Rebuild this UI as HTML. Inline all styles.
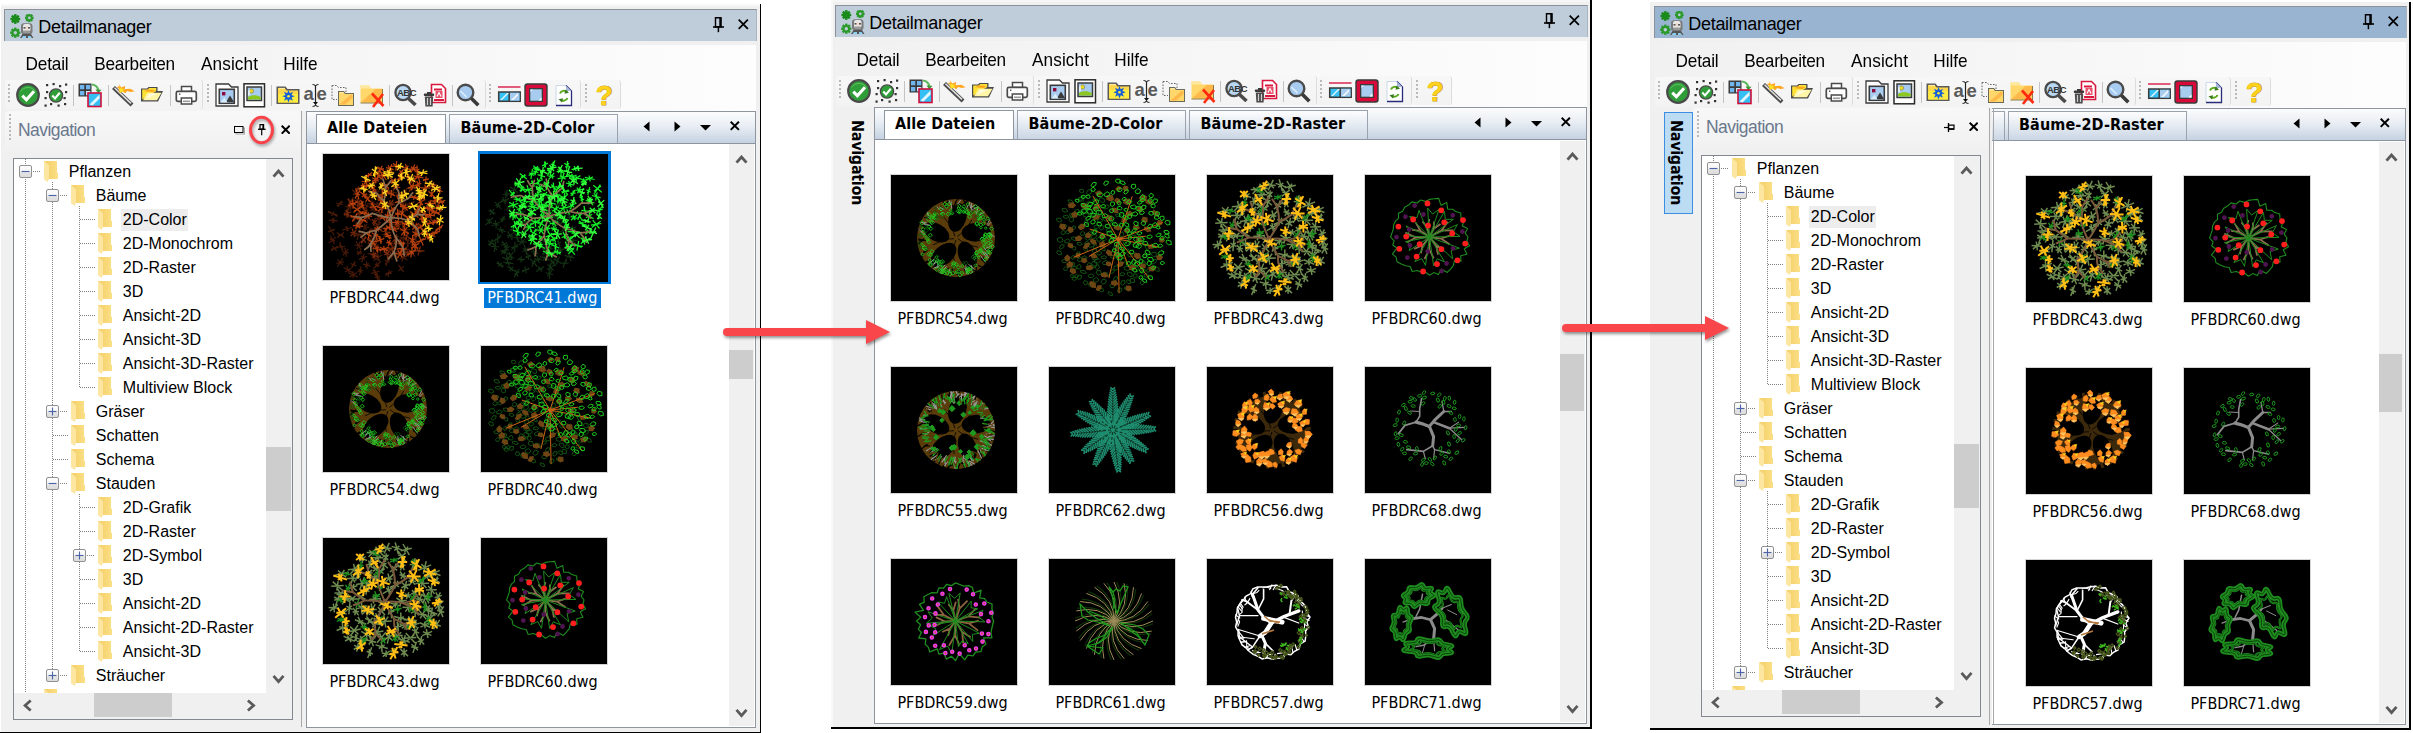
<!DOCTYPE html><html><head><meta charset="utf-8"><title>Detailmanager</title><style>html,body{margin:0;padding:0;background:#fff}#p{position:relative;width:2413px;height:733px;overflow:hidden;background:#fff}#p div,#p span,#p svg{position:absolute}#p span{white-space:nowrap}.tr{font-family:'Liberation Sans',sans-serif;font-size:16px;line-height:22px;height:22px;padding:0 1px 0 2px;color:#000}</style></head><body><div id="p"><svg width="0" height="0" style="left:0;top:0"><defs><linearGradient id="fg" x1="0" x2="1" y1="0" y2="0"><stop offset="0" stop-color="#f3cf6a"/><stop offset=".5" stop-color="#f7d674"/><stop offset="1" stop-color="#fbe088"/></linearGradient><linearGradient id="pm" x1="0" x2="0" y1="0" y2="1"><stop offset="0" stop-color="#fff"/><stop offset=".5" stop-color="#f4f4f4"/><stop offset=".55" stop-color="#e4e4e4"/><stop offset="1" stop-color="#dcdcdc"/></linearGradient><symbol id="t44" viewBox="0 0 126 126"><path d="M25.2 95.4l-5.3 6M25.4 98.6l-5.6 -0.4M23.4 102.9l-1.6 -9M86.2 98.7l5.2 0.1M85.5 95l6.6 7.6M91.2 97.5l-4.8 2.6M39.2 40.2l5.6 2.6M42.1 38.9l-0.1 5.2M45.5 40.8l-7 1.5M58.1 107.2l-7.6 7.3M56.7 111.7l-4.8 -1.6M54.8 113.5l-1.2 -5.2M44 70l-3.6 6M46.4 73.4l-8.3 -0.7M43.2 76.1l-1.9 -6.2M69.8 45.8l-0.5 6.2M74.6 47.7l-10.1 2.5M72.1 51.7l-5.1 -5.5M5.6 72.2l5.5 9.1M10.8 75.3l-5 2.8M11.8 75.6l-7 2.1M89.9 64.6l-7.8 4.8M87.4 70.1l-2.8 -6.1M84.4 71l3.2 -8M20.8 59.3l5.6 3.1M21.6 58.4l4 4.8M26.1 60.1l-5 1.4M37.9 101.7l4.1 4.1M41.3 99.4l-2.6 8.9M44.1 102.2l-8.2 3.2M75.9 96.3l-8 7M74.4 99.5l-5 0.5M74.8 104.2l-5.8 -8.9M54.4 60.9l2.1 8.1M57.4 63.6l-3.9 2.7M57.8 65.7l-4.7 -1.5M62.2 78.9l2.7 4.7M66.9 79.5l-6.7 3.5M68.2 82.4l-9.4 -2.2M72.6 59.1l5.7 1.6M75.3 56.1l0.3 7.6M78.6 59.8l-6.4 0.3M69.3 117.3l-7.2 4.3M68.6 119.5l-5.9 -0.1M65 123l1.3 -7.1M94.7 76.6l-5 9.1M95.4 81l-6.4 0.3M92.7 86l-1 -9.7M30.2 46l-4.5 2.4M30.9 49.9l-5.9 -5.3M25.6 51.6l4.7 -8.7M29.1 73.5l-10.1 2.5M25.4 76.8l-2.9 -4.1M24.2 77.2l-0.4 -5M14.4 105.7l5.3 5.5M19.6 104.2l-5.1 8.5M20.8 107.9l-7.5 1.3M86.6 59.7l10.3 -0.4M92.5 54.6l-1.5 9.7M95.8 57.1l-8.2 4.7M50.6 84.2l4.4 1.8M53.8 80.5l-2 9.3M56.9 83.9l-8.2 2.5M35.7 115.2l3.2 3.5M38 112.5l-1.3 8.9M40.2 116.3l-5.7 1.2M19.9 47.8l-6.4 3.9M20.2 50.7l-7 -1.7M14.9 52.9l3.6 -6.2M75.3 110.9l5.5 7.2M77 112.3l2.2 4.4M80.8 112.2l-5.4 4.7M49.2 81.7l-4.5 7.9M49.8 86.8l-5.5 -2.3M48.7 89l-3.4 -6.7M44.6 99.7l10.7 0.2M50.8 95.4l-1.6 8.8M52.6 99l-5.1 1.6M66.5 103.8l-4.4 6.7M66.8 108l-5.1 -1.6M63.3 112l2 -9.5M44.6 50.7l-2.6 4.8M45.6 52.2l-4.6 1.9M44.3 58.2l-2 -10.2M68.8 56.7l-4.5 8.7M68.5 62.7l-3.8 -3.3M67.2 63.9l-1.2 -5.7M88 83.9l4 7.7M94.1 86l-8 3.5M93.8 89l-7.5 -2.6M51.2 119.8l6 6.5M53.7 118.7l1.1 8.8M57.1 122.4l-5.7 1.4M9.4 92l4.3 4.9M14.7 92.1l-6.4 4.6M15.2 93.5l-7.3 1.9M64.9 31.1l-2.6 10M66.2 34.9l-5.1 2.4M67.4 39.5l-7.6 -6.8M56.6 39.8l3.1 6.7M62.4 41l-8.4 4.3M63.2 43l-10.1 0.3M27.6 109.5l5.6 2.4M32.1 107.3l-3.4 6.8M32.2 108.6l-3.7 4.2M69.7 90.4l8.8 -3.2M70.3 85.8l7.5 6M77 86.2l-5.8 5.1M56.4 53.6l0.5 9.3M60.5 58.2l-7.8 0.3M58.9 60.6l-4.5 -4.6M50 70.5l9.9 3.6M55.1 68l-0.4 8.8M57.9 68.2l-5.9 8.2M63.1 50.2l-0.7 5.7M65.4 50.4l-5.2 5.3M66.7 55.5l-7.9 -5M40.6 79.7l-10.1 2.2M40.3 82.5l-9.5 -3.4M34.1 85.9l2.8 -10.2M56.5 36.8l-8.1 3.7M55.3 39.8l-5.6 -2.2M50.7 42.3l3.6 -7.1M70.4 35.5l-1.2 5.6M71 34.7l-2.4 7.1M74.8 39.3l-9.8 -2.1M82.3 71.6l-0.7 9.1M87.2 75.5l-10.5 1.2M84.1 77.9l-4.3 -3.6M76.5 82.7l7.6 2.9M80.6 80.3l-0.5 7.7M84.6 82.3l-8.6 3.6M30.3 36.2l3.2 4M33.6 35.2l-3.3 6M34.8 40.7l-5.8 -4.9M8.9 64.4l2.6 4.3M11.3 63.6l-2.1 5.8M14.7 66.9l-8.9 -0.8M30.6 50.5l-7.6 6.2M31.4 54.7l-9.2 -2.3M27.3 56.5l-0.9 -5.8M83.4 46l-6.9 -1.2M82.4 48.7l-4.9 -6.5M79.9 48.6l0.1 -6.4M31.5 91l8.1 1.1M33 87.3l5.2 8.6M37.2 87.7l-3.2 7.6M44.4 59.1l-0.4 7.8M45.7 60.3l-3 5.5M47.9 66.7l-7.4 -7.4M48 73.9l1.4 5.9M50.5 74.5l-3.6 4.6M52.7 75.2l-8.1 3.3M83.2 93.1l-3.9 6.8M85.7 95l-9 3.1M83 99.1l-3.6 -5.1M71.4 68.1l3.4 4.7M75.4 67.7l-4.5 5.3M77.1 71l-7.9 -1.1M89.1 89.7l7.2 7.8M93.8 89.6l-2.2 8M98 94.2l-10.5 -1.3M47.7 51.7l4 6.3M51.9 52.5l-4.4 4.6M52 55.7l-4.6 -1.7M44.2 49.9l9.9 0M48.8 46.3l0.7 7.1M51.4 47.2l-4.5 5.3M29.8 61.4l5.7 4.8M33.8 60.3l-2.4 7.1M36.1 61.2l-7.1 5.3M33.1 46.7l4.4 9.4M36.5 49l-2.5 4.8M39.4 51.8l-8.3 -0.8M20.9 78.3l-6.6 5.6M20.2 81.2l-5.2 -0.2M21.4 83.9l-7.6 -5.4M81.9 49.3l8.5 3.6M86.2 48.5l-0.1 5.2M89.4 50.8l-6.6 0.6M71.4 72.1l-4.8 2M72.9 71.8l-7.8 2.5M69.1 77.2l-0.1 -8.3M51.5 115.3l1.7 6.2M56.5 117.2l-8.4 2.2M55 121l-5.4 -5.3M53.4 100l3.2 7.3M55.3 100.6l-0.6 6.1M59.3 100.8l-8.6 5.7M64.4 98.7l5.2 6.7M68 97.1l-2 9.9M70.1 100.9l-6.1 2.3M84.4 85.4l0.8 7.9M85.8 84.1l-2.1 10.5M87.1 89.8l-4.7 -0.8M59.5 93.7l-7 1.8M57.6 99.2l-3.1 -9.3M54.5 96.9l3 -4.6M53.8 47.8l4 6.9M57.6 49.1l-3.4 4.3M61 52.1l-10.2 -1.8M62.7 95.5l6.7 0.6M64.7 91.7l2.6 8.2M66.9 93.5l-1.7 4.7M5.2 56.9l9.1 5.5M11 57.5l-2.5 4.4M14.6 61.1l-9.7 -3M16.4 91l3.5 3.3M16.6 87.8l3.3 9.9M22 92.5l-7.5 0.5M52.4 42l-6.9 2.2M50.5 45l-3.1 -3.8M48.9 45.8l0.2 -5.4M6.9 84.9l5.1 2M7.3 81.8l4.2 8.4M12.8 82.9l-6.8 6.1M39.1 58.9l-6.5 2M36.9 62.2l-2 -4.7M35.6 63.7l0.6 -7.7M33.9 118.6l-7.6 4.5M34.7 122.9l-9.3 -4.1M30.2 124.3l-0.2 -7M83.4 69.1l-7.4 1.5M82.3 70.4l-5.3 -1.1M79.7 74.8l-0.1 -9.9M34.1 97.2l4.4 2.9M38 96.5l-3.3 4.3M39 97.8l-5.4 1.7M76.7 100.4l7.7 5.8M82.5 98.9l-3.8 8.9M84.4 101.9l-7.7 2.8M31 71.4l7.2 -0.6M33.2 68.1l2.8 6.1M36.7 68.1l-4.3 6.1M23.8 112.1l3 8M28.3 114.2l-6.1 3.9M29.8 118.8l-9.1 -5.4M45.8 109.5l-3.9 3.2M47.6 112.1l-7.5 -2M44.1 114.9l-0.6 -7.5" fill="none" stroke="#4a1a08" stroke-width="1.15" /><path d="M62.5 94.2l2.3 10.3M66 97.7l-4.7 3.3M66.1 100.7l-4.7 -2.8M113.5 45.1l-3.8 3.1M116.8 46.2l-10.4 0.8M112.9 51.7l-2.6 -10M62.7 36.4l3.1 4M65.7 34.4l-3 7.9M67.2 36.6l-6 3.4M31.6 46.3l8.4 5.6M33.7 44.6l4.3 9.2M37.4 45.5l-3.2 7.4M80.2 79.4l7.3 5.5M84.5 77.3l-1.4 9.7M85.7 78.5l-3.7 7.2M38.2 82.8l4.6 6M42.7 82.2l-4.3 7.3M43.4 83.5l-5.8 4.7M86.3 24.8l8.1 3.2M88 24.2l4.7 4.5M93.7 22.8l-6.8 7.2M98.2 36.3l0.9 7.7M99.8 36.5l-2.4 7.5M102.4 41.1l-7.5 -1.9M56.5 14.9l0.2 6.6M58.2 15.3l-3.2 5.8M61.6 18.6l-10 -0.8M92.8 59.9l6.1 -2.6M93.4 55.5l4.9 6.1M99.4 55.1l-7.2 7M110.4 80.3l-4.7 1.9M112.8 83l-9.6 -3.5M107 84.4l2 -6.2M69.8 60.6l-2.3 4.2M71.9 61.9l-6.5 1.7M70.2 66.4l-3.1 -7.4M107.5 65.3l6.8 4.2M111.4 65l-0.9 4.7M113.3 65.7l-4.8 3.3M82.3 98.1l4.8 2.7M83.9 96.4l1.5 6M86.1 97.3l-2.8 4.3M54.1 66.6l-5.2 2.8M54.2 70.8l-5.4 -5.7M50.7 72l1.5 -8M76.8 38.5l9.5 1.3M81.4 35.2l0.3 8M83.4 35.5l-3.8 7.3M67.2 26l2.5 4.2M71.2 27.1l-5.6 2M71.2 28.4l-5.5 -0.5M77.5 70l-5.1 3.5M77 73.4l-4 -3.1M75.4 75l-0.9 -6.4M22.6 56.1l3.8 6.4M25.1 54.8l-1.3 9M28.4 57.8l-7.7 3M57.8 77l9.9 1.6M61.1 73.8l3.3 7.9M63.6 74.2l-1.7 7.1M49.9 35.6l1.5 7.9M52.2 35.3l-3.1 8.5M55.3 40.6l-9.2 -2M75.3 82l-5.7 5.9M74.2 87.6l-3.3 -5.3M71.4 89.9l2.3 -9.9M93 68.7l3 5.1M95.7 68.9l-2.4 4.6M96.2 69.2l-3.4 4.1M49.1 89.5l5.1 4.5M50.7 88.4l2 6.7M53.7 88.3l-4.1 7M83.1 51.4l-4.3 2.7M82.3 57.4l-2.7 -9.3M81.2 55.3l-0.4 -5M97.4 92.2l-2.3 9.2M101.5 96.8l-10.6 -0M98.4 97.9l-4.4 -2.2M36.3 65.3l2.5 4.9M37.7 64.1l-0.3 7.1M40.7 65.6l-6.3 4.2M70.2 45.8l-5.5 8.1M70.6 50.7l-6.2 -1.7M68.5 53.5l-2.1 -7.3M52.8 98.6l-2.9 5.7M55.2 102.9l-7.6 -2.8M52 104.6l-1.3 -6.2M33.5 75.9l-5.8 6.1M33.8 79.4l-6.5 -0.9M31.9 83.2l-2.7 -8.6M53.6 23.4l-3.4 8.1M56.3 25.1l-8.8 4.6M54.5 28.6l-5.3 -2.5M86.1 49l4.5 3M88.2 48l0.4 4.9M91.5 47.2l-6.3 6.5M25.7 46.9l3.7 3.3M24.6 44.7l6 7.7M30.5 45.5l-5.9 6.1M97.7 65.3l7.9 1.1M99.2 62.4l4.8 6.9M103.9 62.2l-4.5 7.4M41.2 54.6l1.4 4.6M44.3 56.1l-4.7 1.5M45.1 61l-6.4 -8.3M66.4 13l1 8.2M69 15.8l-4.1 2.6M71.5 18.5l-9.1 -2.7M35.6 32.4l-2 5.7M37 34.8l-4.8 0.9M37 36.3l-4.8 -2.1M103.9 54.6l8.5 2.4M106.3 52.1l3.6 7.4M109.8 53.9l-3.4 3.9M83.3 34.2l9.1 -0.1M87.4 31.5l1 5.2M90 30.6l-4.1 7.1M72 92.3l-5.5 4.3M73.9 95.2l-9.3 -1.4M69.5 98.1l-0.5 -7.1" fill="none" stroke="#7a2a0a" stroke-width="1.15" /><path d="M38 52.3l-7.5 6.3M37.2 54l-6 3M37.9 58.2l-7.5 -5.4M99.8 60.8l-1.2 7.6M102.2 63.9l-6.1 1.4M101.5 69.4l-4.7 -9.6M76 39.1l2.8 4.5M78.7 39.2l-2.6 4.3M81.4 41.6l-8.1 -0.4M68.8 10.2l-3.8 8.7M70.7 15.6l-7.6 -1.9M68.7 17.8l-3.7 -6.5M89.7 81.1l-0.4 11M91.8 84.8l-4.6 3.4M92.3 89.1l-5.7 -5.2M43.7 80.1l4.7 1.8M43.7 79.3l4.6 3.3M47.2 75.6l-2.4 10.7M90.4 21.8l10.1 2.2M94.3 18.9l2.2 8.1M99.7 20l-8.5 5.8M66.1 75.7l10.1 -1.1M68.3 72.3l5.7 5.8M72 72.7l-1.8 4.9M71.7 99.6l10.6 0.8M74.9 96.4l4.3 7.1M79.7 95.9l-5.4 8.2M106.8 30.5l-8.5 6.9M107.3 34l-9.5 -0.2M103.4 37.3l-1.6 -6.7M87.8 41.3l7.1 4.3M92.4 41l-2 4.8M95.9 43.3l-9.1 0.1M109.5 47.3l7.8 -2M110 42.5l6.8 7.5M115.5 43.6l-4.1 5.5M41.1 23.7l3.3 7.8M43.9 25.1l-2.5 5M46.7 27.6l-8.1 -0.1M113.7 74.8l-3.4 7.8M116.9 77.3l-10 2.8M114.5 79.7l-5 -1.9M57.9 60.5l4.1 6.1M62.7 62.1l-5.5 2.9M65.2 64.4l-10.5 -1.9M54.6 41.9l9.1 -2.9M59.3 35l-0.2 10.9M60.1 35.3l-1.8 10.5M67.2 85.6l-1.6 6.5M69.4 89.1l-6.1 -0.5M68.6 91.3l-4.5 -4.9M79.8 20.2l-5.2 7.6M80.7 22.2l-7 3.6M79.3 26.5l-4.3 -4.9M41.1 41.6l7 6.5M42.8 42l3.7 5.7M46.7 42l-4.1 5.7M57.6 28.3l8.5 6.2M60.4 27.6l2.9 7.7M66.2 29.8l-8.8 3.1M82.6 50.4l-2.7 5.4M85.6 53.9l-8.7 -1.5M84.7 56.5l-6.9 -6.9M63.7 50.9l-8.9 6.4M64.6 55l-10.6 -2M58.6 58.8l1.2 -9.6M97.1 73.3l8.2 6.9M105.1 73.3l-7.8 7M104.5 78.8l-6.5 -4M49.4 59l-7.7 5.4M49.2 62.3l-7.2 -1.2M46 64.9l-0.8 -6.5M58.4 95.7l-8.2 -1.2M54.8 98.6l-1.1 -6.9M53.3 97.4l2.1 -4.6M80.2 61l8.5 5.5M82.2 61.4l4.5 4.8M85.6 61.6l-2.2 4.3M101.8 53.4l5.4 1.4M103.8 51.2l1.4 5.9M108.5 53.2l-8 1.8M81.1 72.5l0.6 9.4M84.4 73l-6 8.3M85.8 79.7l-8.9 -5.2M52.9 37.4l-4.9 2.3M55.6 40.5l-10.1 -3.9M51 41.2l-1 -5.2M77.2 86l3.3 6.9M81 88.1l-4.4 2.6M82.1 89.4l-6.6 0M108.8 37.3l-0.3 5.7M110.7 37.9l-4.2 4.6M111.9 43.1l-6.5 -5.9M73.3 54.3l-8.1 2.7M70.1 58.2l-1.6 -5.1M66.8 58.3l4.9 -5.3M96 81.5l4.2 9.9M100.7 84.4l-5.1 4.2M103.1 84.7l-10 3.6M82.5 9.9l2 8.9M85.3 11.6l-3.7 5.5M88.1 15.6l-9.3 -2.5M40.1 72.1l-10.2 -0.4M37.3 74.3l-4.6 -4.7M32.5 74.9l5 -5.9M102.1 60.1l9.9 1.7M106.1 57.3l2 7.3M110 58.4l-5.9 5.2M86.2 96.7l4.7 3.2M89.4 93.1l-1.6 10.4M92.9 95.6l-8.6 5.4M52 21.5l0.7 7.9M55.6 23.1l-6.5 4.7M55.6 27.1l-6.5 -3.4M55.8 83.8l3 4.3M56.8 81.9l1.2 8M61.3 84.3l-8 3.3M75.8 65l-3.3 6.3M77.9 67.9l-7.5 0.5M76.2 70.1l-4.1 -4M100.5 40.5l-2.1 5.3M101.9 43.5l-4.9 -0.8M102.2 46.3l-5.4 -6.3M92.2 88.6l-0.2 6.5M96.2 89.3l-8.1 5.1M94.9 94.7l-5.6 -5.8M56.9 17.2l6.5 8.8M61.8 17.8l-3.4 7.7M62.5 22.6l-4.7 -1.9M87.3 57.4l8.2 6.2M94.3 57l-5.9 7M94.4 59.5l-6 1.9M34.4 59l-5 8.6M36.3 63.6l-8.9 -0.7M36.5 65.3l-9.3 -4.1M108.1 45.8l-1.9 7M112.7 49.3l-11 0M108.8 51.1l-3.3 -3.7M51.2 73.6l7.4 2.5M54.2 72.1l1.3 5.4M57.1 73.2l-4.4 3.3M64 38l8.2 3.9M68.5 35.9l-0.7 8.1M71 40.1l-5.7 -0.4M33.1 35.2l2.8 10.3M37.1 36.1l-5.2 8.5M37.2 40.8l-5.4 -1M105.7 24.6l-5.7 2M105.5 25.4l-5.4 0.3M102.6 28.6l0.5 -6.1M97 26.9l-3 7.4M98.3 29.2l-5.5 2.8M97.2 34.1l-3.5 -7M110.1 67.7l7.6 -1M114.2 64.2l-0.4 6.2M117.7 64.9l-7.5 4.7M45.2 32l-9.6 2.6M42.9 35.2l-5.1 -4M41.2 37.3l-1.6 -8.1M85.5 19.7l1.1 10M87.6 22.3l-3.2 4.8M89.6 27.2l-7.2 -4.9M93.9 69.8l-4.5 5.9M95.8 75.2l-8.3 -4.8M93.3 77.1l-3.4 -8.8M107.3 81.3l-5.5 2M106.8 85.9l-4.6 -7.2M104.8 85.4l-0.6 -6.1M91.8 10.4l-3.9 8.7M93.6 13.4l-7.5 2.5M91.8 16.9l-3.8 -4.4M37.7 46.1l3.1 8.6M40.1 47l-1.7 6.7M41.5 51.5l-4.4 -2.2M106.8 28.2l6.1 6.7M110.7 28.1l-1.7 6.9M113.7 30.8l-7.6 1.6M72.7 30.3l1.1 5.3M76.1 30.6l-5.6 4.7M77.2 33.5l-8 -1.1M116.5 71.2l0.2 5.6M119.9 70.9l-6.7 6.2M119 73.4l-4.8 1.3M50.3 83.8l-1.7 9.5M53.2 86.9l-7.4 3.4M53.1 91.2l-7.3 -5.3M48.9 48.4l4.4 8.6M55.7 52.2l-9.2 1.1M54.2 56.2l-6.3 -6.8M54.7 42.4l6.8 8.1M59.9 41.8l-3.6 9.3M61.4 47.2l-6.7 -1.4M83.9 66.6l-3.6 6.6M84.9 70l-5.7 -0.1M86.4 72.2l-8.6 -4.7M105.9 66.4l4.8 4.7M112.3 66.5l-8.1 4.5M113.1 67.9l-9.6 1.7M92.2 50.9l5.8 7.1M97.8 49.7l-5.4 9.4M98.5 50.7l-6.7 7.5M118 34.1l-3.7 4.1M119.6 37.7l-6.8 -3.1M117 39.7l-1.6 -7M113.4 51.8l5.4 4.8M114.9 50.2l2.3 8M118.5 53.1l-4.9 2.2M80.5 15.2l-5.4 6.4M79.9 16.8l-4.1 3.2M79.1 21l-2.5 -5.3M42.3 63.6l-3.9 5.4M43.1 66.7l-5.5 -0.9M44.5 68.5l-8.3 -4.4M46.6 31.3l6.4 5.1M49.1 30.2l1.5 7.4M52.6 32.3l-5.5 3.2M89.4 77.4l7.4 5.2M93 76.7l0.1 6.7M95.8 78.7l-5.4 2.7M62.9 68l8.2 0.3M65.8 65l2.5 6.4M67.6 64.8l-1.1 6.9M38.8 57.1l2.9 3.9M43.9 58l-7.2 2.2M44.4 60l-8.1 -1.8M65.2 56.7l-2 10.5M68.4 60.4l-8.4 3.1M66.5 63.7l-4.6 -3.5M70 9.3l6.6 5.2M73.6 7l-0.7 9.7M78.3 11.4l-10.1 1M41.8 21.7l7.2 -0.6M45.4 18.9l-0 4.9M49.2 18.3l-7.6 6.3M72.7 24.1l-4.7 5.4M73 26.7l-5.4 0.2M73.9 30.5l-7.2 -7.4M72.2 59.1l5 1.4M74.5 54.9l0.4 9.9M76.9 58.6l-4.4 2.4M94.8 44.8l5.2 6.2M97.5 44.3l-0.1 7.2M100.8 46.3l-6.6 3.2M61.8 79.6l6.8 4.9M63.9 79l2.6 6.1M68.2 81.2l-6 1.6M57.3 93.5l7.6 3.2M60.8 91.9l0.6 6.3M65.5 93.3l-8.9 3.4M73.8 42l4.4 10M78.4 45.3l-5 3.3M79.7 45.2l-7.6 3.5M61 14.8l-6.7 -0.1M60.9 16.8l-6.5 -4.1M56.1 17.8l3.2 -6M59.8 22.5l-9.8 -3.1M58.3 25l-6.8 -8.2M54.4 25.4l1 -9M43.7 28.4l-0.4 6.4M46.4 30.2l-5.8 2.9M48.1 32.4l-9.2 -1.5M34.5 47.6l-9.3 4.5M32.7 50.3l-5.7 -0.9M30.1 54.3l-0.5 -8.8M83.7 94.8l-9.7 0M81.9 95.2l-5.9 -0.8M76.8 99.4l4.2 -9.3M95.1 73.8l5.1 -1.9M96.7 70.1l1.8 5.5M101.7 69.6l-8 6.4M107.4 50.9l3.7 8.4M112.3 53.9l-6.2 2.4M111.7 59.1l-5 -8.1M106.8 60.5l-9 -0.1M106.7 63.5l-8.8 -6M103.6 65.7l-2.7 -10.4M86.4 30.3l6.4 4M90.7 28.5l-2.1 7.7M94.3 30.5l-9.3 3.7M60.2 74.6l10.2 -1.9M62.9 71.6l4.8 3.9M68.8 70.5l-7 6.2M55.3 80.3l-4.8 1.6M56.6 83.1l-7.5 -4.1M54 86.4l-2.2 -10.7M79.9 53.8l-1.7 10.6M81 57.4l-3.8 3.5M81.8 61.7l-5.4 -5.2M90.3 14.5l7.6 4.2M94.1 11.4l0 10.3M96.4 15.1l-4.6 3M114.6 54.9l-4.2 6.9M116.5 58.7l-8 -0.6M116.8 60.6l-8.7 -4.5M40.5 37.7l1.9 7.2M44 39.7l-5.1 3.3M45.6 44.8l-8.3 -6.9M115.8 47.2l5.4 1.1M116.5 43l4.1 9.6M122.2 46.3l-7.4 2.8" fill="none" stroke="#b8400c" stroke-width="1.25" /><path d="M68 64Q76.1 63.2 84.8 66.3M84.8 66.3Q89.7 63 94.3 60.4M94.3 60.4Q94.9 56.7 96.5 54.4M94.3 60.4Q97.9 61.3 101.1 60.6M84.8 66.3Q89.2 69.7 94.2 74.8M94.2 74.8Q96 79 96.2 82M68 64Q68.2 76.3 73.2 84M73.2 84Q77.7 88.7 80.1 94.1M80.1 94.1Q81.1 98.1 81.2 101.6M73.2 84Q73.8 91.6 71.2 97.3M71.2 97.3Q71.6 101.6 73.8 106.8M71.2 97.3Q68.1 102.1 65.4 104.8M68 64Q61.2 70.1 53.4 76.4M53.4 76.4Q52.4 82.5 48 89.3M48 89.3Q47.6 94 48 97.3M48 89.3Q45.6 93.4 41.8 95.6M53.4 76.4Q48.9 76.8 43.2 79.1M43.2 79.1Q40.3 81.6 37.9 83.1M43.2 79.1Q40.1 77.9 36.2 77.4M68 64Q59.2 62.8 49.2 59.4M49.2 59.4Q43.5 62.2 39 63.3M39 63.3Q36.2 67 34.7 69.7M39 63.3Q34.6 63.2 31.2 62.5M68 64Q66.4 54.4 61 47M61 47Q57.1 44.2 53.4 39.1M53.4 39.1Q50.2 38.5 46 37.5M61 47Q62.7 40.3 62.6 33.4M62.6 33.4Q60.9 28.8 60 25.1M62.6 33.4Q65.7 29.6 67.7 27.2M68 64Q71.1 54.8 75.6 49.2M75.6 49.2Q76.2 43.6 75.7 37.9M75.7 37.9Q73.7 34.7 72.2 30.9M75.6 49.2Q81.7 46.1 85.3 44.4M85.3 44.4Q87.3 41.7 89.7 38.8" fill="none" stroke="#8c6e50" stroke-width="1.7" stroke-linecap="round"/><path d="M84.8 52.6l10.9 -0.5M88.2 48.7l4.2 7.4M94.5 50l-8.5 4.7M84.4 13.6l-2.3 9.2M88 16.9l-9.4 2.5M84.7 21l-2.9 -5.7M59.7 29l-3.2 6.5M60.6 31.1l-5.2 2.4M59.4 35.6l-2.7 -6.7M70.3 20.4l-10.5 1.1M69.8 23.3l-9.5 -4.6M65.1 25.3l-0 -8.6M40.9 22.5l4.1 4M43.3 20.9l-0.7 7.2M47.6 26.6l-9.3 -4.2M67.8 14.2l-4.1 8.4M71.1 19.1l-10.6 -1.4M67.1 21.1l-2.6 -5.4M114.7 31.1l-3.7 6.9M117.6 32.6l-9.7 3.8M117 37.5l-8.4 -5.9M40.4 31.6l0.6 6.9M44.7 35.7l-8.1 -1.2M42.7 37.2l-4.2 -4.3M78.8 37.4l0.1 10.7M81.4 41.1l-4.9 3.3M81.3 44.7l-4.8 -3.8M99.5 76.3l4.3 4.9M102 74.7l-0.8 8.2M104.5 76.4l-5.7 4.7M64.5 36.3l-4.8 3.3M64.6 36.9l-5 2.3M63.6 42l-3 -8M112.7 54l10.8 -0.6M116.7 51.3l2.9 4.6M120.6 51.2l-5 4.8M78.5 8.9l-4.1 7.4M80.4 12.5l-8 0.1M77.7 14.7l-2.5 -4.3M120.3 63.5l-6.4 5.2M120.6 68.5l-7 -4.8M116.3 71.2l1.7 -10.3M94.5 17.8l9.9 1.9M100.7 15.4l-2.4 6.7M104.4 17l-9.9 3.5M60.9 46.7l1.9 8.1M64.5 47.7l-5.2 6M66.4 52.8l-9 -4.2M104.4 50.3l7.2 2.8M106.6 48.7l2.8 5.9M110.5 51.2l-5 1M71.8 25.1l1.3 9M76.4 26.1l-8 7M75.5 31.1l-6.1 -3M109.2 26.6l-5.2 6.2M111.4 30.4l-9.6 -1.4M105.9 32.2l1.3 -4.9M87.7 67.1l-4.5 3.3M89.3 70.3l-7.6 -3.3M86.2 73.1l-1.4 -8.7M89.6 20l-3.5 9.5M91.2 23.9l-6.8 1.7M91.9 27.6l-8 -5.7M99.1 68.1l5.2 -0.5M100.6 62.8l2.2 9.9M103.4 63.8l-3.3 8M54 12.9l-3.9 9.1M55.1 19.8l-6.2 -4.8M51.6 22.7l0.9 -10.5M92.9 32.5l5.5 7.9M96.4 34l-1.5 5.1M98.7 36.6l-6.1 -0.1M46.6 29l3.2 5.1M50.8 28.3l-5.2 6.4M51.9 31.1l-7.3 0.9M46.6 40.9l7.4 1.1M47.6 37.1l5.3 8.7M51.8 38.8l-3.1 5.2M105.6 83.3l4.7 1.5M105.9 79.5l4.1 9M109.2 80.6l-2.5 6.9M115.8 39.1l-1.7 9.4M119.7 43.9l-9.4 -0.1M116.3 46l-2.6 -4.4M101.2 52.3l-2.4 6.4M102.2 54l-4.5 3M102.7 58l-5.4 -4.9M86.3 61.7l5.6 4.8M89.3 59.5l-0.4 9.3M92.1 65.1l-6 -1.9M97.7 40.3l-1.4 6.2M99.9 40.8l-5.8 5M99.2 44.7l-4.4 -2.6M81.7 24.4l-6.8 -3.2M79.3 25.6l-1.9 -5.6M78.2 26.4l0.3 -7.2M94.3 35.9l3.2 7M94.9 35.7l1.8 7.3M98.9 39.1l-6.2 0.4M100.9 34.9l0.4 9.7M103.4 35.3l-4.5 8.8M105 41.6l-7.8 -3.7M109.6 74.4l-7.8 0M107.7 76.4l-4.1 -4M105.6 77.8l0.2 -6.9M81 36.3l3.1 8.3M84.2 38.6l-3.2 3.7M86.1 39.5l-7.1 1.9" fill="none" stroke="#ffd21e" stroke-width="1.3" /></symbol><symbol id="t41" viewBox="0 0 126 126"><path d="M34.1 88l-0.5 10.1M37.3 90.2l-7 5.7M37.2 92.6l-6.9 0.8M89.4 83.2l5.1 7.2M92.6 84.5l-1.3 4.7M96.6 86l-9.4 1.7M34.5 31.2l-3.1 9.1M36.1 34.7l-6.3 2.1M36.9 38.8l-8 -6.1M5.5 65.3l5.5 4M8.1 64.6l0.1 5.5M12 63.5l-7.6 7.6M78.9 46.5l-1.6 6.4M82.1 48.1l-8.1 3.3M79.1 52.3l-1.9 -5.1M57.2 112.4l3.8 5.2M63.2 112.5l-8.2 5.1M61.5 115.1l-4.8 -0.2M49.2 67.4l-10 0.9M47 69.6l-5.8 -3.3M43.8 71.5l0.7 -7.1M85.5 104.5l-3.4 9.3M85.5 105.9l-3.4 6.5M87.6 109.3l-7.6 -0.2M28.8 47.9l-0.2 9.8M32.6 49.6l-7.7 6.4M32.1 53.1l-6.8 -0.4M57.6 38.3l7.3 6.3M61.1 38.2l0.3 6.4M63 39.6l-3.4 3.6M89.2 59.6l-0.8 6.1M93.4 61.1l-9 3.1M92.8 66l-7.8 -6.8M32 73.5l0.8 6M36.1 77.3l-7.5 -1.7M34.1 78.5l-3.5 -4M50.8 83.4l-3.5 3.4M52.4 85.2l-6.6 -0.3M50.7 87.9l-3.3 -5.7M14.8 87.3l-1.6 10.5M18.3 92.8l-8.6 -0.4M15.8 96l-3.6 -7M63.3 60.2l-1.5 6.6M66.3 62.2l-7.6 2.7M65 67.7l-4.9 -8.3M76.5 70.6l-6 3.9M76 73.9l-5 -2.7M75.3 76.5l-3.5 -7.8M41.1 116.5l7 -1.2M43.8 112.4l1.6 7M48.5 113.9l-7.7 4M44 105.4l-7.9 0.3M42.2 107.1l-4.3 -3.2M39.8 108.6l0.5 -6.3M62.7 101.8l2.4 5.3M65.9 102l-4.1 4.8M68.9 106.4l-10 -4M77.5 94.4l3.9 3.6M79.4 93.5l0.1 5.5M83.6 94.6l-8.3 3.1M24 62.4l-4.3 5.8M24.8 65.3l-5.9 -0.2M21.5 68l0.7 -5.6M16.5 107.6l5.2 6.1M21 108.8l-3.7 3.7M22.7 112.2l-7.1 -3.1M70.5 117.2l-4.2 5.2M72.1 120.8l-7.4 -2.1M68.6 125l-0.5 -10.4M91.6 101.9l-6.3 1.4M93.2 103.9l-9.5 -2.5M90.1 107.4l-3.2 -9.4M16.2 74.8l8.4 2.8M19.3 72.9l2.2 6.7M22.5 75l-4.2 2.4M47.3 59.6l8.4 1.6M51.7 57.6l-0.3 5.5M54.6 60l-6.1 0.7M66.4 93.1l5.1 1.8M68.6 91.5l0.7 4.9M72.3 90.6l-6.9 6.8M52.7 74.1l6.3 4.2M56.5 73.4l-1.2 5.6M59.2 75.9l-6.8 0.5M38.5 117.8l-5.6 2.8M37 122.6l-2.5 -6.9M33.2 123.4l5 -8.4M20.4 81.1l-7.3 6.4M19.6 83.2l-5.7 2.3M16.8 89.1l-0.1 -9.5M25.9 98.7l7.1 5.9M28.3 98.3l2.3 6.7M32.5 97.9l-6 7.5M38.5 45.1l6.1 5.8M42.8 44.4l-2.5 7.3M45.2 45.7l-7.3 4.6M81.5 73.2l1.4 5.8M84.9 73.6l-5.5 5M85.2 74.1l-6 4M65.9 55l5.3 6.3M71.3 54.7l-5.5 6.7M71.5 58.6l-5.8 -0.9M54.9 107.5l-4.3 2.1M56.2 112.5l-7 -7.9M50.7 112.8l4 -8.5M52.2 37l-1.4 5.6M55.9 41.6l-8.6 -3.6M52.8 42.8l-2.5 -6M42.4 57l-3.8 3.9M44.3 57.4l-7.6 3M44.2 61.7l-7.3 -5.5M20.3 45.8l5.8 1.6M21.8 43.3l2.6 6.7M28 44.6l-9.7 4M46.3 72.8l-1.8 4.9M49.3 71.9l-7.8 6.8M47.8 75.9l-4.6 -1.4M67.3 41l7.9 3.7M70.6 38l1.2 9.7M75.7 40.8l-8.9 4.1M13.1 54.8l-4.2 6.2M14.4 59.5l-6.8 -3.1M13.1 60.6l-4.2 -5.4M21.1 95.7l2.5 4.5M24.6 95.8l-4.5 4.2M25.6 99l-6.4 -2.2M68.3 82.1l-6 5.2M69.6 84.1l-8.7 1.3M68.3 88.2l-6.1 -6.9M62.7 90.9l-8.1 -1.5M59.7 94.1l-2.1 -7.7M57.4 92.3l2.4 -4.2M23.9 38.2l2.7 4.2M26.2 36.2l-1.8 8.1M28.9 39.6l-7.2 1.2M67.8 48.2l-4.6 4.7M68.7 53.8l-6.4 -6.4M65.3 53l0.3 -4.9M26.3 106.1l2 5.8M29.9 108l-5.3 1.9M32.4 109.8l-10.2 -1.6M72.5 104.4l7.9 5.2M76.7 104.6l-0.6 4.7M78.6 102.4l-4.4 9.3M65.9 72.1l0.3 5.1M67.6 72.8l-3.1 3.7M69 76l-5.9 -2.6M26.1 88.7l-5.9 2.8M25.5 92.5l-4.8 -4.8M24.9 92.7l-3.6 -5.3M54.9 67.5l-9.1 5.1M55 71.2l-9.2 -2.3M51.4 74.4l-2.1 -8.7M78.9 59.8l-9.3 4.1M77.1 64.5l-5.8 -5.2M72.9 65l2.6 -6.4M39.5 31.5l4.2 3.5M41.8 29.3l-0.2 8M44.3 33.5l-5.3 -0.4M49.9 102.1l-5.5 0.6M47.6 105.5l-0.9 -6.2M44.9 104.1l4.4 -3.3M58.9 103.8l-3.7 3.1M60.9 105.8l-7.7 -1M58.4 109l-2.6 -7.5M87.9 91.9l3.2 6.2M92.4 94.4l-5.7 1.2M94.1 97.8l-9.1 -5.5M57.1 42.1l-0.9 7.9M59.9 44.4l-6.4 3.3M57 48.7l-0.7 -5.4M88.5 73.2l3.9 3.5M91.6 71.6l-2.3 6.6M95.2 72.7l-9.4 4.5M40 85l2.6 5.6M44.3 84.8l-6.1 6M46 88l-9.4 -0.4M80.3 63.9l2.7 5.7M83.6 63l-3.8 7.6M86.1 69l-8.8 -4.5M47.6 93.6l-6.1 4.3M47.3 97.1l-5.4 -2.6M45.7 100.5l-2.4 -9.5M7.2 86.6l5.6 3.9M11.6 85.2l-3.2 6.8M12.7 86.2l-5.5 4.6M76.3 87l3.1 5M76.8 84.8l2 9.4M80.2 88.1l-4.8 2.7M31.6 58.7l0.6 7M36 59l-8.1 6.4M35.6 62.2l-7.5 -0.1M35.8 80.9l0.4 5.7M40.8 84.2l-9.6 -1M38.2 88.2l-4.4 -9M74.3 63.2l5.3 9M78.8 65.9l-3.8 3.6M80.4 69.5l-7 -3.4M65.9 92.7l-4.6 8M65.9 99.4l-4.6 -5.4M62.8 100.9l1.7 -8.5M32.4 112.6l-4 4.5M34.4 117.3l-8.1 -4.9M31.7 116.9l-2.6 -4.2M73.4 94.7l0.8 5.5M78 95l-8.5 4.9M77 96.4l-6.4 2M50.2 97.5l7 2M51.3 93.9l4.8 9.2M55.7 96.1l-4 4.8M26.1 81.4l5.9 0.5M26.7 77.3l4.7 8.7M31.7 79.1l-5.3 5.1M13.7 47.9l6.5 6.9M18.1 48.6l-2.3 5.4M19.7 51.2l-5.4 0.3M87.4 50.2l1.3 5.3M90.8 51.7l-5.7 2.3M92.5 55.4l-8.9 -5.1M48.8 48.9l-0.5 6.9M51.9 51l-6.6 2.6M53.5 52.7l-9.9 -0.8M14.4 66l0.8 8.4M18.8 68.3l-8.1 3.7M17.8 71.2l-6 -2.1M80.5 40.1l-3.2 4.9M82.1 42.6l-6.6 -0.1M79.1 46.1l-0.4 -7.1M73 111.3l-6.9 4.2M72.7 116.5l-6.2 -6.2M70.1 117.1l-1 -7.4M69.6 104.7l4.1 7M74.8 104.4l-6.4 7.8M73.8 109.1l-4.4 -1.8M20.9 103.5l10.5 2.1M25.5 100.6l1.3 7.9M27.8 102.8l-3.3 3.6M22.9 92.5l4.9 4M26.5 89.9l-2.2 9.3M28.5 92.2l-6.2 4.7" fill="none" stroke="#143214" stroke-width="1.15" /><path d="M94.8 21.5l-9.4 0.8M93.7 23.4l-7.3 -3.1M88.5 24l3 -4.2M43.1 32.8l-4.3 4.5M44.9 38.3l-7.9 -6.6M40 37.6l1.9 -5.2M61.8 97l10 4.3M65.2 96l3.2 6.4M67.2 95l-0.8 8.3M105.8 71.4l-8.3 -2.6M105.3 73.1l-7.3 -6M101.3 72.6l0.7 -5M30 58.6l4.7 6M32.9 57l-1 9.3M36.1 61.7l-7.4 -0.1M78 52.8l-6.9 4.4M79.1 57.5l-9.2 -5M73.1 58.4l2.9 -6.8M117.7 53.6l1.2 5.1M121 52.5l-5.5 7.3M121.7 55.3l-6.9 1.6M72.1 7.6l0.5 6.8M73.9 6.4l-3.1 9.1M74.7 11.9l-4.8 -1.8M112.3 31.2l8.5 7M119.3 30.6l-5.5 8.3M120 32l-7 5.3M74.5 79.1l-9.9 3.8M72.3 84.6l-5.5 -7.1M68 83l3 -3.9M75.5 33l-5.6 0.2M75.1 35.9l-4.8 -5.4M73.4 37.7l-1.2 -9.2M51.5 14.9l-1.6 10.3M53.6 18.9l-5.9 2.4M53.3 21.5l-5.1 -2.8M53.3 73.3l-10 -0.4M50.8 77.1l-5.2 -8M46.2 76.9l4.2 -7.5M101.6 81.5l2.1 9.2M105.4 82.3l-5.5 7.7M105.7 88.5l-6.2 -4.8M107.8 57.3l-7.5 -1M105.1 59.3l-2.1 -5.1M105.2 61.7l-2.3 -9.9M92.3 47.5l-2.9 7.6M95.5 49l-9.2 4.5M93.1 53.3l-4.6 -4M81 42.1l-4.7 7.2M81.8 43.9l-6.3 3.6M80.5 49.5l-3.8 -7.7M62.7 44l-5.2 5.6M62.8 45.7l-5.2 2.2M60.8 51.9l-1.4 -10.1M105.8 76l3.7 3.8M111.3 75.5l-7.2 4.8M110.2 78.6l-5 -1.5M47.3 58.9l3.5 3.5M49.4 58.2l-0.8 4.9M52.4 59.6l-6.7 2.1M83.8 16.9l-8.2 0.7M83 19.1l-6.6 -3.6M80.3 21.7l-1.2 -8.7M111.4 45.2l-4.7 5M113.5 49l-8.9 -2.5M112 51.2l-5.9 -7M82.2 67.1l5.5 5.1M84.5 66l1.1 7.2M86.9 66.3l-3.8 6.6M73.2 18.9l-5.5 6.5M73.5 22.4l-6.2 -0.3M72 24.7l-3.2 -5.1M103.4 35.1l-10.6 1.4M100.5 38l-4.8 -4.4M96.5 39.2l3.1 -6.8M93.2 93.7l-5.6 6.1M92.6 95l-4.4 3.4M93.9 100.6l-6.9 -7.8M63.4 7.5l1.3 6M64.6 7.5l-1.1 5.8M67 9.1l-5.9 2.8M71 65.6l3.9 6.6M74.3 66.5l-2.8 4.7M77.1 67.9l-8.4 2M59.7 53.9l3.5 6.4M62.8 52.1l-2.6 10.1M64 56.6l-5 1M76.6 95.7l-0.5 5.1M80 98.4l-7.2 -0.3M79.5 100.1l-6.1 -3.6M93.1 89.9l7.5 3.6M97.7 86.8l-1.8 9.8M101.8 92.3l-9.9 -1.2M40.1 46.3l6.4 -2.2M40.6 41.5l5.4 7.4M43.7 42.1l-0.7 6.3M58.7 81.3l1.6 5.4M61.2 82.2l-3.4 3.5M61.2 86.6l-3.4 -5.2M35.8 55.5l6.3 -2.4M39.1 51.4l-0.3 5.9M40.3 51.2l-2.7 6.4M56.6 20.7l7.5 2.2M59.6 17l1.5 9.5M61.1 18.6l-1.5 6.3M34.9 73.6l3.5 8.2M37.3 73.8l-1.2 7.8M41.4 79.3l-9.4 -3.2M111.7 66.2l6.8 8.3M119.6 67.3l-8.9 6.1M120.3 69.5l-10.4 1.7M50 44.3l2.5 6.9M51.7 44.2l-0.8 7.1M56.7 48.1l-10.9 -0.6M54.8 84.8l-7.4 1.9M54.9 89.4l-7.6 -7.4M49.4 90.4l3.6 -9.4M85.7 50.7l-6.2 6.7M87.2 53.4l-9.3 1.3M83.8 58.9l-2.4 -9.6M50.7 26.3l2.5 6.5M54.7 29.6l-5.6 -0.1M53.4 31.9l-3.1 -4.7M97.9 13.6l-7.5 2M95.1 17.1l-1.9 -5.1M91.8 16.3l4.6 -3.4M92.2 36.5l-0.5 5.3M94.1 36.4l-4.3 5.5M94.6 39.1l-5.2 0.2M112 22.7l-6.7 3.6M113.6 25.5l-9.8 -2.1M109.2 27.5l-1.1 -6M80.6 83.7l6.5 -3.3M82 78.3l3.7 7.4M84.3 79.4l-0.8 5.2M68.7 45.7l2.7 6.5M70.1 43.7l-0.2 10.5M74.8 50.1l-9.6 -2.3M33.9 38.6l-4.7 2.9M35.1 44.2l-7.1 -8.3M30.5 42.3l2.2 -4.5M90.5 82.1l-3 6.1M92.1 83.3l-6.3 3.6M90.8 88.2l-3.8 -6.1M56.6 66.9l7.4 5.3M61.6 66.3l-2.7 6.4M62.1 67.6l-3.6 3.8M55.3 74.8l-5.4 8.2M55.6 75.5l-5.9 6.8M56.4 80.8l-7.5 -3.8M41.4 63.4l-5.9 5.2M41.7 69.6l-6.6 -7.2M37.5 68.3l1.9 -4.6M105.4 35.8l4.4 2.5M108.7 33.2l-2 7.6M109.1 35l-2.9 4M60 31.6l7.7 -0.6M62.7 29l2.4 4.6M65.7 29.6l-3.8 3.4M96.1 60.6l-6 5.7M96.3 64.5l-6.4 -2.1M94.1 66.3l-2.1 -5.7M54.4 39l3 4M58.8 37.4l-5.8 7.3M60 40.5l-8.1 1.1M52.3 11.6l5.8 5.2M56.9 12.3l-3.4 3.6M58.5 14.2l-6.5 -0.1M70 58.5l-3.5 5.1M71.9 63.6l-7.3 -5.2M70.3 63.2l-4.2 -4.4M66.2 87.9l5.6 3.6M70.5 85.1l-3.2 9.2M74.2 89l-10.4 1.5M84.5 87.5l2.6 9.8M87 90.1l-2.4 4.7M88.2 90.7l-4.8 3.4M75.8 73.8l-4.9 2.4M76.9 76l-7.1 -2.1M74.1 77.9l-1.6 -5.8M116.1 38.5l-1.5 8M119.6 43.6l-8.6 -2.1M117.9 46.1l-5 -7.1M105.9 25.4l-6.2 2.8M105.9 28.7l-6.3 -3.9M102.9 29.3l-0.3 -5M83.3 9.3l5.9 4M86.6 7l-0.9 8.5M87.9 9.1l-3.4 4.4M66 37.9l-4.4 5.7M68.3 41.2l-9 -1M66.2 41.5l-4.7 -1.6M38.7 19.6l7.1 5.4M44.1 20.5l-3.7 3.8M44.7 21.5l-4.9 1.7M47 52l9.7 1.8M48.8 49l6 7.8M56 50.3l-8.3 5.2M54.7 88.6l9.1 5.9M60.1 88.2l-1.7 6.8M61.7 90.4l-4.8 2.4M64.9 48.8l0.1 5.6M68.9 50.7l-7.9 1.8M70.1 53.3l-10.3 -3.5M33.7 27.8l5.5 5.2M38.9 28.8l-4.9 3.2M39.1 29.4l-5.2 1.9M33.2 67l1.6 7.2M35.8 67l-3.7 7.2M38.2 68l-8.4 5.3M103.5 59.3l9.1 5.4M108.8 57.4l-1.6 9.2M111.2 60.2l-6.3 3.6M60.3 25.9l-6.1 4.2M58.4 32l-2.1 -7.9M56 30.6l2.6 -5.1M32.5 45l9.4 1.3M34.3 42.8l5.8 5.6M39.8 43.5l-5.1 4.2M34.9 58.4l9.6 2.8M39.7 56.7l0.1 6.3M42.6 60l-5.8 -0.3M70.9 90.6l7.2 3.4M74.4 88.5l0.4 7.5M75.3 89.9l-1.5 4.6M81.9 33.6l4.9 7.6M87.6 35.7l-6.6 3.6M88.3 37.2l-8 0.6M66.1 15.9l4.6 2.6M66.9 13.8l3.1 6.9M70.4 12.8l-4 9M75.1 39l-7.9 5.3M75.6 41.7l-9 -0.1M72 44.4l-1.7 -5.5M60.5 30.6l-1.8 8M62 34.4l-4.9 0.3M64.3 37l-9.6 -4.9M37.3 49.3l-10 3.4M36.5 53.8l-8.3 -5.5M32.3 54.2l-0 -6.5M55.4 14.4l-1.3 6.8M56.3 15.9l-3.2 3.7M57.3 18.6l-5.1 -1.6M84.9 29l8 2.2M87.5 26.9l2.7 6.3M90.8 27.6l-3.9 5M63.6 49.7l-8.2 5.9M62.9 55.6l-6.6 -5.9M61.1 57.4l-3.1 -9.4M90.8 73.8l2.9 7.8M93.7 75.6l-2.9 4.2M97.7 77.8l-11 -0.2M83.2 58.5l7.7 -1.4M85.7 55.2l2.8 5.3M90.4 56.1l-6.7 3.6M69.3 86.2l7.4 -2M71.5 82.5l3.1 5.5M74.3 83.1l-2.6 4.2M75.4 36.2l1.7 10M78.6 40.7l-4.9 1.1M79.1 45.8l-5.8 -9.1M94.9 20.8l0.5 7M99.4 21.6l-8.6 5.3M100.3 24.8l-10.4 -1M61.8 72.6l-3.5 7M63.7 76.1l-7.4 -0M62.6 80.1l-5.2 -7.9M63.5 59.7l-5.7 6.5M65.6 61.6l-10.1 2.8M61.9 65.5l-2.6 -5.2M86.7 22.1l-10 2.8M84.6 25.3l-5.8 -3.7M80.1 28.2l3.1 -9.5M101.6 41.8l-1.7 5M103 46l-4.5 -3.3M101.4 48.9l-1.3 -9.2M62.9 74.4l6.4 -0M64.4 70.4l3.3 8.1M68.6 70.9l-5.1 7M44.6 45.2l-4.6 10M45.1 49.6l-5.5 1.2M45.7 53.3l-6.8 -6.3M75.1 32.3l3.7 3.3M79.3 29.1l-4.7 9.7M79.5 31.5l-5 4.9M46 31.1l2.8 9.5M51.4 33.6l-8 4.4M52.2 36.7l-9.7 -1.6M81.7 57.7l-5.4 7.7M82.7 62.6l-7.6 -2.1M80.1 64.6l-2.2 -6M53.9 63.4l0.8 9.5M59 65.6l-9.4 5M58.5 69.7l-8.5 -3.3M78.2 41.2l9.3 5.3M83.9 38.8l-2.2 10.1M86.5 40.5l-7.3 6.7M96.1 57.3l5 9.2M100.6 57.8l-3.9 8.3M100.6 59.8l-3.9 4.3" fill="none" stroke="#14f028" stroke-width="1.25" /><path d="M68 62Q64.4 70.6 63.1 82M63.1 82Q65.3 90.8 66.6 96.3M66.6 96.3Q69.7 100.4 75.3 102.9M66.6 96.3Q66.6 102.4 64.8 106M63.1 82Q59.7 86.1 54.6 92.7M54.6 92.7Q55.3 98.3 54 101.8M54.6 92.7Q50.5 95 46.9 95.8M68 62Q59.5 63.7 51.7 64.4M51.7 64.4Q47.6 66.6 44.7 70.4M44.7 70.4Q44.1 72.9 42.8 75.2M44.7 70.4Q42.5 70.7 38.9 70.4M51.7 64.4Q46.6 61.2 41.3 60.4M41.3 60.4Q37.5 60.5 35.1 60.2M68 62Q58.6 54.6 52.9 46.8M52.9 46.8Q47.1 45.2 39.7 41.6M39.7 41.6Q36 41.4 30.3 43.2M52.9 46.8Q51.2 39.4 51.3 33.7M51.3 33.7Q48.8 31.2 46.6 26.7M51.3 33.7Q52.5 29.8 53.4 26.4M68 62Q67.7 51.1 71.3 42.6M71.3 42.6Q69.1 39 65.9 32.9M65.9 32.9Q63.5 31.8 59.8 30.5M65.9 32.9Q66.4 29.3 65.2 25.1M71.3 42.6Q74.9 39 80.7 34.5M80.7 34.5Q82.4 30.5 82.7 27.6M68 62Q78.1 59.2 88.9 57.5M88.9 57.5Q94.6 54.9 100.8 48.9M100.8 48.9Q105.3 49.4 111.1 48.6M88.9 57.5Q95.7 59.6 102.5 59.3M102.5 59.3Q107.6 58.3 111 56.6M102.5 59.3Q106.4 61 109.8 64.1M68 62Q74.1 69.3 84.5 74.5M84.5 74.5Q92.7 76 99.1 78.9M99.1 78.9Q105.3 78.7 109.2 77.3M99.1 78.9Q103.5 84.2 105.5 88.1M84.5 74.5Q84.7 81.2 87.6 86.2M87.6 86.2Q91.6 89.1 94 91.9M87.6 86.2Q87.9 90.9 86.7 94.5" fill="none" stroke="#8c6e50" stroke-width="1.7" stroke-linecap="round"/><path d="M78 27.7l5 9.4M83 31.3l-5.1 2.1M82.8 33.3l-4.7 -1.9M67.1 94.8l4.1 8.8M73.5 99.2l-8.7 0.1M72.1 100.4l-6 -2.4M34.5 58.4l-6.5 1.7M34.5 62.5l-6.6 -6.6M28.6 63.5l5.2 -8.5M69.4 63.3l-8.6 4.2M69.6 68.3l-9.1 -5.6M63.7 67.7l2.8 -4.5M43.5 27.5l-10.4 2.6M41.3 33.4l-6 -9.1M36.7 33.6l3 -9.5M117.2 47.6l5.4 3.6M117.3 44.8l5.1 9.3M123.2 46.1l-6.6 6.6M86.5 70.3l-0.9 5.8M87.9 69.4l-3.8 7.6M89 73.5l-5.9 -0.6M41.1 76.9l3.8 6.7M45.6 76.5l-5.2 7.6M45.7 79.8l-5.4 1M110.6 83.5l-9.3 4.9M111.1 85.5l-10.2 1M107.7 89.7l-3.4 -7.3M55.4 40.8l-5.3 8M58.2 45.7l-10.8 -1.9M54.7 47.7l-3.9 -5.7M84 42.2l-3.1 9.9M86.4 48.4l-8 -2.5M84.6 50.7l-4.4 -7.1M109.6 68.2l-8.2 -2.2M107.6 68.8l-4.2 -3.5M103.7 68.7l3.7 -3.3M115.5 60l5.4 4.7M118.6 59.2l-0.9 6.2M120.1 59.5l-3.9 5.7M64.1 16.1l-5.1 2.3M66.4 19.6l-9.5 -4.6M60.9 21.7l1.4 -8.7M80 57.7l-5.8 4.1M80.8 62.1l-7.4 -4.7M75.9 62.6l2.5 -5.6M100.6 28.6l4.9 2.2M104.7 27.3l-3.3 4.6M105.8 28.8l-5.7 1.8M67.7 25.6l-2.7 10.5M68 28.2l-3.2 5.3M69.9 34l-7.1 -6.3M63.8 85.1l5.2 2.3M67.9 81.8l-2.9 9M68.6 84.8l-4.3 3M96.4 11.8l1.6 5.1M97.1 11.8l0.3 5.1M101.7 14.1l-9 0.5M47.7 61.4l-4.8 5.7M48 64.8l-5.2 -1M48 66.3l-5.4 -4.1M110.2 43.2l-2.4 5M112 45.5l-6.1 0.5M111 49.8l-4 -8.1M68.7 42.2l-0.2 8.4M72.8 43.6l-8.3 5.6M70.6 50.4l-3.9 -8M90.3 90.1l-2.9 6.9M92 90.5l-6.4 6.1M91.9 95.3l-6.2 -3.5M51.3 79.8l1.3 6.6M54.9 80l-5.8 6.3M56.3 85.6l-8.7 -4.9M43.9 41.1l4.5 3.9M48.8 40.7l-5.1 4.6M50.4 42.2l-8.4 1.6M88.4 12.8l-2.9 9.9M91.2 18.6l-8.4 -1.8M89 19.6l-4.1 -3.8M91.8 76.9l6.9 7M96.4 77.5l-2.5 5.7M99.3 77.7l-8.2 5.4M104.1 38.9l-6.6 -1M102.9 39.9l-4.2 -2.8M99 42.6l3.6 -8.4M77.3 75.5l-2.1 9.5M81.1 79.9l-9.8 0.8M79 84.7l-5.7 -8.8M37.5 51.3l7.7 2.5M42.3 49.8l-1.8 5.4M44.6 52.5l-6.5 0.2M75.6 13.1l-9.7 1.8M72.9 17.1l-4.4 -6.3M69.2 19l3.1 -9.9M92 22.8l1.2 7.9M95.3 25l-5.4 3.4M97 29.7l-8.8 -5.9M56.8 51.8l9.6 5.1M61.3 51.9l0.6 4.9M64.3 52.5l-5.3 3.6M75.8 40.8l-5.1 3.1M77.7 42.5l-9.1 -0.1M74 47.7l-1.6 -10.7M59.2 32.1l-3 7M60.2 36.2l-4.9 -1.1M60.5 37.9l-5.5 -4.6M93.1 43l-1.7 8.5M94.2 45.8l-3.9 2.9M94.9 48.5l-5.3 -2.6M37.2 68.3l3.5 5.1M41 67.3l-4.1 7M43.1 71.7l-8.1 -1.8M60.8 90.6l-8.7 -0.7M60.4 93.4l-7.8 -6.2M55.1 93.6l2.8 -6.6M110.9 75.1l-9.6 -3.1M110.3 75.9l-8.3 -4.8M104.3 76.3l3.6 -5.5M50 55.3l1.1 5.5M54.1 55.6l-7.1 4.9M54.9 60.9l-8.7 -5.7M76.9 13.2l4.8 3.6M77.6 12.6l3.4 4.8M81.3 11l-4 8M108.7 53.8l5.6 5.2M113.8 53.9l-4.7 5.1M115.4 56.2l-7.8 0.4M115.2 77.7l-5.5 1.4M116 79.7l-7 -2.7M110.2 83.2l4.6 -9.7M63.5 39.2l-6.3 8.2M63.2 41.1l-5.8 4.4M61.3 46.2l-1.9 -5.8M84.2 61.4l-2.4 7.1M87.8 66.4l-9.7 -3.1M85.8 68.7l-5.8 -7.5" fill="none" stroke="#32ff3c" stroke-width="1.3" /></symbol><symbol id="t54" viewBox="0 0 126 126"><circle cx="65" cy="63" r="39" fill="#5a3c0a"/><ellipse cx="66.5" cy="42.6" rx="14.5" ry="8.8" transform="rotate(-73.9 66.5 42.6)" fill="#000"/><ellipse cx="85.2" cy="57.2" rx="14.5" ry="9.4" transform="rotate(-4 85.2 57.2)" fill="#000"/><ellipse cx="76.4" cy="80" rx="14" ry="8.8" transform="rotate(68.1 76.4 80)" fill="#000"/><ellipse cx="52.6" cy="80" rx="15" ry="9.4" transform="rotate(138.1 52.6 80)" fill="#000"/><ellipse cx="45.3" cy="57.4" rx="14" ry="8.6" transform="rotate(208 45.3 57.4)" fill="#000"/><path d="M63.9 61.3Q62.2 53.4 52.9 42.3M66.2 61.4Q73.3 57.4 80.8 45M66.9 63.7Q73 69.1 87.1 72.3M64.9 65Q61.8 72.5 63.1 86.9M63.1 63.7Q55 63.4 42 69.9" fill="none" stroke="#000" stroke-width="0.8" /><path d="M91.3 47.1L97 43.5M95.8 54.9L102 54M39.5 86.3L34.9 87.7M97.8 75L101.3 77.3M33.6 54.5L26.9 54.9M86.9 90.3L91 92.1M33.1 76.1L30.9 82M61.9 94L58.2 97.6M61.8 32.5L65.4 27.1M55.1 32.3L57.4 24.7M67.3 96.1L67.7 100.1M67.9 94.6L69.1 100.4M90.1 43.4L95 43.2M95.3 47.1L98.9 43.6M68.1 32.7L68.5 28.5M69.1 95.1L65.6 100.1M33.3 63.7L27.9 65.9M71.8 29.7L76.7 25.8M39.7 43.5L33 42.5M43.4 87.2L38.5 91.6M91.7 81.8L94.6 87.4M82.2 34.9L84.7 29.4M58.9 96.5L57.4 101.3M95.8 48.5L98.6 43.1M94.5 55.5L98.5 51.2M79.7 93.1L85.1 96.4M75.1 95.2L79.2 99.3M75.4 33.5L77.1 29.4M62.4 33.1L59 26.3M87.1 39.4L89.9 34.2M91.7 77L97.5 80M81.6 88.6L81.8 95.7M96.3 74.5L102.2 74.6M42.4 86.8L42.2 93.3M85.5 90.7L85.2 96.3M81.1 92.7L84.7 96.6M64 28L66.8 24M90.1 84.7L95.9 86.8M35 53.1L28.8 48.5M52.7 34.5L49.2 31.6M34.8 65.6L27.1 63.8M54.5 32.2L52 26.2M41.4 87.7L37.8 90.9M36.5 75.3L32 78.3M75.1 32.5L73.8 26.4M78.4 34.2L77.1 27.3M57.6 32.1L55.1 27M61.4 94.6L62.6 100.3M74.4 29.6L72.4 24.7M81.6 90L81.8 98.2M89.1 81.8L94.5 88.6M31.7 65.6L26.5 69.3M91.1 47.9L93.9 41.6M94.2 73.3L97.4 78.3M34.1 51.2L28.9 48.3M73.1 93.1L74.8 97.3M76.6 30.1L75.4 25.4M81.3 34.1L86.7 30.6M38.7 84.7L34.5 87.3M57.6 93.2L52.6 99.7" fill="none" stroke="#000" stroke-width="1.2" /><path d="M91.3 76.4L96.5 83.7M37.4 42.8L36.7 36.9M34.4 59.6L27.5 54.3M77.4 89.3L82.5 93M80.4 90.2L81.3 97.9M55.7 91.4L51.2 95.6M54.3 89.7L48.2 96.3M36.8 50.6L32.4 48.9M47.3 91.1L42.1 93.5M96.4 49.4L98.7 44.4M53.2 34.5L48.5 32.1M35.7 47.3L29.8 47.4M95.1 73L101.7 70.8M85.3 39.5L87.2 31.7M96.8 58.4L101.1 59.4M93.2 73.1L98.4 78.8M39.6 50.6L31.8 48.1M80.5 35.7L80.6 28M60.7 33.8L60 26.1M66.5 29.3L69.9 24.8M74.7 89.6L75.5 94.8M76.9 92.8L75 99.1M48.4 34.9L45.9 31.5M79.3 32.7L84.3 30M51.8 94.1L48.8 97.9M59.8 29.9L57.9 25.2M98.4 59.3L103.5 61.6M88.7 39.7L93.6 37.2M58.6 93.9L58 98M80.8 35.2L87 31.4M38.7 43.6L36.1 37.6M46.7 87.5L46.9 93.1M73.4 92.7L76.4 97.9M89.5 80.6L94.7 87.3M47.4 86.4L42.1 89.1M75.2 34.1L77.4 29.9M79.7 91.5L83.7 94.8M90.7 76.7L96.8 79.8M74.4 93.5L77.9 99.3M43.3 83.6L38.6 88.4M50.3 89.4L44.9 93.2M79.6 33.1L78.4 26.9M93.6 76.9L97.9 83M96.5 51L100.1 47.2M45.2 85.4L42.2 90.6" fill="none" stroke="#9a9a9a" stroke-width="0.9" /><path d="M51.8 29.1l2.2 -2.2l2.2 2.2l-2.2 2.2zM52.3 98.3l1.5 -1.5l1.5 1.5l-1.5 1.5zM69.6 91l1.7 -1.7l1.7 1.7l-1.7 1.7zM70.8 37.1l1.4 -1.4l1.4 1.4l-1.4 1.4zM95.8 62.9l1.9 -1.9l1.9 1.9l-1.9 1.9zM35.2 64.8l1.5 -1.5l1.5 1.5l-1.5 1.5zM49.1 86.8l2.2 -2.2l2.2 2.2l-2.2 2.2zM96 59.3l1.9 -1.9l1.9 1.9l-1.9 1.9zM38.9 42.8l1.7 -1.7l1.7 1.7l-1.7 1.7zM38.8 47.5l2.2 -2.2l2.2 2.2l-2.2 2.2zM87.9 43.2l1.5 -1.5l1.5 1.5l-1.5 1.5zM83.8 49.1l2.2 -2.2l2.2 2.2l-2.2 2.2zM47.9 92.7l1.9 -1.9l1.9 1.9l-1.9 1.9zM88.9 64.1l2.2 -2.2l2.2 2.2l-2.2 2.2zM83.1 90.4l1.6 -1.6l1.6 1.6l-1.6 1.6zM34.4 63.5l1.9 -1.9l1.9 1.9l-1.9 1.9zM37.9 53.6l1.9 -1.9l1.9 1.9l-1.9 1.9zM28.8 47.8l2.1 -2.1l2.1 2.1l-2.1 2.1zM55.1 39.1l2.2 -2.2l2.2 2.2l-2.2 2.2zM82.2 80.4l1.6 -1.6l1.6 1.6l-1.6 1.6zM48 87.1l1.9 -1.9l1.9 1.9l-1.9 1.9zM74.7 96.2l1.7 -1.7l1.7 1.7l-1.7 1.7zM95.1 43.5l1.8 -1.8l1.8 1.8l-1.8 1.8zM82.6 31.7l2.1 -2.1l2.1 2.1l-2.1 2.1zM85.3 39.1l1.5 -1.5l1.5 1.5l-1.5 1.5zM35.9 39.5l2 -2l2 2l-2 2zM92.4 84.7l1.6 -1.6l1.6 1.6l-1.6 1.6zM37.7 79.9l1.9 -1.9l1.9 1.9l-1.9 1.9zM41.2 40.4l1.7 -1.7l1.7 1.7l-1.7 1.7zM32.2 60.7l1.6 -1.6l1.6 1.6l-1.6 1.6zM41.4 42.4l1.7 -1.7l1.7 1.7l-1.7 1.7zM86.4 82.3l1.4 -1.4l1.4 1.4l-1.4 1.4zM36.2 51.9l1.9 -1.9l1.9 1.9l-1.9 1.9zM85.5 34.4l2.1 -2.1l2.1 2.1l-2.1 2.1zM87.9 49.9l1.9 -1.9l1.9 1.9l-1.9 1.9zM65.2 36.3l2.2 -2.2l2.2 2.2l-2.2 2.2zM90.6 63.8l1.6 -1.6l1.6 1.6l-1.6 1.6zM92.5 60.5l2.2 -2.2l2.2 2.2l-2.2 2.2zM30.2 54.2l1.9 -1.9l1.9 1.9l-1.9 1.9zM37.5 89.9l2 -2l2 2l-2 2zM49.8 91.1l1.4 -1.4l1.4 1.4l-1.4 1.4zM42 43.4l1.4 -1.4l1.4 1.4l-1.4 1.4zM60.5 90.7l2 -2l2 2l-2 2zM99.4 71.6l2.1 -2.1l2.1 2.1l-2.1 2.1zM64.1 97.2l1.7 -1.7l1.7 1.7l-1.7 1.7zM93.4 53.1l1.4 -1.4l1.4 1.4l-1.4 1.4zM49.5 96.7l2.2 -2.2l2.2 2.2l-2.2 2.2zM87.3 76.2l2 -2l2 2l-2 2zM57.7 38.5l1.4 -1.4l1.4 1.4l-1.4 1.4zM89.7 41.8l2.1 -2.1l2.1 2.1l-2.1 2.1zM74.9 93.3l1.8 -1.8l1.8 1.8l-1.8 1.8zM97.2 74.7l2 -2l2 2l-2 2zM77.5 38.4l2.1 -2.1l2.1 2.1l-2.1 2.1zM74.9 96l1.7 -1.7l1.7 1.7l-1.7 1.7zM57 95.8l1.7 -1.7l1.7 1.7l-1.7 1.7zM60.5 88.2l2.2 -2.2l2.2 2.2l-2.2 2.2zM86.2 44l1.5 -1.5l1.5 1.5l-1.5 1.5zM43.8 82.2l1.6 -1.6l1.6 1.6l-1.6 1.6zM29.6 69.3l1.4 -1.4l1.4 1.4l-1.4 1.4zM35.6 44.5l2 -2l2 2l-2 2zM83.5 77.5l2.2 -2.2l2.2 2.2l-2.2 2.2zM98.8 53.6l1.8 -1.8l1.8 1.8l-1.8 1.8zM91 67.6l2 -2l2 2l-2 2zM46.7 88.9l1.5 -1.5l1.5 1.5l-1.5 1.5zM77.3 93.4l2.1 -2.1l2.1 2.1l-2.1 2.1zM75.3 29.1l1.5 -1.5l1.5 1.5l-1.5 1.5zM82.1 83.2l1.4 -1.4l1.4 1.4l-1.4 1.4zM38.9 41.6l1.5 -1.5l1.5 1.5l-1.5 1.5zM96.7 59.3l2.1 -2.1l2.1 2.1l-2.1 2.1zM45.1 85.6l1.8 -1.8l1.8 1.8l-1.8 1.8zM48.2 34.2l1.8 -1.8l1.8 1.8l-1.8 1.8zM32.9 74.4l1.6 -1.6l1.6 1.6l-1.6 1.6zM48.6 97.2l1.7 -1.7l1.7 1.7l-1.7 1.7zM71.1 31.6l1.9 -1.9l1.9 1.9l-1.9 1.9zM51.1 95.4l1.7 -1.7l1.7 1.7l-1.7 1.7zM69.4 98.1l1.7 -1.7l1.7 1.7l-1.7 1.7zM75.3 38.3l1.7 -1.7l1.7 1.7l-1.7 1.7zM30.6 72.6l2.2 -2.2l2.2 2.2l-2.2 2.2zM56.8 99.1l2.1 -2.1l2.1 2.1l-2.1 2.1zM48.8 95.7l1.7 -1.7l1.7 1.7l-1.7 1.7zM43.3 39.4l2 -2l2 2l-2 2zM35.9 79.3l2 -2l2 2l-2 2zM37.3 60.2l2 -2l2 2l-2 2zM66.8 37l1.9 -1.9l1.9 1.9l-1.9 1.9zM43.9 43.7l1.8 -1.8l1.8 1.8l-1.8 1.8zM66 33.1l1.5 -1.5l1.5 1.5l-1.5 1.5zM88.5 52.6l1.4 -1.4l1.4 1.4l-1.4 1.4zM84.3 77.8l1.5 -1.5l1.5 1.5l-1.5 1.5zM90.6 48.5l1.9 -1.9l1.9 1.9l-1.9 1.9zM92.4 59.4l1.9 -1.9l1.9 1.9l-1.9 1.9zM35.8 66.9l1.9 -1.9l1.9 1.9l-1.9 1.9zM30.5 57.9l2 -2l2 2l-2 2zM82.4 37l1.4 -1.4l1.4 1.4l-1.4 1.4zM38.7 47l1.5 -1.5l1.5 1.5l-1.5 1.5zM90.2 77.9l2.1 -2.1l2.1 2.1l-2.1 2.1zM95.5 68l2 -2l2 2l-2 2zM94.1 82.4l1.5 -1.5l1.5 1.5l-1.5 1.5zM67.5 36l1.7 -1.7l1.7 1.7l-1.7 1.7zM69.6 34.3l2.2 -2.2l2.2 2.2l-2.2 2.2zM74.1 34.8l1.5 -1.5l1.5 1.5l-1.5 1.5zM91.4 71.3l1.4 -1.4l1.4 1.4l-1.4 1.4zM92.7 66.5l1.8 -1.8l1.8 1.8l-1.8 1.8zM97.7 69.8l1.4 -1.4l1.4 1.4l-1.4 1.4zM31.5 72.4l1.9 -1.9l1.9 1.9l-1.9 1.9zM58.3 35.2l1.4 -1.4l1.4 1.4l-1.4 1.4zM91.5 44.8l1.6 -1.6l1.6 1.6l-1.6 1.6zM49.2 38.8l1.4 -1.4l1.4 1.4l-1.4 1.4zM76.1 94l2 -2l2 2l-2 2zM84 48.2l2.2 -2.2l2.2 2.2l-2.2 2.2zM97.9 66.6l1.8 -1.8l1.8 1.8l-1.8 1.8zM56.3 29l2 -2l2 2l-2 2zM84.9 80.5l1.4 -1.4l1.4 1.4l-1.4 1.4zM97.3 61.3l1.9 -1.9l1.9 1.9l-1.9 1.9zM95.6 76l1.6 -1.6l1.6 1.6l-1.6 1.6zM38.9 76.7l2.1 -2.1l2.1 2.1l-2.1 2.1zM87.9 39.9l2.2 -2.2l2.2 2.2l-2.2 2.2zM87.9 36.5l2 -2l2 2l-2 2zM72.3 36.8l1.4 -1.4l1.4 1.4l-1.4 1.4zM86.1 43l1.7 -1.7l1.7 1.7l-1.7 1.7zM67.2 100.2l1.9 -1.9l1.9 1.9l-1.9 1.9zM95.4 77.8l1.5 -1.5l1.5 1.5l-1.5 1.5zM73.6 36.9l2.2 -2.2l2.2 2.2l-2.2 2.2zM43.8 94.4l2.1 -2.1l2.1 2.1l-2.1 2.1zM66.6 31l1.8 -1.8l1.8 1.8l-1.8 1.8zM61 89.2l1.8 -1.8l1.8 1.8l-1.8 1.8zM71.4 36.4l1.5 -1.5l1.5 1.5l-1.5 1.5zM65 96.4l2.2 -2.2l2.2 2.2l-2.2 2.2zM59.2 38.3l1.8 -1.8l1.8 1.8l-1.8 1.8zM54.4 98.1l2 -2l2 2l-2 2zM87.9 75.3l1.5 -1.5l1.5 1.5l-1.5 1.5zM92.2 62.1l1.9 -1.9l1.9 1.9l-1.9 1.9zM88.2 74.3l1.7 -1.7l1.7 1.7l-1.7 1.7zM53.8 31.6l1.8 -1.8l1.8 1.8l-1.8 1.8zM60 98.2l1.9 -1.9l1.9 1.9l-1.9 1.9zM98 62.1l1.5 -1.5l1.5 1.5l-1.5 1.5zM65.3 92.3l2.1 -2.1l2.1 2.1l-2.1 2.1zM41.9 86.2l1.5 -1.5l1.5 1.5l-1.5 1.5zM42 39l1.6 -1.6l1.6 1.6l-1.6 1.6zM97.1 77.9l1.8 -1.8l1.8 1.8l-1.8 1.8zM45.3 87.3l2.1 -2.1l2.1 2.1l-2.1 2.1zM37 85.1l1.7 -1.7l1.7 1.7l-1.7 1.7zM50 38.9l1.9 -1.9l1.9 1.9l-1.9 1.9zM92.5 71.6l2.1 -2.1l2.1 2.1l-2.1 2.1zM75.3 97.5l1.7 -1.7l1.7 1.7l-1.7 1.7zM37.4 88.5l1.9 -1.9l1.9 1.9l-1.9 1.9zM30 79.4l1.5 -1.5l1.5 1.5l-1.5 1.5zM77.4 96.7l2.2 -2.2l2.2 2.2l-2.2 2.2zM63.3 89.4l1.9 -1.9l1.9 1.9l-1.9 1.9zM76.7 41.8l2 -2l2 2l-2 2zM53.3 94.7l1.7 -1.7l1.7 1.7l-1.7 1.7z" fill="none" stroke="#1ec81e" stroke-width="0.9" /><path d="M73.2 88l2 -2l2 2l-2 2zM28.7 51.1l1.4 -1.4l1.4 1.4l-1.4 1.4zM34.2 52.6l1.8 -1.8l1.8 1.8l-1.8 1.8zM26.6 68l1.8 -1.8l1.8 1.8l-1.8 1.8zM85 46.9l1.4 -1.4l1.4 1.4l-1.4 1.4zM80.1 82l2 -2l2 2l-2 2zM43.6 43.4l2 -2l2 2l-2 2zM58.2 38.5l1.6 -1.6l1.6 1.6l-1.6 1.6zM45.8 95.7l1.9 -1.9l1.9 1.9l-1.9 1.9zM48.1 87.5l2 -2l2 2l-2 2zM82.3 84.1l2.1 -2.1l2.1 2.1l-2.1 2.1zM32.8 55.4l2.2 -2.2l2.2 2.2l-2.2 2.2zM84 41.5l2.1 -2.1l2.1 2.1l-2.1 2.1zM44.8 81.2l1.5 -1.5l1.5 1.5l-1.5 1.5zM27.5 60.3l2 -2l2 2l-2 2zM49.3 41.4l2.1 -2.1l2.1 2.1l-2.1 2.1zM61.1 92.3l2.1 -2.1l2.1 2.1l-2.1 2.1zM42.5 37.2l1.4 -1.4l1.4 1.4l-1.4 1.4zM43.3 33.2l1.4 -1.4l1.4 1.4l-1.4 1.4zM33.6 73.3l1.6 -1.6l1.6 1.6l-1.6 1.6zM67.7 35.1l2.1 -2.1l2.1 2.1l-2.1 2.1zM90.8 40.2l1.4 -1.4l1.4 1.4l-1.4 1.4zM35.1 42.4l1.6 -1.6l1.6 1.6l-1.6 1.6zM27.4 72l1.8 -1.8l1.8 1.8l-1.8 1.8zM33.6 51.6l1.7 -1.7l1.7 1.7l-1.7 1.7zM44.8 41.6l1.4 -1.4l1.4 1.4l-1.4 1.4zM78.6 36.5l1.8 -1.8l1.8 1.8l-1.8 1.8zM71.3 87.8l1.4 -1.4l1.4 1.4l-1.4 1.4zM65.3 95.7l1.4 -1.4l1.4 1.4l-1.4 1.4zM71.9 37l2.1 -2.1l2.1 2.1l-2.1 2.1z" fill="none" stroke="#0a500a" stroke-width="0.9" /></symbol><symbol id="t40" viewBox="0 0 126 126"><path d="M8.5 75.5L12 76.5L12.5 79.6L9.9 79.8L7.6 77.6zM82.8 57.8L85.5 55.9L87.7 58.4L86.2 60.7L83.5 60.4zM40.9 107.1L44.2 108.1L43.6 111.3L40.9 111.6L39.3 109.4zM26.1 35.1L29.3 34.3L30.6 37.2L28.4 38.7L25.9 37.6zM97.2 96.1L99.5 92.8L102.7 92.9L101.9 95.5L98.9 97.3zM66.5 39.6L70.1 38.4L72.5 40.2L70.4 41.7L67.2 41.5zM28.3 67.6L31.6 67.3L33.1 69.6L30.9 70.5L28.3 69.4zM22.5 92.2L26.1 91.3L28.3 93.3L26.1 94.6L23 94.1zM72.7 83.3L76.1 83.4L76.5 86.6L74 87.5L71.9 85.8zM64.3 73.4L65.4 70.7L68.2 71.6L68.2 74.1L66 75.1zM75.7 112L79.1 111.9L80.4 114.4L78.1 115.2L75.6 114zM29.1 52.1L30.7 49.8L33.1 50.6L32.6 52.7L30.4 53.5zM44.3 71.5L46.7 69.8L48.7 71.7L47.4 73.6L45 73.5zM96.9 70.4L100.3 70L101.2 73.1L98.8 74.4L96.4 73zM41.7 37.5L44.5 36.7L45.3 39.6L43.4 41.1L41.3 40zM70.9 99L73.7 97.3L76 98.8L74.5 100.6L71.7 100.7zM54.2 32.4L57.4 29.9L60.5 30.9L58.9 33.2L55.4 34zM45.1 85.2L48.9 83.3L51.5 85.8L49.4 88.1L45.9 87.8zM13.3 50.9L15.9 49.4L18 50.8L16.6 52.5L14 52.5zM54.7 97L58.7 98.1L59.4 101.4L56.5 101.6L53.9 99.2zM85.6 69L88.3 66.4L91.2 68.4L89.9 71L86.8 71.4zM91.1 108.4L92.3 105.6L95.1 106.3L95 108.7L92.9 109.9zM60.8 110.3L63.5 107.9L66.2 109.9L64.8 112.4L61.9 112.7zM8.7 63.1L12.6 62.5L14.1 65.9L11.4 67.4L8.4 65.9zM78.7 79.3L81.5 77.6L83.6 79.9L82 81.9L79.3 81.6zM94.3 81L96.7 79.1L99 80.3L97.8 82.2L95.3 82.6zM28.3 84.7L31.5 82.5L34.5 83.8L32.8 85.9L29.4 86.5zM61.7 80.6L65.2 80.3L67 82.5L64.8 83.5L61.8 82.5zM64.3 104.8L66 101.8L68.8 101.9L68.4 104.2L65.9 105.9zM29.5 100.2L32.5 100.6L32 103.7L29.4 104.4L28 102.6zM54.1 42.3L58.2 42.4L59.7 45.4L56.9 46.2L53.8 44.5zM14.4 93.7L16.6 91.6L19 92.8L18 94.9L15.5 95.5zM41.9 55.6L45.4 54.2L47.8 56L45.8 57.6L42.6 57.5zM82.4 86.5L85.7 87.6L85.7 90.6L83.1 90.8L81.2 88.5zM50.8 35.7L53.9 36.3L53.2 39.4L50.6 39.9L49.3 37.9zM43.5 25.3L45.6 22.6L48.4 24L47.7 26.6L45 27.3zM29.7 22.5L33.4 22.7L34.4 25.8L31.8 26.6L29.2 24.9zM39.7 91.8L43.1 90.4L45.5 92.3L43.5 94L40.4 93.8zM16.6 57.3L18.6 54.7L21.3 55.6L20.7 58L18.1 58.9zM52.8 63.5L55.5 62.1L57.5 64L55.9 65.7L53.3 65.5zM105.9 91.6L109.7 93L110.4 96.2L107.6 96.2L105.1 93.7zM21.8 82.9L23.8 80.5L26.4 81.4L25.6 83.6L23.1 84.4zM52.2 71L55.7 72.7L56.2 75.8L53.6 75.4L51.3 72.8zM57.6 54L61.6 53.1L63.5 56.1L61 57.7L57.8 56.6zM81.8 103.4L85.3 104L85.7 107.2L83 107.7L80.8 105.6zM71.6 109L72.9 105.7L76 105.7L75.8 108.3L73.4 110.1zM68.8 79.7L73 79.9L74.3 83.3L71.3 84.3L68.3 82.3zM20 45.1L21.5 42.1L24.5 43.3L24.3 46.1L21.9 47.1zM19.1 24.8L23 25.4L24.5 28L22 28.3L19 26.6zM66.3 53.4L68.4 49.9L71.8 50.2L71.2 53.1L68.2 54.9zM76.6 64.7L80.2 65.9L80.8 68.9L78.2 69L75.8 66.7zM92.1 87.4L95.8 86.7L97.1 90L94.5 91.6L91.8 90.2zM35.3 72.7L38.1 73.1L38.6 75.6L36.4 76.2L34.6 74.6zM35.4 46.4L38.1 45.1L39.3 48.1L37.5 50L35.3 49.1zM39.2 100.3L42.7 98.8L45.2 100.7L43.2 102.5L39.9 102.4zM48 44.6L51.6 43.6L53.9 45.6L51.7 47L48.5 46.5zM10.1 72.9L12.2 69.8L15.2 69.8L14.6 72.4L11.8 74.1zM43.7 86.3L47.5 87.3L47.6 90.9L44.6 91.1L42.5 88.6zM51.1 22.6L55.1 23.7L55.7 27.1L52.8 27.4L50.2 24.9zM49.9 113L53.7 113.3L54.8 116.1L52.3 116.9L49.6 115.2zM83.9 94.9L86.2 91.6L89.6 92.4L88.9 95.4L85.8 96.8zM50.3 53.7L52 50.8L55 51.1L54.5 53.6L52 55.1zM34.2 38.8L38.3 38.1L40.3 41L37.7 42.4L34.4 41.3zM102.1 87.9L104.2 84.4L107.5 84.6L106.9 87.3L104 89.2zM78.9 97L82.7 97.9L83.2 101.3L80.4 101.5L78 99.2zM36.5 60.7L40.4 60.7L41.2 64.3L38.4 65.3L35.8 63.3zM53.2 87.5L56.8 85.4L59.7 87.2L57.8 89.4L54.2 89.6zM46.8 29.7L50 28.9L51.7 31.2L49.7 32.6L47 31.8zM38.4 26.7L41.9 27.3L42.4 30.3L39.8 30.8L37.6 28.9zM43.2 76.8L44.4 73.7L47.4 74.2L47.4 76.8L45.1 78.2zM13.4 33.5L17.2 33.8L18.7 36.6L16.1 37.2L13.2 35.6zM22.7 53.3L24 50.8L26.6 51.4L26.3 53.6L24.2 54.7zM37.2 17.9L39.4 14.6L42.8 15.5L42.1 18.3L39.1 19.7zM47.5 63.8L50.3 62.1L52.3 64.3L50.7 66.3L48.1 66zM70.9 58.1L73.7 56.8L74.9 59.8L73.1 61.8L70.9 60.9zM59.7 65.4L62.5 62.6L65.6 63L64.4 65.4L61.2 66.7zM20.5 39L23.9 37.9L26.1 40.1L24 41.6L21 41.1zM65 91.3L68.3 90.8L69.3 93.8L67 95.1L64.6 93.8zM22.6 62.3L26.4 62L28.2 64.6L25.8 65.6L22.6 64.3zM31 58.4L33.5 56.2L36 57.9L34.8 60.1L32 60.4zM68.3 116.4L69.6 113.1L72.8 113.2L72.8 116L70.4 117.7zM78.3 104.7L81.3 105.6L81.4 108.4L79.1 108.6L77.3 106.6zM71.2 72.5L73.9 70.1L76.5 72.2L75.2 74.7L72.3 74.9zM47.9 95.6L51.5 95.5L52.4 98.8L49.7 99.9L47.3 98.2zM61.1 97.2L62.9 94.8L65.5 95.3L64.8 97.4L62.4 98.5zM12.7 85.6L16.4 83.9L19.1 85.5L17.1 87.4L13.6 87.4zM75.7 56.1L77.3 52.6L80.7 52.8L80.5 55.7L77.8 57.5zM47.9 78.5L50.2 76.2L52.8 77.3L51.8 79.4L49.1 80.2zM30.8 14.5L33.9 14.3L34.9 16.8L32.8 17.8L30.5 16.6zM11.9 57.4L14.1 55.2L16.6 56.8L15.5 59.1L13 59.4zM31.5 95.3L35.5 95.5L37.4 98L34.8 98.6L31.6 97.2zM84.3 101.6L85 98.7L87.9 99.2L88.2 101.6L86.3 102.9zM103.2 77.3L106.9 77.4L107.4 80.8L104.7 81.8L102.3 79.9zM39.3 70.5L42.6 68.5L45.4 69.9L43.6 71.9L40.3 72.3zM75.1 92L79.2 91.2L81.3 94L78.7 95.5L75.4 94.5zM7.9 43.3L11.5 43.3L12.8 46.2L10.3 47.1L7.6 45.5zM14.2 41L17.9 40.2L20.2 42L18 43.3L14.7 42.7zM91.5 63L94.5 64L94.7 66.7L92.4 66.8L90.6 64.8zM29.8 23.8L32.4 21.4L35.2 22.3L34 24.5L31 25.3zM90.2 85.6L93.8 84.5L95.8 87.2L93.6 88.9L90.5 88.1zM70.7 66.4L73.8 65.3L74.9 68.5L72.8 70.3L70.5 69.2zM59.6 116.7L62.9 117.8L63.7 120.4L61.3 120.4L59 118.4zM22 99.3L24.7 100.2L24.9 102.6L22.8 102.7L21.2 100.8zM91.2 97.2L93.7 94.5L96.6 94.8L95.5 97.1L92.6 98.4zM37.1 31.8L40.3 30.8L41.9 33.5L39.8 35.1L37.2 34.2zM34.3 108.2L35.4 105.5L38.3 106.5L38.3 109L36.1 110zM95 99.6L98 98.4L99.8 100.7L98.1 102.3L95.4 101.8zM23.7 71.5L26.6 71.9L26.9 74.6L24.7 75.1L22.9 73.4zM44 104.5L47.4 102.5L50 104.9L48.2 107.2L44.9 107zM51.9 107.2L53.9 104L57.2 105.1L56.7 108.1L53.8 109.3zM68.6 61.9L71.5 62.2L71.2 65.1L68.9 65.8L67.4 64zM65.1 76.7L67.7 75L69.9 76.5L68.6 78.4L65.9 78.6zM30.2 35.8L34 36.2L35.7 38.6L33.2 39.1L30.1 37.5zM43.4 81.1L47.5 81L48.9 84.3L46.1 85.4L43 83.6zM26.6 79.9L28.4 77L31 77L30.5 79.2L28 80.8zM52.1 81.7L55.5 80.7L57.8 82.4L55.8 83.8L52.6 83.4zM23.4 102.2L26.4 101.8L27.4 104.4L25.3 105.5L23.1 104.3zM45 51.1L47.9 49.9L49.8 52L48.1 53.6L45.5 53.2zM15.2 65.9L18.7 63.9L21.4 65.7L19.6 67.7L16.2 67.9zM35.2 68.9L37.1 66.3L39.9 67.4L39.2 69.7L36.6 70.6zM61.5 48.1L64 46.5L66 48.3L64.7 50.2L62.2 50.1zM37.7 58.8L40.6 56.6L43.3 58.5L41.8 60.9L38.8 61.1zM27.8 90.7L30.8 89.4L32.2 92.3L30.4 94.2L27.9 93.4zM25.5 100.9L27.8 99.4L29.6 101L28.4 102.6L26.1 102.6zM42.3 61.9L44.2 58.7L47.5 59.7L47 62.6L44.1 63.8zM21.6 89.7L23.1 87.1L25.7 88L25.4 90.4L23.1 91.3zM38.2 90.1L39.7 87.5L42.3 89.1L42.1 91.8L39.8 92.4zM32.6 82.5L35.9 80.7L38.5 82.8L36.6 84.8L33.4 84.7zM46.6 90.6L49.5 89.6L50.4 92.6L48.5 94.4L46.4 93.3zM74.2 77.5L76 74L79.4 74L78.9 76.8L76.1 78.7z" fill="none" stroke="#145a14" stroke-width="0.9" /><path d="M104.7 35.7L108.5 37.7L109.2 40.9L106.4 40.4L103.9 37.6zM63 106.6L66.8 106.2L68.5 109L66 110.2L62.9 108.9zM19.6 29.7L23.3 28L26 30.3L23.9 32.4L20.4 32.1zM19.9 68.9L23 69.2L23.6 71.9L21.4 72.4L19.3 70.8zM69.2 62.2L72 62.8L71.8 65.5L69.6 65.8L68.1 64zM37.5 92.1L41 90.6L43.5 92.6L41.5 94.4L38.2 94.2zM75.4 24.7L79.8 24.4L81.3 27.9L78.3 29.3L75 27.5zM47.1 17.7L50.3 16.3L52.6 18.2L50.8 19.9L47.8 19.7zM44.5 42.4L47.5 40.1L50.3 41.3L48.8 43.5L45.6 44.1zM100.1 92.8L103.7 91.2L106 93.7L104 95.7L100.7 95.2zM68.7 89.9L71.2 87.1L74.2 87.9L73.1 90.3L70.1 91.4zM110.9 64.2L113.5 63.1L115 65.3L113.4 66.9L111.1 66.3zM51.4 60.1L54.4 59.5L55.9 61.7L54 62.9L51.5 62zM30 52.6L32.3 49.5L35.6 50.2L34.8 53L31.7 54.3zM11.9 49.4L15.7 49.9L16.2 53.4L13.3 54.1L10.9 51.9zM64.1 33.4L67.8 34.2L68.6 37.2L66 37.5L63.4 35.4zM84.8 51.5L88.1 50.4L90.1 52.8L88 54.5L85.1 53.8zM78 111.4L81.4 111.7L81.9 114.8L79.3 115.6L77.2 113.7zM75.6 11.3L78.5 12.1L78.3 15L75.8 15.2L74.3 13.2zM86.4 78.5L90.4 79.1L90.9 82.7L87.9 83.4L85.4 81zM42.1 106.8L46 108.6L46.2 112.2L43.1 111.9L40.9 108.9zM95.9 52.3L99.9 52.8L101.3 55.8L98.6 56.3L95.6 54.4zM34.9 72.5L36.9 68.9L40.1 68.4L39.4 71L36.6 73.3zM87.9 64L91.2 63.4L92.7 66.1L90.5 67.5L87.8 66.4zM99.6 71.5L102.9 69.7L105.5 71L103.7 72.8L100.5 73.1zM58.8 75.3L62.4 76.9L62.4 80.2L59.6 80L57.6 77.4zM65.6 51.2L69.8 51.1L71.8 53.7L69.1 54.6L65.7 53.3zM42.8 79.6L46.1 79.5L47.5 81.9L45.3 82.8L42.7 81.5zM52.7 98.7L56.5 98.2L58.4 100.8L56 102L52.8 100.9zM80.6 91.7L84.1 90.1L86.4 92.6L84.4 94.7L81.2 94.2zM67.2 13.8L69.3 11.7L71.6 12.8L70.7 14.7L68.3 15.4zM22.1 94L25.7 94.5L26.4 97.6L23.8 98.1L21.4 96.2zM78 38.3L80.8 36.4L83.2 38.3L81.7 40.5L78.8 40.6zM23 39.4L25.7 37L28.4 39.2L27.1 41.8L24.1 41.9zM108 49L109.7 45.9L112.7 46.3L112.4 48.9L109.8 50.4zM89.2 32.7L92.4 31.8L93.4 35L91.2 36.8L88.9 35.6zM94.3 42.5L97.8 43.2L97.9 46.5L95.2 47L93.1 44.9zM44.4 33.4L46.5 30.1L49.8 30.3L49.1 33L46.1 34.7zM16.1 82.8L18.3 80.4L20.6 82.7L19.7 85.3L17.1 85.4zM66.6 77.7L70.6 78.6L71.8 81.8L69 82L66 79.8zM58.5 20.9L62.9 20.9L64.3 24.5L61.2 25.7L58 23.8zM59 40.5L62.3 41.9L62.6 44.9L60.1 44.6L58.1 42.3zM36.8 60L39.4 58L41.6 60.1L40.3 62.4L37.7 62.3zM33.5 29L37.9 29.3L39.1 32.9L36 33.8L32.9 31.6zM33.1 84.2L36.2 83.5L37.6 86L35.6 87.4L33.1 86.4zM26.7 63L30 61.1L32.6 63.1L30.8 65.3L27.6 65.2zM19.3 55.3L20.2 52.3L23.3 53.3L23.6 56L21.4 57.2zM97.4 25.2L101.5 25.6L103.1 28.4L100.4 29L97.2 27.3zM42.4 64.4L46 65.7L46.9 68.6L44.3 68.5L41.8 66.2zM57.7 87.7L60.9 87.3L62.2 89.7L60.1 90.7L57.7 89.7zM108 81.7L110.8 79.8L113.1 82.1L111.6 84.4L108.7 84.2zM47.6 114.4L49 111.2L51.9 110.9L51.7 113.4L49.3 115.3zM50.9 68.2L54.2 66.8L56.1 69.7L54 71.8L51.2 71.1zM26.9 81.5L28.1 78.8L30.6 79L30.5 81.2L28.4 82.6zM92.4 89.2L95.6 89.4L96 92.3L93.7 93L91.7 91.3zM73.8 43.3L76.9 42.8L77.2 46.1L74.9 47.5L73 46.1zM67.4 23.6L70.5 24.7L70.5 27.7L68 27.8L66.2 25.6zM18.1 89.3L20.8 86.9L23.6 89L22.2 91.6L19.2 91.9zM90.9 23.2L94.1 20.3L97.4 22.1L95.9 25L92.4 25.6zM75.6 55.2L78.2 53.4L80.5 54.9L79.2 56.7L76.5 57z" fill="#6e4614" stroke="#6e4614" stroke-width="1.6" /><path d="M69 64l-25.2 -43.2M69 64l14.2 -42.7M69 64l45.1 -16.5M69 64l41.2 8.3M69 64l32.3 40.7M69 64l1.1 54M69 64l-9.1 39M69 64l-44.4 18.3M69 64l-29.1 17.5M69 64l-28.3 -10M69 64l27.9 -2.8M69 64l10.9 28" fill="none" stroke="#c86414" stroke-width="1" /><path d="M92.2 33L93.9 30L97 30.8L96.6 33.5L94 34.7zM97.8 89L99.3 86L102.3 87L102.1 89.6L99.6 90.8zM58.1 56.7L62 55.9L63.7 59.1L61.2 60.8L58.1 59.5zM36.9 20.6L39.9 19.9L41.4 22.1L39.5 23.4L37.1 22.7zM117.9 65L121.9 66L122.4 69.5L119.4 69.8L116.9 67.4zM68.2 28L69.9 25.7L72.2 27.3L71.6 29.6L69.4 30zM89.2 64.2L92.6 62.1L95.5 63.8L93.6 66L90.2 66.2zM77 53.1L80.2 54.3L80.2 57.3L77.7 57.3L75.9 55zM107.4 51L110.3 51L111.2 53.3L109.2 54L107.1 52.7zM91.2 22.1L93 19.6L95.7 20.9L95.1 23.2L92.7 24zM61.8 18.1L63 15.5L65.7 16.2L65.6 18.5L63.4 19.6zM77.3 87.5L80.3 86.4L81.9 88.8L80.1 90.4L77.5 89.8zM93.8 103.7L97.1 104.5L97.9 107.1L95.6 107.3L93.3 105.4zM67.1 4.3L70.6 4.2L71.7 7.3L69.2 8.3L66.6 6.7zM77.7 26.7L80.5 24.7L82.9 26.3L81.5 28.4L78.7 28.6zM63.5 74.4L66.3 73.5L67.7 75.8L65.9 77.2L63.6 76.5zM41.5 47.1L43.7 44.6L46.4 46L45.5 48.5L42.8 49.1zM41.4 40.9L44.2 38.2L47.2 38.8L45.9 41.2L42.8 42.3zM52.9 40.7L56.1 38.6L58.8 40.3L57.2 42.6L53.9 42.8zM109.1 78.3L111.9 75.5L115 76.8L113.8 79.5L110.5 80.3zM80.8 75.5L84 75.1L85.1 77.8L82.9 79L80.5 77.8zM63.6 48L67.2 47.7L68.7 50.2L66.5 51.2L63.6 50zM101.9 29.9L105 28.9L106.6 31.3L104.7 32.9L102.1 32.1zM59.8 66.5L61.6 63.5L64.7 64.1L64.2 66.7L61.5 68.1zM92.1 48.3L93.8 45.6L96.6 47.3L96.1 49.9L93.7 50.5zM59.8 43.4L62.5 41.1L65 43.4L63.6 45.9L60.8 45.9zM50.8 61.7L52.8 59.1L55.5 60.9L54.7 63.5L52.2 63.9zM54.5 9.1L56.3 6L59.4 6.4L58.9 9L56.2 10.5zM81.6 30.8L85.5 29.8L87.7 32.5L85.3 34.1L81.9 33.2zM97.1 74.9L100.7 76.3L101.1 79.5L98.3 79.4L96.1 76.9zM28.7 37.5L31.7 37L33.1 39.2L31.1 40.3L28.7 39.4zM48.3 47.3L51.7 47.6L52.6 50.3L50.3 51L47.9 49.4zM67.7 82.4L71.1 80.4L73.7 82.6L71.9 84.9L68.6 84.8zM76.3 47.5L79.6 48.8L79.8 51.8L77.2 51.7L75.3 49.3zM82.8 9.5L86.2 9.2L86.7 12.5L84.2 13.8L82.1 12.2zM48.2 18.9L52 17.5L54.5 20L52.2 21.9L48.7 21.4zM36.8 32.4L39.6 30.2L42.3 31.2L40.9 33.3L37.9 34zM99.1 82.4L103.3 82.7L104.7 85.8L101.8 86.6L98.7 84.7zM82.8 38.3L86.5 36.7L89.1 39L87 41L83.5 40.6zM105.3 41.4L108.5 40.1L110.3 42.6L108.4 44.4L105.7 43.8zM98.6 51.7L100.7 49L103.6 50.4L102.8 53L100.1 53.7zM70 40.8L71.3 37.4L74.7 38L74.8 40.9L72.3 42.5zM32 28.7L35.4 28.2L37 30.6L34.8 31.7L32.1 30.7zM51.7 30.6L55 29.4L57.1 31.4L55.2 33L52.2 32.5zM110.8 63L113 61L115.4 62.4L114.3 64.5L111.8 64.9zM75.4 68.9L78.6 66.3L81.8 67.7L80.2 70.1L76.7 70.9zM102.4 93.5L104.2 91L106.7 91.3L106.1 93.4L103.8 94.7zM100.2 36.7L103.5 36.4L104.6 39.2L102.3 40.3L99.8 39zM26.6 24.3L29.4 24.4L30.2 26.7L28.3 27.3L26.2 26zM43.7 27.9L46.1 24.5L49.7 25.5L48.8 28.5L45.6 29.9zM115.3 55.4L118.9 55.6L120.3 58.3L117.8 59L115 57.5zM68.2 32.3L71.3 31.2L73.3 33.4L71.4 34.9L68.5 34.4zM116.6 58.8L119.9 59.9L120.1 62.9L117.6 62.9L115.7 60.7zM41.9 14.1L44.1 12.1L46.4 14L45.3 16.2L42.9 16.3zM90.4 95.1L92.2 92.6L94.7 94.5L94.1 97.1L91.7 97.4zM74.7 17.9L76.4 14.9L79.3 15L78.9 17.4L76.3 19.1zM89.8 102.9L91.3 100.6L93.8 101.3L93.3 103.4L91.1 104.3zM111.3 87.4L113.9 86.2L115.6 88L114.1 89.5L111.8 89.2zM68.3 14L71.3 12.5L73.3 14.8L71.6 16.7L68.8 16.3zM88.3 27.7L90.9 25.6L93.4 26.7L92.2 28.6L89.4 29.2zM97.8 61.2L101.2 59.9L103.5 61.7L101.6 63.3L98.4 63.1zM70.9 5.9L74.8 6.3L76.5 8.9L73.9 9.5L70.7 7.8zM32.2 21L35 20L36.7 22L35 23.4L32.6 22.9zM99.9 20.7L101.9 18.2L104.5 19.8L103.7 22.3L101.2 22.8zM75 34.1L77.5 33.1L79.1 34.8L77.6 36.3L75.4 35.9zM90.3 37.2L93.2 35.5L95.5 37.3L93.9 39.3L91.1 39.3zM60.8 34.4L63.7 33.5L64.9 36.2L62.9 37.8L60.7 36.8zM43.3 58.3L44.9 55L47.9 55.1L47.7 57.7L45.2 59.5zM85.8 46.2L89.1 47.4L89 50.6L86.3 50.7L84.5 48.3zM86.9 32L90.8 31L92.6 34.1L90.1 35.9L87 34.8zM82.4 88.1L83.7 84.7L87 85.2L87 88L84.5 89.6zM89.8 85.6L92 83.6L94.1 85.9L92.9 88.2L90.6 88.1zM103.1 49.8L106.3 47.5L109 49.8L107.4 52.3L104.1 52.4zM61.2 30L62.2 26.8L65.4 27.3L65.5 30L63.2 31.5zM94 66.9L97.7 66.4L99.1 69.5L96.6 70.7L93.8 69.4zM70.3 51L71.3 48L74.3 48.6L74.5 51.2L72.4 52.5zM103.2 69.6L107.1 68.1L109.6 70.6L107.3 72.6L103.8 72zM84 69.2L87.5 67.4L90 70.1L88 72.4L84.7 72zM56.2 50L59.5 48.9L61.4 51.4L59.4 53.1L56.5 52.3zM65.9 67.6L69.3 67L70.4 70.1L68.1 71.5L65.5 70.1zM47.3 35.9L51.4 35.4L53.2 38.5L50.5 39.8L47.2 38.5zM85.6 88L88.9 86.4L91 89L89.1 91.1L86.1 90.6zM73 24.2L74.9 22.2L77.2 23.2L76.4 25.1L74.1 25.7zM78.9 63.8L79.9 61.1L82.4 61.2L82.5 63.3L80.6 64.8zM90.9 25.3L93.9 23.5L96.4 24.8L94.8 26.5L91.8 26.8zM117.2 45.2L120.8 46.1L121 49.5L118.1 50L115.9 47.6zM33.1 34.3L36.6 33.8L37.5 37L35 38.5L32.6 37zM71.1 78.7L73.8 76.5L76.4 77.9L75.1 80.1L72.2 80.5zM36.1 47.4L39.3 48.3L39.4 51.3L36.9 51.5L35 49.4zM83.7 93.3L87.1 93.8L88.1 96.6L85.7 97L83.2 95.2zM38 30.3L40.5 27.1L43.9 27.8L42.9 30.6L39.7 32zM36.5 44.1L38.9 41.3L41.7 41.7L40.8 44L38 45.3zM61.9 59.4L65.8 59.5L67 62.8L64.3 63.7L61.4 62zM74.6 40.5L78.2 41.3L79.3 44L76.8 44.3L74.2 42.4zM88 58.4L90.7 56.5L93.1 57.8L91.7 59.7L89 60zM86 16.2L88.9 13.6L91.8 15.6L90.4 18.3L87.3 18.6zM82.6 56.5L84.7 53.6L87.5 53.6L86.8 56L84.1 57.6zM78.7 42.1L79.5 39.2L82.4 39.9L82.8 42.4L80.7 43.7zM95 78.9L97.9 79.3L97.2 82.3L94.6 82.9L93.4 81zM55 19.2L58.1 16.7L61.1 18.7L59.6 21.3L56.3 21.7zM70.8 71.9L74.3 72.6L75.4 75.3L73 75.5L70.4 73.7zM109 70.4L111.7 69L113.8 70.6L112.3 72.2L109.7 72.2zM85.6 62L89.5 62.9L89.9 66.4L86.9 66.8L84.6 64.5zM38.6 34.3L42.7 34.6L43.6 38.1L40.6 39L37.9 36.9zM78.2 58.6L80.4 56.5L82.8 57.7L81.9 59.8L79.4 60.3zM103.6 26.7L105.4 23.7L108.5 24.6L108.1 27.3L105.4 28.5zM45 32.7L48.2 31.8L49.4 34.8L47.3 36.4L44.8 35.3zM87.5 70.1L90.8 68.6L92.7 71.4L90.7 73.4L87.9 72.7zM106.4 39.1L107.6 36.5L110.3 37.4L110.3 39.9L108.1 40.8zM106.9 60.5L109.4 58L112.2 58.9L111.1 61.1L108.2 62zM99.8 100.7L103.2 101.2L103.5 104.3L101 104.9L98.9 103zM66.3 80.3L67.7 77.6L70.4 78.1L70.1 80.3L67.9 81.6zM41.9 10.7L44.1 7.4L47.3 7.7L46.6 10.4L43.6 12.1zM99.2 26.4L100.2 23.6L103 24.4L103.2 26.9L101.1 28.1zM111.6 41.4L114.8 41.2L115.2 44.4L112.8 45.5L110.8 43.9z" fill="none" stroke="#1ec81e" stroke-width="1" /></symbol><symbol id="t43" viewBox="0 0 126 126"><path d="M102.7 71.8l11.6 4.4M104.7 70.2l7.6 7.6M109.5 69.6l-1.9 8.8M19 59.4l6.6 3.6M25.5 56.1l-6.3 10.2M26 61.2l-7.4 0.1M77.1 33.5l5.5 8.3M82 34.6l-4.2 6.1M83.2 38.4l-6.7 -1.6M78.5 98.4l4.4 8M82.3 97.3l-3.2 10.1M86.8 104.2l-12.1 -3.6M76.3 7.9l-5 4.6M78.8 11.9l-10.1 -3.5M75.3 16l-3.1 -11.6M42.5 100l-5.7 5.3M45.2 101.8l-11.1 1.7M42 107.5l-4.8 -9.6M46.1 12.3l6.4 4.8M52.9 10.5l-7.3 8.4M55 14.9l-11.4 -0.5M14.9 32.5l8.2 6.8M21.4 31.9l-4.8 8M25.9 34.6l-13.7 2.5M72.6 63l-0.3 6.7M75.6 63.8l-6.4 5.2M77.7 68.1l-10.6 -3.4M47.7 39.5l-2.8 12.8M49.3 44.2l-6 3.3M50 47.7l-7.4 -3.7M52.6 106.9l12.2 3.6M58.5 103.4l0.5 10.6M61.6 106.9l-5.8 3.6M104.6 34.7l0 6.7M109.4 34.3l-9.6 7.5M108.3 38.9l-7.3 -1.9M99.9 93.6l8.5 3.8M103.3 91l1.7 9M109.1 93.4l-9.9 4.2M54.9 83.7l13.9 -0.6M60.7 77.2l2.2 12.5M65.2 78.6l-6.8 9.6M58 60.4l-11.9 1.1M54 63.3l-4 -4.8M50.1 65.4l3.8 -8.8M74.2 83.8l1.3 9.5M76 85.2l-2.4 6.7M78.5 88.2l-7.4 0.6M31.9 81.8l11.4 4.5M35 78.9l5.3 10.1M40.2 82.3l-5.2 3.3M10.3 65.6l1.1 8.7M14.8 66.6l-7.9 6.6M16.1 70.3l-10.5 -0.8M61.2 69.1l-5.5 7.6M62.2 72.1l-7.5 1.7M62 76.9l-7.1 -7.9M65 48l1.4 8.5M71.5 48.8l-11.7 6.9M68.4 54.3l-5.3 -4.2M92.2 20.1l-3.8 13.2M93.9 26.7l-7.2 -0.1M91.9 31l-3.2 -8.5M90.1 84l3.5 5.6M93.4 83.7l-3 6M96.4 85.1l-9.1 3.2M34.3 54.8l7.2 8.3M40.4 56.6l-5.1 4.8M42.6 61.4l-9.4 -4.9M98.8 56.2l-4 10.2M100.5 61.4l-7.4 -0.3M100.7 65.5l-7.8 -8.5M56.7 88.5l-5.2 11.7M60.4 93l-12.6 2.6M55.8 97.2l-3.4 -5.6M47.2 68.3l-8.2 8.2M46.2 75.3l-6.2 -5.9M44.2 77.7l-2.3 -10.6M33.1 33.3l3.9 6.2M37.6 30l-5.1 12.7M38.3 36.4l-6.6 0.1M64.9 35.5l2.7 10M70.7 35.9l-9 9.1M69.5 41.3l-6.5 -1.6M118.9 57.4l-7.3 2.3M117.6 63l-4.8 -8.7M113.1 62.9l4.3 -8.5M79.5 69.2l12.2 0.5M84.9 64.8l1.2 9.2M88.8 65.2l-6.5 8.4M30 70l5.7 7.4M33.8 70.1l-2.1 7.2M35.9 73.4l-6.3 0.6M24 72.4l-8.8 5.5M23.6 76.1l-7.9 -1.9M18.9 79.4l1.6 -8.6M67.4 92.1l-3.1 13.6M69.5 96.9l-7.3 4.1M68.9 101.9l-6 -5.8M120.7 68.3l-5.9 10.1M121.3 74.3l-7.2 -1.8M119.9 79l-4.3 -11.3M103.6 76.9l-8.5 -0.7M103.3 81.3l-7.8 -9.5M97.2 80.3l4.4 -7.5M65.5 16.9l-5.3 5.3M65.1 22l-4.4 -4.9M62.4 23.8l0.9 -8.5M30.4 98.7l-8.3 4.3M31.8 103.4l-11.2 -5.1M28.1 104.1l-3.8 -6.6M82.8 14.9l-8 6.4M82.6 19.2l-7.6 -2.3M82.5 23l-7.4 -9.9M16.3 88.7l6.8 2.2M19.3 83.9l0.8 11.9M25.8 87.2l-12.2 5.3M71.5 109.9l-0.1 8M73.7 110.6l-4.4 6.6M75.5 115l-8.1 -2.3M50.4 24.9l-6.9 2M48.4 29.3l-3 -6.8M45.4 31.6l3.1 -11.3M85.8 54.2l-2.3 6.7M88.1 56.6l-6.9 1.9M87 59.6l-4.7 -4.1M113.8 51.7l-10.8 0.3M111.5 55.9l-6.3 -8M108 58.6l0.8 -13.4M86.1 39.7l6.1 7M92.4 38.6l-6.4 9.2M93 43.2l-7.7 -0.1M80 6l6.3 11M85 8.6l-3.6 5.7M88.8 10.3l-11.1 2.4M42.7 18.5l-6.6 4.8M44.1 22.5l-9.3 -3.3M39.4 25.3l0.1 -8.9M73.2 25.5l-3.4 9.8M76.2 26.8l-9.3 7.2M74.1 32.4l-5.2 -4M94.8 53.4l-6.5 2.6M94.2 57.4l-5.3 -5.3M90.6 58.5l2 -7.5M61.7 30.6l-7.6 5.5M60.5 35.5l-5.4 -4.2M55.8 37l4.1 -7.2M35 87.2l-7.5 10.6M37.7 90.9l-12.8 3.1M35.4 96.3l-8.3 -7.7M46.1 111.1l1.4 7.1M48.7 109.3l-4 10.6M49.9 116l-6.2 -2.8M88.5 106.3l6.5 6M93.4 103.8l-3.4 11.1M95.3 109.6l-7.1 -0.6M11.5 55l10.9 0.3M14.2 49.8l5.6 10.6M20.3 53.4l-6.7 3.5M38.5 107l-7.8 4.5M38 111.4l-6.8 -4.3M33.7 113.7l1.7 -8.8M99.7 69.2l8.8 1.4M102.2 63.5l3.7 12.7M107 67.5l-5.8 4.7M9.7 43.6l9.7 8.7M15.1 43.1l-1.3 9.6M20.7 47.4l-12.5 0.9M85.4 78.1l3.7 8M89.4 79.7l-4.3 4.9M93.9 82.6l-13.3 -0.8M34.4 47.5l-9.1 3.4M33.8 52.7l-8 -7.1M28.6 52.4l2.4 -6.5M88.9 91.6l7.3 3.5M90.1 86.8l4.9 13.1M95.3 89.2l-5.5 8.4M111.5 76.1l-9.6 8.4M112 84.5l-10.7 -8.4M108.3 84.2l-3.3 -7.9M78.2 94.3l-7.5 7.3M79.7 97.2l-10.5 1.5M78.7 102.8l-8.5 -9.7M103.2 23.1l-2.9 12.8M108.1 26.9l-12.8 5.3M105 32.8l-6.6 -6.7M100.6 41.7l-2.7 7.4M106.1 45.3l-13.7 0.2M103.4 50.1l-8.4 -9.4M44.7 30.7l2.8 8.1M49 31.9l-5.7 5.7M49.6 34.9l-6.9 -0.3M57.5 74.9l-4.7 8.5M59.2 80.5l-8.1 -2.7M57.9 82.9l-5.5 -7.6M41.4 39.2l-4.8 12.7M45 44.5l-11.9 2.1M41.1 50.5l-4.2 -9.9M109.5 85l8.3 3.2M113 82.3l1.2 8.6M116.7 81.9l-6.1 9.3M49.6 79.7l-5.2 6.2M51.9 85.2l-9.8 -4.9M50.6 87.1l-7.2 -8.6M77.2 110.9l7.8 7.2M81.1 110.2l0 8.6M84.2 112.1l-6.2 4.7M51.2 99.7l-5.5 6.7M53.1 104.2l-9.3 -2.1M50.5 108.2l-4.2 -10.3M60.3 7.1l6.7 6.2M66.3 4.9l-5.2 10.5M68.8 10.5l-10.3 -0.7M113.3 63.6l5.9 6.4M117.3 61.1l-2 11.2M120.4 62.7l-8.2 8M26.4 97.4l13.2 4.7M32.6 96l0.7 7.3M34.1 96.8l-2.3 5.8M43.1 90.3l0.8 12.1M48.4 92.7l-9.8 7.3M49 99.4l-10.9 -6.1M114.6 38.5l-3.2 7.5M115.4 39.9l-4.7 4.6M116.9 44.9l-7.8 -5.4M54.1 81.2l-4.6 8.2M58.4 87l-13.3 -3.5M52.5 90.9l-1.4 -11.3M30.6 25.8l2.1 10.6M36.1 26.1l-8.8 9.9M38.6 30.5l-13.8 1.2M43.5 45.3l-0.4 11.4M47.2 48.8l-8 4.4M46.5 53.8l-6.6 -5.5M52.3 66.1l-6 10.9M53.8 71.4l-9 0.2M50.6 77.6l-2.5 -12.1M86.2 46.2l-7.9 3.6M85.1 51.1l-5.6 -6.2M81 53.2l2.6 -10.3M52.7 14.9l4.1 9.8M57.8 17.8l-6 4.1M60.4 19.7l-11.3 0.1M61 21.6l-0.7 10.1M63.5 25.3l-5.6 2.7M64.9 30.3l-8.4 -7.3M55.4 63.9l8 1.8M56.9 61.3l5 6.9M62.8 61.5l-6.8 6.4M51.1 35.6l2.8 7.8M55.3 36l-5.7 7M56.4 40.9l-7.8 -2.7M31.8 35.5l-3.9 10M36 40.3l-12.3 0.3M31.9 44.5l-4 -8M82.7 94.9l9.5 10.1M91.3 96.6l-7.6 6.7M93.2 99.6l-11.6 0.6M56 28.9l-6.2 4.4M58.5 33.8l-11.1 -5.4M55.7 34.8l-5.4 -7.3M56.5 95.3l3.9 8.5M62.9 94.3l-8.9 10.5M63.1 101.9l-9.3 -4.7M70.3 44.4l5.6 4.6M74.9 42.7l-3.5 8.1M79.5 44l-12.8 5.5M76.9 86.8l12 2M84.1 84l-2.3 7.6M87.1 85.3l-8.4 4.9M27 63.6l-1.1 12.6M28.9 67.7l-4.9 4.6M29.5 71.7l-6.1 -3.5M101.7 83.7l0.4 6.7M106.5 84.7l-9.1 4.5M107.3 89.3l-10.6 -4.5M66.7 113l-7 5.6M67.7 116.6l-9 -1.5M63.1 119l0.1 -6.4M112.5 32.1l-2.8 6M116.7 32.3l-11.2 5.5M117.5 37.5l-12.8 -4.8M60.8 13.3l-8.1 1M61.2 18.8l-8.7 -10M53.2 17.2l7.2 -7M96.4 70.9l-8.5 4.2M95.8 77.2l-7.2 -8.3M92.2 79.3l-0.1 -12.6M73.4 60l10 6.5M80.1 58.2l-3.5 10.2M83.7 62.3l-10.6 1.9M18.6 59.9l-7.4 2.3M18.5 63.2l-7.3 -4.2M12.7 67.6l4.4 -13M71.1 78.5l13.3 3.3M77.8 74.6l0 11.2M80.9 78.7l-6.2 2.9M71.5 71.1l-6.7 5.4M71.3 73.2l-6.2 1.2M68.6 80.4l-0.9 -13.1M98.2 56.2l9.3 6.4M99.6 53.4l6.4 11.9M105.8 53.8l-6 11.1M35.2 67.5l6.9 4M38.5 63.4l0.2 12.2M44.1 67.9l-10.9 3M94.6 98.7l6.5 7.9M98.7 98.2l-1.8 8.9M101 101.6l-6.4 2.1M75.3 28.7l7.2 -1.7M76.4 23.6l5 8.5M80.2 23.2l-2.7 9.3M22.2 60.6l13.6 0.3M27.3 58l3.4 5.5M32.5 57.9l-6.9 5.8" fill="none" stroke="#6e8c50" stroke-width="1.5" /><path d="M41.1 85.7l1 7.3M43.4 87.7l-3.6 3.4M45.6 90l-8.1 -1.2M67.1 21.1l7.7 2.2M71 19.7l-0.3 4.9M74.7 20.3l-7.6 3.7M22.3 34.6l3.3 2.7M25 33.4l-2.3 5M27.5 36.4l-7.2 -1M109.5 81.2l-7.2 3M108.1 85.8l-4.5 -6.2M105.7 87.2l0.4 -8.9M69.3 97.3l5.9 6.3M72.8 97l-0.9 6.8M76 98l-7.4 4.8M51.8 53.3l2.8 8.5M57.1 56.2l-7.7 2.7M56.7 58.3l-7 -1.5M78.6 70.3l-8 2M76.5 72.4l-3.7 -2.2M74.5 75.5l0.3 -8.3M16.5 59.8l3.3 4.4M18.6 59.3l-0.8 5.3M22.6 60.7l-8.7 2.5M58.9 33.7l-8.5 3.1M57.2 36.3l-5 -2.3M54.6 39.7l0.2 -8.9M96.6 40.6l4.2 3.1M101.1 38.2l-4.8 7.8M102.4 40.2l-7.3 3.9M91.8 55.5l-3.3 7.6M93.4 56.9l-6.6 4.7M93.2 60.9l-6.2 -3.4M109.7 58.2l-8.6 1.5M107.2 60.6l-3.6 -3.3M104.4 63.5l2 -9.1M53.9 82.3l6.7 -1.6M54.7 78l5 7M59.4 78l-4.4 7.1M86.8 87.6l-2.3 4.1M89.5 88.8l-7.6 1.7M87.2 91.5l-3.1 -3.6M37.9 43.2l7.8 -0.4M41.2 39.5l1.1 7M42.7 40.4l-1.9 5.2M90.5 67.3l-4.5 7.1M90.9 71.9l-5.3 -2.1M91.2 74.2l-6 -6.7M14.4 80.4l7.1 2.6M17.9 79.4l0 4.6M22.2 80.1l-8.5 3.2M36.4 65.8l-4.2 0.4M36.9 67.7l-5.3 -3.5M32.9 70.5l2.8 -9.1M62 102.7l-4.2 -0.8M62.4 105.2l-5 -5.7M57.7 105.1l4.5 -5.6M48.8 12.9l8 4.7M52.4 12.6l0.8 5.5M56.1 13.3l-6.7 4.1M103 65.9l-2.2 7M104.4 69.9l-5 -0.9M102.9 73.7l-2.1 -8.5M40.3 26.9l-4.4 3M40.4 30.1l-4.5 -3.5M38.3 33.1l-0.4 -9.5M89.7 20.7l2.8 8.7M93.1 23.2l-4.2 3.7M94.5 27.2l-6.9 -4.4M39.1 100.9l4.2 2.8M41.1 99.7l0.2 5.2M43.4 99.1l-4.5 6.5M22.5 46.8l4.7 7M26.9 46.4l-4 7.9M27 49.9l-4.3 0.9M54.6 47.8l4.6 3.1M57.6 46l-1.3 6.9M60 49l-6.1 0.7" fill="none" stroke="#1e8c1e" stroke-width="1.4" /><path d="M62 64Q72.5 62.8 80.4 65.3M80.4 65.3Q85.3 63.7 90.3 62.4M90.3 62.4Q91.5 59.7 93.6 57.3M90.3 62.4Q94 63.1 96.5 64.9M80.4 65.3Q84.6 67.2 90.7 70.1M90.7 70.1Q94.9 69.6 97.7 69.8M90.7 70.1Q92.8 73.7 95.7 75.7M62 64Q65.4 72.7 71 80.8M71 80.8Q76.7 83.5 80.4 85.7M80.4 85.7Q84 85.4 87.5 85.7M80.4 85.7Q82.7 88.9 83.9 91.2M71 80.8Q70.6 87 72.4 91.3M72.4 91.3Q74.9 93.4 76.4 97.1M72.4 91.3Q70.8 93.9 70.6 97.7M62 64Q57.9 75.5 51.2 83.5M51.2 83.5Q52.3 89.5 52.4 96M52.4 96Q55.9 98.3 58.5 102M52.4 96Q50.7 99 48.5 101.8M62 64Q50.7 62.4 41.5 62.6M41.5 62.6Q36.6 65.1 30.6 67.2M41.5 62.6Q37.1 59.2 29.8 54.2M29.8 54.2Q25.2 53.8 19.8 52.6M29.8 54.2Q29.1 49.3 27.2 44.4M62 64Q58.3 56.4 54.8 45.5M54.8 45.5Q50.2 41.1 45.5 35.8M45.5 35.8Q40.7 35.8 37.4 34M45.5 35.8Q45.3 31.3 43.5 26.9M54.8 45.5Q56.5 37.4 56.2 30.9M56.2 30.9Q53.8 26.5 51.9 23.5M56.2 30.9Q59 25.7 61.4 22.6M62 64Q69 54.7 72.2 46.7M72.2 46.7Q71.9 38.3 70.1 32.1M70.1 32.1Q67.8 27.4 65.3 24.4M70.1 32.1Q73.5 28.9 75.1 24.3M72.2 46.7Q78.6 44.3 84.7 39.4M84.7 39.4Q87.5 34.1 89 30.9M84.7 39.4Q90 39.1 93.6 40.6" fill="none" stroke="#7a5a3c" stroke-width="2.0" stroke-linecap="round"/><path d="M73 90.3l-9.9 6.1M72.4 94.1l-8.8 -1.5M71.5 98.6l-6.9 -10.6M24 55.2l-4.4 6.5M27.2 58.4l-10.8 0.2M21.5 64.9l0.7 -12.8M62.8 39.9l-5.7 8.2M66.7 46.4l-13.4 -4.7M60.9 50.1l-2 -12.2M60 5.8l-6.1 9.9M61.6 9.5l-9.3 2.4M57.8 14.2l-1.5 -7M112.4 40.7l-3.6 6M116.4 45.6l-11.5 -3.8M112.2 48l-3.2 -8.7M23.9 89.4l-0.4 7M27 91.6l-6.7 2.5M25.9 96.5l-4.4 -7.2M39.4 67.7l11 8.7M45.7 67.7l-1.5 8.7M51.2 71.1l-12.6 1.8M35.4 26.7l-0.2 13.2M40.9 29.4l-11 7.8M38.3 35.2l-6 -3.6M106.1 81.8l8.2 7.9M110.8 80.6l-1.4 10.4M113.2 84.5l-6.1 2.6M45.6 89.9l1.5 7.5M50.6 90.7l-8.6 5.9M50.8 96.8l-8.9 -6.3M80.8 53.9l-4.9 5M83.6 58.4l-10.4 -4M78.6 61.4l-0.4 -10M90.6 78l-4.6 13.5M92.9 84.1l-9.3 1.2M91.4 89.7l-6.3 -9.8M75 23.9l9.2 0.1M79 18.3l1.2 11.3M81.8 18l-4.4 11.9M95.5 62.9l-6.3 8.6M98.4 69l-12.1 -3.7M95.1 72.6l-5.4 -10.9M116.9 60.3l-5.7 8.1M119.3 63.3l-10.5 2.1M115.3 67.4l-2.5 -6M47.3 49.6l-12.8 6.4M44.6 53.2l-7.4 -0.9M40.1 58.1l1.5 -10.5M15.5 35.7l3.2 7.6M19.3 36.7l-4.2 5.5M24 41.6l-13.7 -4.1M77.2 103.2l1.4 7.1M79.8 103.5l-3.9 6.5M84.6 107.5l-13.3 -1.5M86.1 32.6l9.2 11.1M93.6 31.8l-5.9 12.8M97.6 38.4l-13.8 -0.4M37.4 101.9l1.7 11.7M42.8 104.5l-9.1 6.6M40.4 111.1l-4.3 -6.7M37.1 15.7l-0.1 6.6M40.9 16l-7.8 6M41 22l-7.9 -6M62.1 64.6l2.9 6.3M66.3 63.9l-5.5 7.8M69.8 70l-12.5 -4.6M100.7 49.5l-8.9 4.3M100.9 53.2l-9.1 -3M96.5 57.5l-0.5 -11.6M23.1 70.2l-10.9 9.6M22 75.1l-8.7 -0.4M20.5 79.8l-5.7 -9.7M96.3 21.1l-5.8 11.1M98.5 29.8l-10.3 -6.3M93.3 31.8l0.2 -10.3M26.7 83.1l-7.6 0.9M24.6 86.3l-3.4 -5.7M22.2 88.1l1.4 -9.1M55.4 22.5l-7.8 4.3M54.7 25.9l-6.4 -2.7M55.1 30.2l-7.2 -11.2M74.4 109l-7.1 12.2M75.3 113.8l-8.8 2.5M72.6 120.5l-3.4 -10.7M51.1 40.4l-3 11.3M55.3 44.2l-11.3 3.5M53.6 49.3l-8 -6.6M104.7 29.8l4.4 10.1M112.6 31.3l-11.4 7M113.4 36.8l-13.1 -3.9M61.7 79.9l-10.5 5.3M59.8 87.6l-6.8 -10.2M56.5 86.3l-0.3 -7.5M43.1 33.4l4.2 7.1M46 33.1l-1.6 7.7M48.5 37.2l-6.7 -0.4" fill="none" stroke="#ffbe14" stroke-width="2.0" /></symbol><symbol id="t60" viewBox="0 0 126 126"><path d="M103 62L101.9 66L104.5 70.8L99.3 73.7L101.9 79.3L95.7 80.8L96 86.1L89.4 85.9L88.3 90.7L85.5 94.1L82.3 97.4L76.2 94.1L73.4 99.6L68.7 97.6L64.5 100.2L60.4 97L56.1 97.1L52.3 95.5L47.2 96.5L45.2 91.5L40.6 90.8L36.3 89L32 86.8L31.1 82.1L27.4 79.1L31.9 73L27.8 70L29.1 65.8L25.6 62L27 57.9L28.3 54.1L28.6 49.9L30.4 46.2L33.6 43.4L33.4 38.2L37.6 36.2L39.7 32.2L43.6 30.1L46.9 26.9L52.1 28L55.7 25L60.3 26.4L64.5 24.4L69 23.8L73.7 23.4L76 30.3L81.7 27.6L82.7 34.1L87.6 34.2L90.9 36.6L95.7 38.1L96 43L98.8 46.2L97.3 51L102.6 53.6L100.2 58.1z" fill="none" stroke="#1e8c1e" stroke-width="1.1" stroke-linejoin="round"/><path d="M64.5 62L68.8 53.7L75.5 49M68.8 53.7L69 46.5M64.5 62L76.6 55.5L88.6 55.3M76.6 55.5L82.8 46.8M64.5 62L76.1 63.5L84.5 69.3M76.1 63.5L84.7 60.6M64.5 62L71.2 70.5L73 79.7M71.2 70.5L78.7 74.1M64.5 62L64.4 74.6L59.4 84.2M64.4 74.6L68.7 83.3M64.5 62L57.7 70.2L49.2 73.9M57.7 70.2L55.8 78.3M64.5 62L51 62.5L40.3 57.6M51 62.5L41.8 67.5M64.5 62L55.4 55.9L50.8 47.6M55.4 55.9L47.1 54.8M64.5 62L62.3 52.3L64.4 44M62.3 52.3L57.4 46.4" fill="none" stroke="#8c6e50" stroke-width="1.8" /><path d="M64.5 62L62.6 33L67.6 39L74 34.5zM64.5 62L79.5 36.4L80.3 44.3L88.3 44.3zM64.5 62L92.4 49.6L88.3 56.7L95 61.4zM64.5 62L94.3 73.1L86.1 75.4L87.7 83.8zM64.5 62L79.5 86.8L72.3 83.8L68.6 90.7zM64.5 62L60.5 90.4L56.8 83.6L49.8 86.6zM64.5 62L44.1 75.6L46.3 69.4L40.4 66.6zM64.5 62L38.7 60.9L44.4 57L41.1 50.9zM64.5 62L44.4 41.5L52 42.7L54 35.3z" fill="none" stroke="#1e8c1e" stroke-width="1.0" /><path d="M47.3 30.6a2.4 2.4 0 1 0 4.8 0a2.4 2.4 0 1 0 -4.8 0zM56 39.5a2.4 2.4 0 1 0 4.8 0a2.4 2.4 0 1 0 -4.8 0zM38 41.7a2.4 2.4 0 1 0 4.8 0a2.4 2.4 0 1 0 -4.8 0zM85.4 40.3a2.4 2.4 0 1 0 4.8 0a2.4 2.4 0 1 0 -4.8 0zM41.8 54.4a2.4 2.4 0 1 0 4.8 0a2.4 2.4 0 1 0 -4.8 0zM95 56.6a2.4 2.4 0 1 0 4.8 0a2.4 2.4 0 1 0 -4.8 0zM29.1 62.2a2.4 2.4 0 1 0 4.8 0a2.4 2.4 0 1 0 -4.8 0zM42.5 70.5a2.4 2.4 0 1 0 4.8 0a2.4 2.4 0 1 0 -4.8 0zM85.7 73.3a2.4 2.4 0 1 0 4.8 0a2.4 2.4 0 1 0 -4.8 0zM60.3 76.4a2.4 2.4 0 1 0 4.8 0a2.4 2.4 0 1 0 -4.8 0zM39.9 82.6a2.4 2.4 0 1 0 4.8 0a2.4 2.4 0 1 0 -4.8 0zM79.2 88.5a2.4 2.4 0 1 0 4.8 0a2.4 2.4 0 1 0 -4.8 0zM74.2 96.1a2.4 2.4 0 1 0 4.8 0a2.4 2.4 0 1 0 -4.8 0z" fill="#501450"/><path d="M59.6 28.4a2.9 2.9 0 1 0 5.8 0a2.9 2.9 0 1 0 -5.8 0zM73.4 35.3a2.9 2.9 0 1 0 5.8 0a2.9 2.9 0 1 0 -5.8 0zM95.1 45.1a2.9 2.9 0 1 0 5.8 0a2.9 2.9 0 1 0 -5.8 0zM45.3 44.5a2.9 2.9 0 1 0 5.8 0a2.9 2.9 0 1 0 -5.8 0zM76.3 47.3a2.9 2.9 0 1 0 5.8 0a2.9 2.9 0 1 0 -5.8 0zM30.5 51.6a2.9 2.9 0 1 0 5.8 0a2.9 2.9 0 1 0 -5.8 0zM60.2 50.6a2.9 2.9 0 1 0 5.8 0a2.9 2.9 0 1 0 -5.8 0zM38.3 61.6a2.9 2.9 0 1 0 5.8 0a2.9 2.9 0 1 0 -5.8 0zM84.3 58.4a2.9 2.9 0 1 0 5.8 0a2.9 2.9 0 1 0 -5.8 0zM97.3 68.6a2.9 2.9 0 1 0 5.8 0a2.9 2.9 0 1 0 -5.8 0zM51.8 69.2a2.9 2.9 0 1 0 5.8 0a2.9 2.9 0 1 0 -5.8 0zM31.4 73.8a2.9 2.9 0 1 0 5.8 0a2.9 2.9 0 1 0 -5.8 0zM73.5 74.2a2.9 2.9 0 1 0 5.8 0a2.9 2.9 0 1 0 -5.8 0zM48.7 81.6a2.9 2.9 0 1 0 5.8 0a2.9 2.9 0 1 0 -5.8 0zM89.5 85.3a2.9 2.9 0 1 0 5.8 0a2.9 2.9 0 1 0 -5.8 0zM69.1 89.1a2.9 2.9 0 1 0 5.8 0a2.9 2.9 0 1 0 -5.8 0zM55.2 96.5a2.9 2.9 0 1 0 5.8 0a2.9 2.9 0 1 0 -5.8 0z" fill="#ff1e1e"/></symbol><symbol id="t55" viewBox="0 0 126 126"><circle cx="65" cy="63" r="39" fill="#5a3c0a"/><ellipse cx="66.5" cy="42.6" rx="14.5" ry="8.8" transform="rotate(-73.9 66.5 42.6)" fill="#000"/><ellipse cx="85.2" cy="57.2" rx="14.5" ry="9.4" transform="rotate(-4 85.2 57.2)" fill="#000"/><ellipse cx="76.4" cy="80" rx="14" ry="8.8" transform="rotate(68.1 76.4 80)" fill="#000"/><ellipse cx="52.6" cy="80" rx="15" ry="9.4" transform="rotate(138.1 52.6 80)" fill="#000"/><ellipse cx="45.3" cy="57.4" rx="14" ry="8.6" transform="rotate(208 45.3 57.4)" fill="#000"/><path d="M63.9 61.3Q62.2 53.4 52.9 42.3M66.2 61.4Q73.3 57.4 80.8 45M66.9 63.7Q73 69.1 87.1 72.3M64.9 65Q61.8 72.5 63.1 86.9M63.1 63.7Q55 63.4 42 69.9" fill="none" stroke="#000" stroke-width="0.8" /><path d="M94.3 81.7L96.6 85.8M83.3 34.7L85 29.5M58.9 28.7L58.5 24.5M40.6 83.7L35.7 88.8M32.6 55.9L26.2 58.9M69.1 96.3L66.6 102M94.5 73.1L99.9 77.3M76.4 94.8L79.9 99M79.6 36.2L82.1 27.9M44.9 86.6L38.5 89.4M70.9 95.2L73.9 101M87.9 87.4L91.9 91.3M40.6 44.6L36.4 37M64.1 97.1L65.8 102M61.2 93.2L60.9 99.3M32.7 65.7L26.6 69.7M70.2 95.4L74.2 100.9M59.2 97.4L56.4 101M45.3 88.3L40.6 93.4M45.8 39.7L39 35.7M49.7 91.9L47.5 97.9M46.1 38.3L39.5 33.5M32.7 54.5L27.2 53.6M46.9 39L42 31.6M39.1 45.4L34.6 40.8M38.9 79L33.1 78.8M74 94.3L78.2 99.7M76.5 32.7L76.2 25.6M36.6 77.4L32.1 80.4M36.3 77.1L30.8 81.7M96.7 74.7L102.9 72.2M66 29.4L69.1 24.2M60.8 96.9L56.9 101.2M97.8 62.7L103.8 64.8M58.8 31.1L56.7 27M52.3 35.8L53.1 28.9M58.2 32.4L57.8 27.8M41.4 42.2L39.7 34.7M45.8 36.5L43.1 33.2M99.5 67.9L103.5 69.4M52.3 35.6L50.5 27.5M96.1 78.1L97.8 84M93.9 82L98.8 82.5M94.3 79L97.9 81.4M75.9 32.9L77.2 27.4M87.9 82.9L91.1 89.5M95.5 61.4L101 63.9M56.2 95.7L51.7 99.7M41.1 39.3L35 38M47.6 91.8L42.7 95" fill="none" stroke="#000" stroke-width="1.2" /><path d="M97.1 57.8L103.8 58.9M89.1 51.1L93.8 51.2M84.2 37.5L86.3 31.3M97.2 59.8L103.9 60.6M82.1 40.8L84 32.8M51 89.6L44.2 93.2M46.5 43.3L42.7 36.1M81.6 32.8L83.9 28.9M51.5 40.2L47.9 35.5M62.7 36.5L60.4 31.8M74.2 91.8L78.4 99.6M88.8 73.8L96.2 76.2M93.1 60.7L101.8 58.3M99 58.2L102.9 53.7M42.3 41.5L34.9 39M80.3 38.3L80.2 31.8M94.8 67L99.6 66M62.4 30.3L59.4 24.4M44.5 41.9L40.1 33.8M82.8 40.9L87.2 34.3M64.3 90L63 96.5M64 89.8L63.6 96.8M59.2 29.7L62.7 24.4M56.9 94.7L53.4 99M46.7 87.7L39.9 92.8M67 28.8L64.9 24M79.8 35.5L85.9 33M91.1 42.5L97.4 41.3M42 80.1L35 84.1M63.7 36.3L62.8 29.8M97.5 71.5L102.8 72.6M37.1 48.1L31.9 48.3M90.9 81.3L93.8 85.5M73.3 31.3L75 25.3M34.7 55.5L27.9 53.7M63.2 95.3L64.2 102M90.4 81.3L95.5 83.1M88.6 39.7L93.3 36.2M60.6 35.1L59.9 28M74.7 93.2L79.7 99M70.7 35.1L70.4 26.5M89.8 41.6L91.8 35.7M35.7 61.9L28.6 61.8M93 68.8L99.2 71.7M65.2 93.9L63.1 98.9M45.4 42L45.2 36.1M79 90.8L82.8 94.1M78.3 94.1L83.7 97.2M95.5 70.5L99.9 74.1M40.3 42.7L35 41.6M73.3 29.1L74 25M38.1 64.9L33.6 68.3M88.7 80L90.3 85.7M72.7 29.2L76.5 25.9M68 30.7L72.4 27M96.6 60.4L103.5 57.1M79.7 40.6L86.2 36.6M53.3 90.7L54.5 98.9M76.3 94.1L81.4 98.4M79.6 85L80.5 93.4M97.2 69.8L103.6 68.6M52.5 35.3L48.3 31.7M63.1 89.9L61.2 95.6M91.3 78.3L99 82.1M91.3 83L98.2 83.5M78.5 31.9L84.3 29.1M64.7 30.7L68.3 26.1M82.4 39.6L87.8 35.4M74 90.5L72.7 96.1M55.6 88.2L50.7 95.4M72.7 87.9L71.8 94.4M79.3 89.6L82.3 92.6M33.8 52.8L28.6 52.9M46.6 81.6L39.6 85.6M86.7 83.3L90.6 91.3M54.1 37.4L52.4 32.5M58.6 33L60.7 24.5M96.9 76L100.8 78.5M34.3 53.1L28 50.9M55 35.9L49.6 32.1" fill="none" stroke="#9a9a9a" stroke-width="1.1" /><path d="M94.1 53.2L102.1 52.3M59.9 36.5L56.2 28.4M89.8 40.7L96.8 40.4M49.4 32.7L47.7 28M72.6 34.4L75.3 29.6M38.1 61L32.6 61.9M91.1 56.4L96.7 57.3M60.6 89.4L57.7 96.9M70.8 37.3L69.1 31M37.9 57.1L30.8 58.3M87.5 78.3L96.1 81.1M69.4 91.4L67.8 96M84 91.7L89.7 93.1M70.7 90.5L68.4 95.9M61.4 33.3L63.5 26.6M36.1 49.2L33.3 43.9M62.4 96.9L66.2 102M45.5 84.7L42.1 87.5M35.1 49.5L29.4 51.3M50.2 87.3L46 92.2M82.1 43.6L87.8 42.1M80.6 35.8L80.7 27.3M38.1 58.8L33.1 58.9M77 39L76.6 32.3M40.2 73.6L32.3 75.3M66.7 95.8L66 102M92.6 53.8L99.5 52.1M32.5 59.9L27.4 60.3M75.5 91.5L76.2 96.7M86.2 45.3L91.6 45.5M89.4 84.4L94.9 88.1M51.5 37L49.2 31.8M35.6 60.1L29 63M93.4 62.3L100.3 66M93.4 72.4L97.7 75.8M89.2 39.4L90.7 33.7M44.1 36.7L42.1 31.4M96.1 78.1L97.8 84M67.3 91L70.3 95.4M42.8 41.7L40.1 36.9M48.1 82.4L42.2 86.4M47 82.9L41.5 89.2M47.3 37.9L44.2 30.4M93.3 52.4L100.1 47.9M35.7 55.7L31 51.5M38.8 55.2L34.4 54.5M93.6 64.2L100.6 65.7M51 40L45.5 37.7M78.6 95L77.4 100M70.1 35.3L73.6 30M97.8 54.1L101.5 49.2M49.4 37.4L50.7 32M90.5 43.6L93.3 36.2M74 37.4L73.1 32.4M93.1 73L99.5 79.1M74.1 94.5L73.8 99M91.9 82.2L93.8 89.3M37.2 72.2L30.9 70.9M73.8 32.4L78 26.2M84.7 91.5L87.1 95.1M49.9 89.8L47.5 94.7M35.9 72.6L32.4 76.5M92 72.3L101.3 70.8M47.7 37.1L40.4 32.7M39.5 60.8L34.7 56.7M99.7 63.8L103.8 67.4M72.6 96.7L74.4 100.8M56.6 32.5L52.4 29.1M57 89.7L53.2 95.2M92.5 51.4L99.4 53.1M40.2 39.5L36.6 36.3M92.2 81.7L99.4 81.4M75.4 36.2L80.9 32.9M77.8 34.3L76.6 26.8M92 42.7L93.2 36.1M37.2 67L31.1 66.6M64.3 35.6L62 31.4M61 89.8L61.5 95.9M89.7 72.3L96.5 78.4M77.2 87.2L82.6 92.8M63.6 90.3L60.1 97.7M39.7 62.4L35.7 60.9M61.9 35.3L58 30M46.1 39.2L45 30.7M52.3 31.6L53.8 25.8M39.3 63.9L32.7 64.2M59.8 91.8L57.7 98.9M62.6 31.5L61.9 26.5M37.5 48.9L31.8 49.2M38.4 70.7L31.5 69.4" fill="none" stroke="#1e9a1e" stroke-width="1.3" /><path d="M76.9 45.7l1.9 -1.9l1.9 1.9l-1.9 1.9zM84.2 39.4l2.3 -2.3l2.3 2.3l-2.3 2.3zM58.4 80.6l2.7 -2.7l2.7 2.7l-2.7 2.7zM42.3 70.2l2.7 -2.7l2.7 2.7l-2.7 2.7zM95.6 62.9l2 -2l2 2l-2 2zM60.3 80.2l2.9 -2.9l2.9 2.9l-2.9 2.9zM88.3 69.6l2.4 -2.4l2.4 2.4l-2.4 2.4zM58.2 81l2.4 -2.4l2.4 2.4l-2.4 2.4zM38.7 60.3l2.3 -2.3l2.3 2.3l-2.3 2.3zM69.8 47.7l2.6 -2.6l2.6 2.6l-2.6 2.6zM78.4 87.2l2.2 -2.2l2.2 2.2l-2.2 2.2zM76 85l2.2 -2.2l2.2 2.2l-2.2 2.2zM41.5 81.7l2 -2l2 2l-2 2zM48.7 53.3l2.2 -2.2l2.2 2.2l-2.2 2.2zM65.7 36.1l2.6 -2.6l2.6 2.6l-2.6 2.6zM73.5 89.8l2.8 -2.8l2.8 2.8l-2.8 2.8zM45.8 43.6l2.5 -2.5l2.5 2.5l-2.5 2.5zM79.9 40.5l2 -2l2 2l-2 2zM83.1 79.8l3.1 -3.1l3.1 3.1l-3.1 3.1zM89.1 48.5l2.3 -2.3l2.3 2.3l-2.3 2.3zM57.9 41.6l3.1 -3.1l3.1 3.1l-3.1 3.1zM67.5 84.4l2 -2l2 2l-2 2zM39.7 81.8l2 -2l2 2l-2 2zM49.4 45.1l2.7 -2.7l2.7 2.7l-2.7 2.7zM40.4 62.6l2 -2l2 2l-2 2zM79.1 65.9l3.1 -3.1l3.1 3.1l-3.1 3.1z" fill="#1e9a1e" stroke="#1e9a1e" stroke-width="1" /><path d="M52.2 39.8L50.6 31.3M87.2 79.2L92.1 84.7M47 85.5L45.8 90.2M73.9 94.5L76.9 100.1M34.7 75.5L30.1 78.4M90.5 48.2L98.8 45.2M63.2 94.8L64.7 99.9M47.3 43.2L46 35.9M83.2 35.4L87.4 31.1M37.1 42.5L34.1 39.2M96.9 56.5L102 58.4M79.4 36.6L80 31.2M86.3 37.2L88.3 32.8M73.2 91.9L75.1 96.4M91.7 82.5L96.3 86.3M38.5 82.3L36.1 89.2M80.6 84.3L87.8 87.4M79.9 85.6L83 90.5M92 60.4L100 60.2M87.6 42.2L92.8 36.6M45.9 85.1L37.9 87.6M71.6 97.3L69.7 101.7M76 39.2L80.2 31.6M89.6 49.5L96.1 45.6M37 76L31.5 75.9M89.8 45.1L91.8 38.3M91.9 43.6L94 36.9M42.1 85.4L34.7 87.6M94.3 64.3L98.1 67.7M46.6 44.2L38.8 40.9M45.4 89.2L45.3 94.2M70.3 36.9L68.4 31.2M48.9 89.9L46.7 94M48.8 40.6L48 33.6M41.2 38.3L40 33" fill="none" stroke="#5a3c0a" stroke-width="1.2" /></symbol><symbol id="t62" viewBox="0 0 126 126"><circle cx="64" cy="63" r="15" fill="#1e8c6e"/><path d="M63.9 52.3l-5.8 -5.8M63.9 52.3l5.7 -5.9M63.9 49.6l-5.7 -5.7M63.9 49.6l5.6 -5.7M63.9 46.9l-5.5 -5.5M63.9 46.9l5.4 -5.5M63.9 44.2l-5.3 -5.3M63.9 44.2l5.2 -5.3M63.9 41.5l-5 -5M63.9 41.5l5 -5.1M63.8 38.8l-4.7 -4.7M63.8 38.8l4.7 -4.8M63.8 36.1l-4.4 -4.4M63.8 36.1l4.4 -4.5M63.8 33.4l-4.1 -4M63.8 33.4l4 -4.1M63.8 30.7l-3.7 -3.7M63.8 30.7l3.6 -3.7M63.8 28l-3.2 -3.2M63.8 28l3.2 -3.3M63.8 25.3l-2.8 -2.8M63.8 25.3l2.8 -2.8M63.7 22.6l-2.3 -2.3M63.7 22.6l2.3 -2.3M69 53.5l-2.4 -7.8M69 53.5l7.8 -2.4M70.3 51.2l-2.3 -7.6M70.3 51.2l7.6 -2.4M71.6 48.8l-2.2 -7.3M71.6 48.8l7.3 -2.3M72.8 46.4l-2.1 -7M72.8 46.4l7 -2.2M74.1 44l-2 -6.6M74.1 44l6.6 -2.1M75.3 41.6l-1.9 -6.2M75.3 41.6l6.2 -1.9M76.6 39.2l-1.7 -5.7M76.6 39.2l5.7 -1.8M77.9 36.9l-1.6 -5.2M77.9 36.9l5.2 -1.6M79.1 34.5l-1.4 -4.6M79.1 34.5l4.6 -1.4M80.4 32.1l-1.2 -4M80.4 32.1l3.9 -1.2M81.7 29.7l-1 -3.3M81.7 29.7l3.3 -1M73.8 58.8l3.1 -7.6M73.8 58.8l7.6 3M76.3 57.7l3 -7.4M76.3 57.7l7.4 2.9M78.8 56.7l2.9 -7.1M78.8 56.7l7.2 2.8M81.3 55.6l2.8 -6.8M81.3 55.6l6.9 2.7M83.8 54.6l2.6 -6.5M83.8 54.6l6.5 2.6M86.3 53.5l2.5 -6.1M86.3 53.5l6.1 2.4M88.7 52.5l2.3 -5.6M88.7 52.5l5.7 2.2M91.2 51.4l2.1 -5.2M91.2 51.4l5.2 2.1M93.7 50.3l1.9 -4.6M93.7 50.3l4.6 1.8M96.2 49.3l1.7 -4M96.2 49.3l4.1 1.6M98.7 48.2l1.4 -3.4M98.7 48.2l3.4 1.4M74.7 62.7l5.7 -5.9M74.7 62.7l6 5.6M77.4 62.6l5.6 -5.8M77.4 62.6l5.9 5.5M80.1 62.6l5.4 -5.6M80.1 62.6l5.7 5.3M82.8 62.5l5.2 -5.4M82.8 62.5l5.5 5.1M85.5 62.4l5 -5.2M85.5 62.4l5.2 4.9M88.2 62.4l4.7 -4.9M88.2 62.4l4.9 4.6M90.9 62.3l4.4 -4.6M90.9 62.3l4.6 4.3M93.6 62.2l4.1 -4.2M93.6 62.2l4.3 4M96.3 62.2l3.7 -3.9M96.3 62.2l3.9 3.7M99 62.1l3.3 -3.5M99 62.1l3.5 3.3M101.7 62l2.9 -3M101.7 62l3 2.9M104.4 61.9l2.4 -2.5M104.4 61.9l2.6 2.4M73.1 68.6l8 -1.9M73.1 68.6l2 8M75.4 70l7.8 -1.8M75.4 70l1.9 7.7M77.8 71.4l7.5 -1.8M77.8 71.4l1.9 7.5M80.1 72.8l7.2 -1.7M80.1 72.8l1.8 7.2M82.4 74.2l6.8 -1.6M82.4 74.2l1.7 6.8M84.7 75.6l6.4 -1.5M84.7 75.6l1.6 6.4M87 77l5.9 -1.4M87 77l1.5 5.9M89.3 78.4l5.4 -1.3M89.3 78.4l1.3 5.4M91.6 79.8l4.9 -1.2M91.6 79.8l1.2 4.8M93.9 81.2l4.2 -1M93.9 81.2l1.1 4.2M96.2 82.6l3.6 -0.9M96.2 82.6l0.9 3.6M69.4 72.2l7.9 2.1M69.4 72.2l-2 7.9M70.8 74.6l7.6 2M70.8 74.6l-1.9 7.7M72.2 76.9l7.3 2M72.2 76.9l-1.9 7.4M73.5 79.2l7 1.9M73.5 79.2l-1.8 7M74.9 81.5l6.6 1.8M74.9 81.5l-1.7 6.6M76.3 83.9l6.1 1.6M76.3 83.9l-1.6 6.1M77.6 86.2l5.6 1.5M77.6 86.2l-1.4 5.6M79 88.5l5 1.3M79 88.5l-1.3 5.1M80.4 90.9l4.4 1.2M80.4 90.9l-1.1 4.4M81.7 93.2l3.7 1M81.7 93.2l-1 3.8M65.4 73.6l6.5 5M65.4 73.6l-4.9 6.6M65.8 76.3l6.4 4.9M65.8 76.3l-4.8 6.4M66.2 79l6.1 4.7M66.2 79l-4.7 6.2M66.5 81.6l5.9 4.5M66.5 81.6l-4.5 5.9M66.9 84.3l5.6 4.3M66.9 84.3l-4.3 5.7M67.3 87l5.3 4.1M67.3 87l-4 5.3M67.6 89.7l4.9 3.8M67.6 89.7l-3.7 5M68 92.3l4.5 3.5M68 92.3l-3.4 4.6M68.4 95l4.1 3.2M68.4 95l-3.1 4.1M68.7 97.7l3.6 2.8M68.7 97.7l-2.8 3.7M69.1 100.4l3.1 2.4M69.1 100.4l-2.4 3.2M69.4 103l2.6 2M69.4 103l-2 2.6M59.1 72.5l2.4 7.8M59.1 72.5l-7.8 2.5M57.8 74.9l2.3 7.6M57.8 74.9l-7.6 2.4M56.6 77.3l2.3 7.3M56.6 77.3l-7.3 2.3M55.3 79.7l2.2 7M55.3 79.7l-7 2.2M54.1 82.1l2 6.6M54.1 82.1l-6.6 2.1M52.8 84.5l1.9 6.2M52.8 84.5l-6.2 2M51.6 86.9l1.8 5.7M51.6 86.9l-5.7 1.8M50.3 89.3l1.6 5.2M50.3 89.3l-5.1 1.7M49.1 91.6l1.4 4.6M49.1 91.6l-4.6 1.5M47.8 94l1.2 3.9M47.8 94l-3.9 1.3M46.6 96.4l1 3.3M46.6 96.4l-3.2 1M55.3 69.3l-1.3 8M55.3 69.3l-8 -1.3M53.1 70.8l-1.3 7.8M53.1 70.8l-7.8 -1.2M50.9 72.4l-1.2 7.4M50.9 72.4l-7.4 -1.2M48.8 74l-1.2 7.1M48.8 74l-7.1 -1.1M46.6 75.6l-1.1 6.6M46.6 75.6l-6.6 -1M44.4 77.2l-1 6.1M44.4 77.2l-6.1 -1M42.2 78.7l-0.9 5.6M42.2 78.7l-5.6 -0.9M40 80.3l-0.8 4.9M40 80.3l-5 -0.8M37.8 81.9l-0.7 4.3M37.8 81.9l-4.3 -0.7M35.6 83.5l-0.6 3.5M35.6 83.5l-3.5 -0.6M53.3 64l-5.3 6.3M53.3 64l-6.4 -5.2M50.7 64.3l-5.1 6.2M50.7 64.3l-6.2 -5.1M48 64.5l-5 6M48 64.5l-6 -4.9M45.3 64.8l-4.8 5.7M45.3 64.8l-5.8 -4.7M42.6 65l-4.5 5.4M42.6 65l-5.5 -4.5M39.9 65.3l-4.3 5.1M39.9 65.3l-5.2 -4.2M37.2 65.6l-4 4.8M37.2 65.6l-4.8 -3.9M34.5 65.8l-3.7 4.4M34.5 65.8l-4.4 -3.6M31.8 66.1l-3.3 4M31.8 66.1l-4 -3.3M29.2 66.3l-2.9 3.5M29.2 66.3l-3.6 -2.9M26.5 66.6l-2.5 3M26.5 66.6l-3.1 -2.5M23.8 66.9l-2.1 2.5M23.8 66.9l-2.5 -2.1M54.4 58.3l-7.8 2.6M54.4 58.3l-2.7 -7.8M52 57.1l-7.6 2.5M52 57.1l-2.6 -7.5M49.6 55.9l-7.3 2.4M49.6 55.9l-2.5 -7.3M47.1 54.7l-7 2.3M47.1 54.7l-2.4 -7M44.7 53.5l-6.6 2.2M44.7 53.5l-2.3 -6.6M42.3 52.3l-6.2 2.1M42.3 52.3l-2.2 -6.2M39.9 51.1l-5.8 1.9M39.9 51.1l-2 -5.8M37.4 49.9l-5.3 1.8M37.4 49.9l-1.8 -5.3M35 48.7l-4.7 1.6M35 48.7l-1.6 -4.7M32.6 47.6l-4.1 1.4M32.6 47.6l-1.4 -4.1M30.2 46.4l-3.5 1.2M30.2 46.4l-1.2 -3.5M57.6 54.5l-8 -1.2M57.6 54.5l1.1 -8M55.9 52.3l-7.7 -1.1M55.9 52.3l1.1 -7.7M54.3 50.1l-7.4 -1.1M54.3 50.1l1 -7.4M52.7 48l-7 -1M52.7 48l0.9 -7M51.1 45.8l-6.5 -1M51.1 45.8l0.9 -6.5M49.4 43.7l-6 -0.9M49.4 43.7l0.8 -6M47.8 41.5l-5.4 -0.8M47.8 41.5l0.7 -5.4M46.2 39.4l-4.7 -0.7M46.2 39.4l0.6 -4.8M44.6 37.2l-4 -0.6M44.6 37.2l0.5 -4M43 35l-3.2 -0.5M43 35l0.4 -3.2" fill="none" stroke="#1e8c6e" stroke-width="1.6" /><path d="M63.9 55L63.8 28M67.8 55.9L79.5 33.9M71.4 59.9L95.3 49.7M72 62.8L100 62.1M70.8 67.2L93 80.7M68.1 69.9L80.2 90.6M65.1 70.9L68.7 97.7M60.3 70.1L48.8 92.3M57.5 67.7L38.9 81.1M56 63.8L29.2 66.3M56.8 59.5L33.5 48M59.2 56.6L46 39" fill="none" stroke="#0f3c28" stroke-width="0.8" /><path d="M65.9 63.6l11.5 3.5M65.1 64.7l6.5 10.1M63.7 65l-1.5 11.9M62.5 64.4l-8.8 8.1M62 63.1l-12 0.5M62.4 61.8l-9.5 -7.3M63.6 61l-2.5 -11.7M64.9 61.2l5.6 -10.6M65.9 62.3l11.1 -4.5" fill="none" stroke="#0f3c28" stroke-width="1.2" stroke-dasharray="3 2"/></symbol><symbol id="t56" viewBox="0 0 126 126"><circle cx="65" cy="63" r="39" fill="#3c280a"/><ellipse cx="66.5" cy="41.9" rx="14.9" ry="9.1" transform="rotate(-73.9 66.5 41.9)" fill="#000"/><ellipse cx="85.8" cy="57" rx="14.9" ry="9.7" transform="rotate(-4 85.8 57)" fill="#000"/><ellipse cx="76.8" cy="80.5" rx="14.4" ry="9.1" transform="rotate(68.1 76.8 80.5)" fill="#000"/><ellipse cx="52.3" cy="80.5" rx="15.5" ry="9.7" transform="rotate(138.1 52.3 80.5)" fill="#000"/><ellipse cx="44.7" cy="57.2" rx="14.4" ry="8.9" transform="rotate(208 44.7 57.2)" fill="#000"/><path d="M63.9 61.3Q62.2 53.4 52.9 42.3M66.2 61.4Q73.3 57.4 80.8 45M66.9 63.7Q73 69.1 87.1 72.3M64.9 65Q61.8 72.5 63.1 86.9M63.1 63.7Q55 63.4 42 69.9" fill="none" stroke="#000" stroke-width="0.8" /><circle cx="65" cy="63" r="37" fill="none" stroke="#000" stroke-width="5" stroke-dasharray="5 3"/><path d="M92.7 55.5L95.7 53.8L99 55L97.6 58.1L94.2 59.1zM29.3 73.9L32.8 71.9L36.5 73.2L35 76.8L31.2 78zM47.9 32.8L51 32.3L53.4 34.3L51.2 36.6L48.1 36.4zM75.8 87.8L78 90.7L77.2 94.3L73.6 93.2L72.2 89.8zM82.6 35.1L79.6 32.4L79.8 28.4L83.8 28.8L86 32.1zM91.3 76.1L91.3 72.6L93.9 70.4L95.9 73.2L95.1 76.5zM35.1 45.3L37.3 49L35.9 53.1L31.9 51.4L30.6 47.3zM65.8 42.2L63.1 40.2L62.9 36.8L66.2 36.8L68.4 39.4zM58.6 91.5L60.4 94.3L59.5 97.5L56.4 96.3L55.2 93.1zM44.4 80.2L46.5 77.1L50.1 76.8L50.2 80.4L47.5 82.8zM85.1 41.7L89.4 42.2L91.8 45.8L88 47.9L84 46.4zM93.2 87.8L89.6 86.8L88 83.4L91.5 82.1L94.8 83.9zM40.9 36.4L39.9 39.8L36.6 41.3L35.4 37.9L37.2 34.8zM43.8 69.4L40.6 69.3L38.6 66.9L41.2 65.1L44.3 65.9zM30.6 59.4L28.5 56.5L29.4 53L32.8 54.1L34.1 57.5zM26.1 63.7L30.2 63.6L32.9 66.7L29.6 69.2L25.7 68.3zM85.7 84.7L83.6 87.7L80.1 88L80 84.5L82.7 82.1zM38.9 95.5L37.8 91.1L40.4 87.5L43.9 90.4L43.9 94.8zM70.6 36.8L73.9 34.7L77.6 35.8L76.2 39.4L72.5 40.7zM46.1 49.5L43.9 52.6L40.2 53.1L40.1 49.3L42.8 46.7zM49 39.9L51.9 42.2L52 45.9L48.3 45.7L46 42.8zM87.5 87.5L90.2 91L89.3 95.3L85 94.1L83.2 90.1zM86.3 56.2L89.6 56.9L91.2 59.8L88.2 61.2L85.1 59.8zM62.7 81.9L66.2 83.1L67.6 86.6L64.1 87.7L60.9 85.7zM95.1 38L90.9 39.5L87.1 37.4L89.5 33.7L93.9 33.2zM68.6 94.9L70.5 97.4L69.8 100.5L66.8 99.5L65.5 96.6zM75.9 30.9L72.7 32.3L69.6 30.8L71.3 27.8L74.7 27.1zM95.8 47.3L95.3 44.1L97.4 41.6L99.7 43.9L99.4 47.2zM102.1 71.1L98.5 68.6L98 64.2L102.4 64.1L105.4 67.3zM57 32.7L57.4 29L60.5 26.9L62.3 30.1L61 33.6zM88.7 48.6L92.3 47L95.9 48.8L93.9 52.2L90 52.9zM43.6 77.2L45 81L43 84.4L39.7 82.2L39.3 78.2zM58.7 88.8L54.8 90.9L50.6 89.3L52.5 85.3L56.8 84.1zM43.4 45.3L41.2 41.9L42.4 38L46.2 39.5L47.5 43.4zM79.2 79L80.7 75.9L84 75L84.7 78.4L82.5 81.1zM71.6 87.6L71.5 84.1L74.2 81.8L76.3 84.6L75.5 88zM85.9 50.7L84.9 53.9L81.8 55.2L80.7 52L82.5 49.1zM95.3 63.9L91.4 65.1L88 62.8L90.5 59.6L94.6 59.4zM34.5 66L34.5 61.8L37.6 59L40.2 62.3L39.2 66.5zM41.3 42.1L38.9 45.4L34.9 45.7L34.9 41.6L37.9 39zM75.5 42.7L79.1 40.5L83.1 41.7L81.5 45.6L77.5 47zM28.8 79.8L31.4 77.5L34.7 78L34 81.3L31 82.9zM58.7 43.4L56.3 39.8L57.5 35.5L61.6 37L63.1 41.1zM51 28.2L49.3 31L46 31.6L45.7 28.2L48 25.9zM64.1 22.1L66.6 24.4L66.4 27.9L63 27.4L61.2 24.6zM41.6 71.5L43.9 74L43.5 77.4L40.1 76.7L38.5 73.7zM101.8 71.3L100.9 74.7L97.8 76.1L96.6 72.9L98.3 69.9zM97.6 81.5L94.5 79.6L93.9 76.1L97.4 75.8L100 78.3zM38.5 90.7L35.1 89.8L33.7 86.6L37 85.4L40 87.1zM35.2 78.3L38.6 80.2L39.4 84L35.6 84.5L32.7 81.9zM40.7 66.5L38.3 69.8L34.3 70L34.4 66L37.5 63.4zM65.2 28.9L68.7 31L69.4 35.1L65.3 35.5L62.4 32.6zM55.9 93.4L54.2 97.2L50.3 98.3L49.4 94.3L52 91zM60.7 93.4L64.6 95.4L65.7 99.6L61.4 100.3L58 97.5zM84.8 92.9L83 96L79.3 96.6L79 93L81.6 90.4zM102.2 57.2L98.4 57.5L95.6 54.8L98.5 52.3L102.4 52.8zM46.2 53.8L45.3 50L47.6 46.8L50.6 49.3L50.6 53.2zM51.8 86.6L50.9 90.5L47.3 92.2L45.8 88.5L47.6 85zM63.7 87.8L60.4 90.3L56.3 89.4L57.5 85.4L61.4 83.7zM85.5 50.7L89.4 51.5L91.3 55L87.6 56.6L84.1 54.9zM75.5 27L79.3 24.8L83.4 26.3L81.7 30.3L77.5 31.5zM43.5 32.5L45.3 35.7L44.1 39.1L40.8 37.6L39.8 34.2z" fill="#ff8c1e" stroke="#ff8c1e" stroke-width="0.6" /><path d="M93.3 57.9l4.9 -0.3l-2 2.3zM48 36l4.5 -0.3l-1.8 2.1zM79.2 33.2l5.7 -0.4l-2.3 2.7zM30.9 51.4l6.2 -0.4l-2.5 2.9zM55.5 96.2l4.8 -0.3l-1.9 2.2zM84.5 46.9l6.1 -0.4l-2.5 2.9zM35.2 39.9l5.1 -0.3l-2 2.4zM28.3 57.7l5.1 -0.3l-2.1 2.4zM79.6 87.2l5.1 -0.3l-2 2.4zM71.3 39.3l5.6 -0.4l-2.2 2.6zM46.7 45.1l5.3 -0.4l-2.1 2.5zM85.6 60.4l4.8 -0.3l-1.9 2.2zM87.8 38.5l6.3 -0.4l-2.5 2.9zM70.1 31.5l5 -0.3l-2 2.3zM97.8 69.1l6.3 -0.4l-2.5 3zM89.2 51.8l5.7 -0.4l-2.3 2.7zM51.2 89.8l6.3 -0.4l-2.5 3zM79.6 79.5l5 -0.3l-2 2.3zM80.5 53.9l4.8 -0.3l-1.9 2.2zM34 65l6 -0.4l-2.4 2.8zM76.2 45.5l6 -0.4l-2.4 2.8zM56 41.3l6.3 -0.4l-2.5 2.9zM61.7 27l4.9 -0.3l-2 2.3zM96.4 74.7l4.9 -0.3l-2 2.3zM34.1 89.5l5 -0.3l-2 2.3zM33.9 69.1l5.7 -0.4l-2.3 2.7zM49.2 96.9l5.9 -0.4l-2.4 2.8zM78.7 95.6l5.2 -0.3l-2.1 2.4zM45 52.4l5.6 -0.4l-2.3 2.6zM56.5 89.4l6 -0.4l-2.4 2.8zM76.2 30l6.3 -0.4l-2.5 2.9z" fill="#ffc864" stroke="#ffc864" stroke-width="0.4" /><path d="M98.9 53.3l-3 0.7l1.6 2zM78.6 88.1l-3.2 0.7l1.8 2.1zM37.9 45.6l-3.7 0.8l2.1 2.5zM51 76.3l-3.1 0.7l1.7 2.1zM41 35.1l-3.1 0.7l1.7 2zM32.5 62.8l-3.5 0.8l1.9 2.3zM77.6 34.1l-3.3 0.7l1.9 2.2zM90.9 87.9l-3.8 0.8l2.1 2.5zM95 32.6l-3.8 0.8l2.1 2.5zM100.3 41.9l-2.8 0.6l1.6 1.9zM95.7 46.5l-3.4 0.8l1.9 2.3zM47.6 38l-3.5 0.8l1.9 2.3zM86 49.4l-2.9 0.6l1.6 1.9zM41 39.4l-3.5 0.8l1.9 2.3zM63.2 35.5l-3.8 0.8l2.1 2.5zM44.5 71.8l-2.9 0.7l1.6 2zM39.8 84.9l-3 0.7l1.7 2zM69.8 29.1l-3.5 0.8l2 2.4zM84.6 90.7l-3.1 0.7l1.7 2.1zM52.1 85.2l-3.4 0.8l1.9 2.3zM83.4 24.2l-3.8 0.8l2.1 2.5z" fill="#ffd21e" stroke="#ffd21e" stroke-width="0.4" /></symbol><symbol id="t68" viewBox="0 0 126 126"><path d="M64.4 59.4L56.6 56.6L51 55.1" fill="none" stroke="#8c8c8c" stroke-width="3.2" stroke-linejoin="round" stroke-linecap="round"/><path d="M51 55.1L54.7 49.2L54.7 41.7L56.6 31.5" fill="none" stroke="#8c8c8c" stroke-width="1.6" stroke-linejoin="round" stroke-linecap="round"/><path d="M54.7 44.5L45.5 44" fill="none" stroke="#8c8c8c" stroke-width="1.2" stroke-linejoin="round" stroke-linecap="round"/><path d="M51 55.1L39.9 58.4L33.4 66.8" fill="none" stroke="#8c8c8c" stroke-width="1.8" stroke-linejoin="round" stroke-linecap="round"/><path d="M64.4 59.4L69.6 53.2L78.8 44.5" fill="none" stroke="#8c8c8c" stroke-width="3" stroke-linejoin="round" stroke-linecap="round"/><path d="M78.8 44.5L77 34.3" fill="none" stroke="#8c8c8c" stroke-width="1.3" stroke-linejoin="round" stroke-linecap="round"/><path d="M78.8 44.5L86.3 44.5" fill="none" stroke="#8c8c8c" stroke-width="1.5" stroke-linejoin="round" stroke-linecap="round"/><path d="M68.6 55.1L84.4 61.2" fill="none" stroke="#8c8c8c" stroke-width="2.6" stroke-linejoin="round" stroke-linecap="round"/><path d="M84.4 61.2L99.3 60.3" fill="none" stroke="#8c8c8c" stroke-width="1.3" stroke-linejoin="round" stroke-linecap="round"/><path d="M84.4 61.2L96.5 72.4" fill="none" stroke="#8c8c8c" stroke-width="1.3" stroke-linejoin="round" stroke-linecap="round"/><path d="M84.4 61.2L93.7 55.1" fill="none" stroke="#8c8c8c" stroke-width="1.1" stroke-linejoin="round" stroke-linecap="round"/><path d="M64.4 59.4L68.6 69.6L67.7 78.8" fill="none" stroke="#8c8c8c" stroke-width="3" stroke-linejoin="round" stroke-linecap="round"/><path d="M67.7 78.8L58.4 84.4L41.7 82.6" fill="none" stroke="#8c8c8c" stroke-width="1.6" stroke-linejoin="round" stroke-linecap="round"/><path d="M58.4 84.4L60.3 91.8" fill="none" stroke="#8c8c8c" stroke-width="1.2" stroke-linejoin="round" stroke-linecap="round"/><path d="M67.7 78.8L69.6 82.6L84.4 86.3" fill="none" stroke="#8c8c8c" stroke-width="1.4" stroke-linejoin="round" stroke-linecap="round"/><path d="M69.6 82.6L68.6 91.8" fill="none" stroke="#8c8c8c" stroke-width="1.2" stroke-linejoin="round" stroke-linecap="round"/><g fill="none" stroke="#1e9a1e" stroke-width="0.9"><ellipse cx="59" cy="25.6" rx="2.1" ry="1.3" transform="rotate(133 59 25.6)"/><ellipse cx="67.7" cy="26.5" rx="2.1" ry="1.3" transform="rotate(169 67.7 26.5)"/><ellipse cx="74.2" cy="27.8" rx="2.1" ry="1.3" transform="rotate(134 74.2 27.8)"/><ellipse cx="54.7" cy="28.8" rx="2.1" ry="1.3" transform="rotate(163 54.7 28.8)"/><ellipse cx="46.4" cy="31" rx="2.1" ry="1.3" transform="rotate(19 46.4 31)"/><ellipse cx="79.8" cy="31.5" rx="2.1" ry="1.3" transform="rotate(104 79.8 31.5)"/><ellipse cx="84.4" cy="31.2" rx="2.1" ry="1.3" transform="rotate(77 84.4 31.2)"/><ellipse cx="49.7" cy="32.5" rx="2.1" ry="1.3" transform="rotate(47 49.7 32.5)"/><ellipse cx="59.4" cy="30.6" rx="2.1" ry="1.3" transform="rotate(154 59.4 30.6)"/><ellipse cx="72.9" cy="33" rx="2.1" ry="1.3" transform="rotate(59 72.9 33)"/><ellipse cx="45.1" cy="34.7" rx="2.1" ry="1.3" transform="rotate(175 45.1 34.7)"/><ellipse cx="78.5" cy="35.3" rx="2.1" ry="1.3" transform="rotate(64 78.5 35.3)"/><ellipse cx="89.6" cy="35.3" rx="2.1" ry="1.3" transform="rotate(99 89.6 35.3)"/><ellipse cx="58.1" cy="36.5" rx="2.1" ry="1.3" transform="rotate(139 58.1 36.5)"/><ellipse cx="38.4" cy="38" rx="2.1" ry="1.3" transform="rotate(140 38.4 38)"/><ellipse cx="48.2" cy="39" rx="2.1" ry="1.3" transform="rotate(7 48.2 39)"/><ellipse cx="74.8" cy="39.3" rx="2.1" ry="1.3" transform="rotate(131 74.8 39.3)"/><ellipse cx="84" cy="39" rx="2.1" ry="1.3" transform="rotate(19 84 39)"/><ellipse cx="40.8" cy="41.4" rx="2.1" ry="1.3" transform="rotate(61 40.8 41.4)"/><ellipse cx="89.2" cy="41.4" rx="2.1" ry="1.3" transform="rotate(16 89.2 41.4)"/><ellipse cx="34" cy="45.1" rx="2.1" ry="1.3" transform="rotate(108 34 45.1)"/><ellipse cx="44.5" cy="45.8" rx="2.1" ry="1.3" transform="rotate(35 44.5 45.8)"/><ellipse cx="85.9" cy="46" rx="2.1" ry="1.3" transform="rotate(34 85.9 46)"/><ellipse cx="94.6" cy="49.5" rx="2.1" ry="1.3" transform="rotate(95 94.6 49.5)"/><ellipse cx="90" cy="52.5" rx="2.1" ry="1.3" transform="rotate(76 90 52.5)"/><ellipse cx="98.9" cy="51.9" rx="2.1" ry="1.3" transform="rotate(96 98.9 51.9)"/><ellipse cx="32.1" cy="53.2" rx="2.1" ry="1.3" transform="rotate(94 32.1 53.2)"/><ellipse cx="39.1" cy="56" rx="2.1" ry="1.3" transform="rotate(126 39.1 56)"/><ellipse cx="30.2" cy="58.1" rx="2.1" ry="1.3" transform="rotate(161 30.2 58.1)"/><ellipse cx="93.7" cy="58.4" rx="2.1" ry="1.3" transform="rotate(174 93.7 58.4)"/><ellipse cx="100.6" cy="60.7" rx="2.1" ry="1.3" transform="rotate(106 100.6 60.7)"/><ellipse cx="90.9" cy="62.2" rx="2.1" ry="1.3" transform="rotate(112 90.9 62.2)"/><ellipse cx="30.6" cy="66.8" rx="2.1" ry="1.3" transform="rotate(106 30.6 66.8)"/><ellipse cx="82.9" cy="65.9" rx="2.1" ry="1.3" transform="rotate(62 82.9 65.9)"/><ellipse cx="94.6" cy="66.2" rx="2.1" ry="1.3" transform="rotate(140 94.6 66.2)"/><ellipse cx="36.2" cy="68.1" rx="2.1" ry="1.3" transform="rotate(22 36.2 68.1)"/><ellipse cx="32.1" cy="71.1" rx="2.1" ry="1.3" transform="rotate(168 32.1 71.1)"/><ellipse cx="89.1" cy="69.6" rx="2.1" ry="1.3" transform="rotate(85 89.1 69.6)"/><ellipse cx="98.3" cy="73.3" rx="2.1" ry="1.3" transform="rotate(135 98.3 73.3)"/><ellipse cx="92.8" cy="73.7" rx="2.1" ry="1.3" transform="rotate(124 92.8 73.7)"/><ellipse cx="40.4" cy="74.8" rx="2.1" ry="1.3" transform="rotate(14 40.4 74.8)"/><ellipse cx="33.4" cy="77.4" rx="2.1" ry="1.3" transform="rotate(76 33.4 77.4)"/><ellipse cx="84" cy="77" rx="2.1" ry="1.3" transform="rotate(69 84 77)"/><ellipse cx="43.6" cy="80.3" rx="2.1" ry="1.3" transform="rotate(22 43.6 80.3)"/><ellipse cx="37.1" cy="82.2" rx="2.1" ry="1.3" transform="rotate(133 37.1 82.2)"/><ellipse cx="51.9" cy="81.6" rx="2.1" ry="1.3" transform="rotate(75 51.9 81.6)"/><ellipse cx="75.5" cy="81.6" rx="2.1" ry="1.3" transform="rotate(118 75.5 81.6)"/><ellipse cx="39.5" cy="86.3" rx="2.1" ry="1.3" transform="rotate(7 39.5 86.3)"/><ellipse cx="50.6" cy="86.6" rx="2.1" ry="1.3" transform="rotate(168 50.6 86.6)"/><ellipse cx="84" cy="84.8" rx="2.1" ry="1.3" transform="rotate(73 84 84.8)"/><ellipse cx="91.8" cy="85.7" rx="2.1" ry="1.3" transform="rotate(150 91.8 85.7)"/><ellipse cx="76.6" cy="86.6" rx="2.1" ry="1.3" transform="rotate(137 76.6 86.6)"/><ellipse cx="80.7" cy="89.6" rx="2.1" ry="1.3" transform="rotate(16 80.7 89.6)"/><ellipse cx="45.5" cy="91.8" rx="2.1" ry="1.3" transform="rotate(134 45.5 91.8)"/><ellipse cx="69.9" cy="90.9" rx="2.1" ry="1.3" transform="rotate(127 69.9 90.9)"/><ellipse cx="85.9" cy="91.8" rx="2.1" ry="1.3" transform="rotate(144 85.9 91.8)"/><ellipse cx="58.4" cy="92.8" rx="2.1" ry="1.3" transform="rotate(140 58.4 92.8)"/><ellipse cx="64.9" cy="92.4" rx="2.1" ry="1.3" transform="rotate(46 64.9 92.4)"/><ellipse cx="57.1" cy="97.4" rx="2.1" ry="1.3" transform="rotate(106 57.1 97.4)"/><ellipse cx="61.2" cy="96.1" rx="2.1" ry="1.3" transform="rotate(174 61.2 96.1)"/><ellipse cx="67.3" cy="97" rx="2.1" ry="1.3" transform="rotate(43 67.3 97)"/><ellipse cx="79.2" cy="95.9" rx="2.1" ry="1.3" transform="rotate(67 79.2 95.9)"/></g></symbol><symbol id="t59" viewBox="0 0 126 126"><path d="M102.6 62L101.6 66L100.7 69.9L100 73.9L100.9 78.8L92.5 78.9L94.9 85.3L91.3 87.7L89.9 92.6L84.8 93L82 96.9L76.9 96.1L73.7 100.9L68.3 94.5L64.5 101.6L60.4 97.2L55.4 100.1L52.8 94.1L47.9 95.1L46.3 89.8L38.8 92.9L37.3 88.1L34.2 85.2L34.9 79.8L27.7 79L30.4 73.5L27.3 70.1L29.6 65.8L25.5 62L29.8 58.2L24.1 53.2L32.5 51.3L28.5 45.3L33.2 43.1L32.9 37.8L36.9 35.5L41 33.7L46.1 33.9L47.9 28.9L52.5 29.1L55.8 25.3L60.4 26.7L64.5 23.9L68.8 25.5L72.8 27.2L77.4 26.7L81.4 28.3L82.8 34.1L90.1 31.2L88.7 38.8L93.6 39.7L95.9 43L101.1 45.1L100.9 49.8L102.3 53.7L101 58z" fill="none" stroke="#1e8c1e" stroke-width="1.3" stroke-linejoin="round"/><path d="M64.5 62L68.5 49.7L76.5 41.7M68.5 49.7L67.1 39.8M64.5 62L77.4 57.3L89.2 58.7M77.4 57.3L84.7 49.5M64.5 62L77.8 64.4L87.1 71.6M77.8 64.4L87.8 61.6M64.5 62L71.2 73L72.1 84.1M71.2 73L79.7 78.2M64.5 62L64 76.1L58 86.7M64 76.1L68.4 86M64.5 62L58.7 69.5L51.2 73M58.7 69.5L57.2 76.7M64.5 62L53.5 62.3L44.9 58.1M53.5 62.3L46 66.2M64.5 62L52.9 56L46.2 46.8M52.9 56L42.8 55.9M64.5 62L62.4 51.6L64.9 42.8M62.4 51.6L57.4 45.2" fill="none" stroke="#8c6440" stroke-width="1.8" /><path d="M64.5 62L57.9 34.4L63.7 39.3L69.2 34zM64.5 62L80.3 42L80 48.8L86.8 49.7zM64.5 62L92 51.4L87.7 58.1L94 62.9zM64.5 62L88.4 74.2L81.3 75.4L81.8 82.5zM64.5 62L77.2 84.8L70.9 81.9L67.4 87.9zM64.5 62L60.9 94.6L56.5 87L48.5 90.6zM64.5 62L42.4 76.3L44.9 69.7L38.6 66.5zM64.5 62L35.4 64.2L41.4 59.1L36.9 52.7zM64.5 62L46.8 43L53.6 44.3L55.6 37.6z" fill="none" stroke="#1e8c1e" stroke-width="1.0" /><path d="M56.7 30.1a2.3 2.3 0 1 0 4.6 0a2.3 2.3 0 1 0 -4.6 0zM49.1 34.7a2.3 2.3 0 1 0 4.6 0a2.3 2.3 0 1 0 -4.6 0zM73.4 30.6a2.3 2.3 0 1 0 4.6 0a2.3 2.3 0 1 0 -4.6 0zM79.7 35.3a2.3 2.3 0 1 0 4.6 0a2.3 2.3 0 1 0 -4.6 0zM38.9 39.5a2.3 2.3 0 1 0 4.6 0a2.3 2.3 0 1 0 -4.6 0zM44.5 45.5a2.3 2.3 0 1 0 4.6 0a2.3 2.3 0 1 0 -4.6 0zM82.5 45.5a2.3 2.3 0 1 0 4.6 0a2.3 2.3 0 1 0 -4.6 0zM91 44.5a2.3 2.3 0 1 0 4.6 0a2.3 2.3 0 1 0 -4.6 0zM35.2 49.2a2.3 2.3 0 1 0 4.6 0a2.3 2.3 0 1 0 -4.6 0zM42.2 54.4a2.3 2.3 0 1 0 4.6 0a2.3 2.3 0 1 0 -4.6 0zM87.7 55.1a2.3 2.3 0 1 0 4.6 0a2.3 2.3 0 1 0 -4.6 0zM97.9 53.8a2.3 2.3 0 1 0 4.6 0a2.3 2.3 0 1 0 -4.6 0zM31.7 58.1a2.3 2.3 0 1 0 4.6 0a2.3 2.3 0 1 0 -4.6 0zM95.1 62.2a2.3 2.3 0 1 0 4.6 0a2.3 2.3 0 1 0 -4.6 0zM35.4 66.4a2.3 2.3 0 1 0 4.6 0a2.3 2.3 0 1 0 -4.6 0zM41.3 65.9a2.3 2.3 0 1 0 4.6 0a2.3 2.3 0 1 0 -4.6 0zM32.6 72.9a2.3 2.3 0 1 0 4.6 0a2.3 2.3 0 1 0 -4.6 0zM41.9 73.3a2.3 2.3 0 1 0 4.6 0a2.3 2.3 0 1 0 -4.6 0zM38.5 78.5a2.3 2.3 0 1 0 4.6 0a2.3 2.3 0 1 0 -4.6 0zM88.6 74.6a2.3 2.3 0 1 0 4.6 0a2.3 2.3 0 1 0 -4.6 0zM95.1 75.1a2.3 2.3 0 1 0 4.6 0a2.3 2.3 0 1 0 -4.6 0zM89.2 82.6a2.3 2.3 0 1 0 4.6 0a2.3 2.3 0 1 0 -4.6 0zM41.9 86.8a2.3 2.3 0 1 0 4.6 0a2.3 2.3 0 1 0 -4.6 0zM50.6 86.3a2.3 2.3 0 1 0 4.6 0a2.3 2.3 0 1 0 -4.6 0zM71.4 86.3a2.3 2.3 0 1 0 4.6 0a2.3 2.3 0 1 0 -4.6 0zM82.7 89.6a2.3 2.3 0 1 0 4.6 0a2.3 2.3 0 1 0 -4.6 0zM76 91.3a2.3 2.3 0 1 0 4.6 0a2.3 2.3 0 1 0 -4.6 0zM52.1 94.1a2.3 2.3 0 1 0 4.6 0a2.3 2.3 0 1 0 -4.6 0zM58.9 92.8a2.3 2.3 0 1 0 4.6 0a2.3 2.3 0 1 0 -4.6 0zM66.3 94.6a2.3 2.3 0 1 0 4.6 0a2.3 2.3 0 1 0 -4.6 0z" fill="#f03cf0"/><path d="M58.2 29.3h1.6v1.6h-1.6zM50.6 33.9h1.6v1.6h-1.6zM74.9 29.8h1.6v1.6h-1.6zM81.2 34.5h1.6v1.6h-1.6zM40.4 38.7h1.6v1.6h-1.6zM46 44.7h1.6v1.6h-1.6zM84 44.7h1.6v1.6h-1.6zM92.5 43.7h1.6v1.6h-1.6zM36.7 48.4h1.6v1.6h-1.6zM43.7 53.6h1.6v1.6h-1.6zM89.2 54.3h1.6v1.6h-1.6zM99.4 53h1.6v1.6h-1.6zM33.2 57.3h1.6v1.6h-1.6zM96.6 61.4h1.6v1.6h-1.6zM36.9 65.6h1.6v1.6h-1.6zM42.8 65.1h1.6v1.6h-1.6zM34.1 72.1h1.6v1.6h-1.6zM43.4 72.5h1.6v1.6h-1.6zM40 77.7h1.6v1.6h-1.6zM90.1 73.8h1.6v1.6h-1.6zM96.6 74.3h1.6v1.6h-1.6zM90.7 81.8h1.6v1.6h-1.6zM43.4 86h1.6v1.6h-1.6zM52.1 85.5h1.6v1.6h-1.6zM72.9 85.5h1.6v1.6h-1.6zM84.2 88.8h1.6v1.6h-1.6zM77.5 90.5h1.6v1.6h-1.6zM53.6 93.3h1.6v1.6h-1.6zM60.4 92h1.6v1.6h-1.6zM67.8 93.8h1.6v1.6h-1.6z" fill="#c8503c"/></symbol><symbol id="t61" viewBox="0 0 126 126"><path d="M65 62Q82.5 74.5 103.9 64.7M65 62Q78.6 78.6 101.9 74.7M65 62Q73.9 81.5 97.3 83.8M65 62Q68.5 83.2 90.6 91.4M65 62Q62.9 83.4 82.1 97.1M65 62Q57.5 82.1 72.4 100.3M65 62Q52.5 79.5 62.3 100.9M65 62Q48.4 75.6 52.3 98.9M65 62Q45.5 70.9 43.2 94.3M65 62Q43.8 65.5 35.6 87.6M65 62Q43.6 59.9 29.9 79.1M65 62Q44.9 54.5 26.7 69.4M65 62Q47.5 49.5 26.1 59.3M65 62Q51.4 45.4 28.1 49.3M65 62Q56.1 42.5 32.7 40.2M65 62Q61.5 40.8 39.4 32.6M65 62Q67.1 40.6 47.9 26.9M65 62Q72.5 41.9 57.6 23.7M65 62Q77.5 44.5 67.7 23.1M65 62Q81.6 48.4 77.7 25.1M65 62Q84.5 53.1 86.8 29.7M65 62Q86.2 58.5 94.4 36.4M65 62Q86.4 64.1 100.1 44.9M65 62Q85.1 69.5 103.3 54.6" fill="none" stroke="#0f3208" stroke-width="1.2" /><path d="M65 62Q83.3 73.2 104 62M65 62Q79.8 77.6 102.7 72.1M65 62Q75.2 80.9 98.8 81.5M65 62Q70 82.9 92.6 89.6M65 62Q64.4 83.4 84.5 95.8M65 62Q58.9 82.6 75.1 99.7M65 62Q53.8 80.3 65 101M65 62Q49.4 76.8 54.9 99.7M65 62Q46.1 72.2 45.5 95.8M65 62Q44.1 67 37.4 89.6M65 62Q43.6 61.4 31.2 81.5M65 62Q44.4 55.9 27.3 72.1M65 62Q46.7 50.8 26 62M65 62Q50.2 46.4 27.3 51.9M65 62Q54.8 43.1 31.2 42.5M65 62Q60 41.1 37.4 34.4M65 62Q65.6 40.6 45.5 28.2M65 62Q71.1 41.4 54.9 24.3M65 62Q76.2 43.7 65 23M65 62Q80.6 47.2 75.1 24.3M65 62Q83.9 51.8 84.5 28.2M65 62Q85.9 57 92.6 34.4M65 62Q86.4 62.6 98.8 42.5M65 62Q85.6 68.1 102.7 51.9" fill="none" stroke="#a08c5a" stroke-width="1.0" /><path d="M60 28l4 5l3-3l4 2l3-5l5 1l-6 14l-5 12l-3-8l-2-10zM31 45l2 12l6 4l10 2l12 4l-14-8l-8-6zM38 87l12-3l8-6l6-10l-8 8l-10 4l-6 4l-2 3l12 8l4-6zM72 64l14 2l8 4l6 6l-4 10l-6-8l-8-6z" fill="none" stroke="#1e9a1e" stroke-width="1.25" /><path d="M64 33l2 8l-2 9M40 52l10 4l8 5M46 86l8-6l6-9M78 68l9 5l6 8" fill="none" stroke="#1e9a1e" stroke-width="1.1" /></symbol><symbol id="t57" viewBox="0 0 126 126"><path d="M99.9 63L101.5 67.8L98.6 72L98.8 77L98.1 82.1L93.4 84.8L92 90L87.5 92.3L83.9 95.8L78.3 95.1L74.7 99.1L69.8 99.2L65 99.9L60.3 98.8L55.1 99.9L50.8 97.2L46.3 95.3L42.4 92.5L39.1 88.9L35.1 85.9L33 81.5L31.1 77.1L31 72.1L28.6 67.8L29.7 63L28.5 58.2L30 53.6L30.4 48.7L33.1 44.6L36.4 41.1L39.1 37.1L43.4 34.8L45.9 29.9L50.5 28.1L55.7 28.1L60.4 27.8L65 26.7L69.8 26.3L74.4 27.9L79.6 27.8L82.4 32.8L86.9 34.5L90.9 37.1L92.7 41.8L96.5 44.8L99 48.9L99.6 53.7L103 58z" fill="none" stroke="#fff" stroke-width="1.5" /><path d="M97.8 63L97.5 68.1L97.3 73.5L93.9 77.7L92 82.6L87.6 85.6L83.5 88.5L80.6 93.6L75.1 93.9L70 94.6L65 95.4L59.8 95.7L55.1 93.4L49.4 93.6L44.7 90.9L39.8 88.2L39.5 81.5L35.9 77.8L32.4 73.6L30.4 68.5L32.6 63L30.3 57.5L35.1 53.3L35 47.7L39.6 44.5L42.4 40.4L44.8 35.1L49.9 33.4L54.1 29.4L59.5 28L65 29.7L70.3 29.8L75.2 31.6L79.5 34.5L84.5 36.2L89.6 38.4L91.8 43.5L96 47.2L95.3 53.1L96.4 58z" fill="none" stroke="#fff" stroke-width="1.1" stroke-dasharray="9 4"/><path d="M96.8 59L102.5 61.4M68.4 94.8L66 100.5M84.9 88L86 94.1M89.1 42L95.2 40.7M66 31L69.2 25.7M88.5 41.3L94.5 39.8M86.1 38.9L91.9 36.8M88.1 85.1L90 91M36.4 48.6L33 43.5M45.1 38L44.1 31.9M62 94.9L58.5 99.9M39.7 43.4L37.3 37.8M45.6 88.4L39.9 90.9M51.5 92L46.5 95.6M39.7 82.6L33.6 83.5M34.8 52.3L30.8 47.7M77.9 92.3L77.4 98.4M62.5 31.1L65.1 25.5M43.2 86.5L37.4 88.4M39.4 82.2L33.3 83M37.3 79.1L31.2 79.2M35.7 50.1L32 45.2M96.2 55.8L102.1 57.5M89.2 42L95.2 40.7M33.2 59.2L28.2 55.6M88 85.2L89.8 91.1M93.6 77.4L97 82.5M83.5 36.9L89.1 34.2M96.9 64.9L102.1 68.2M61 94.7L57.3 99.7" fill="none" stroke="#fff" stroke-width="1.1" /><path d="M64.4 64L56.6 58.4L51 51L45.5 35.3" fill="none" stroke="#fff" stroke-width="3" stroke-linejoin="round" stroke-linecap="round"/><path d="M51 51L56.6 39.9L56.6 30.6" fill="none" stroke="#fff" stroke-width="1.6" stroke-linejoin="round" stroke-linecap="round"/><path d="M45.5 35.3L51 28.8" fill="none" stroke="#fff" stroke-width="1.6" stroke-linejoin="round" stroke-linecap="round"/><path d="M51 51L39.9 42.7L35.3 40.8" fill="none" stroke="#fff" stroke-width="2" stroke-linejoin="round" stroke-linecap="round"/><path d="M64.4 64L77 57.5L91.8 51.9" fill="none" stroke="#fff" stroke-width="3.4" stroke-linejoin="round" stroke-linecap="round"/><path d="M82.6 54.7L84.4 41.7L88.1 35.3" fill="none" stroke="#fff" stroke-width="2" stroke-linejoin="round" stroke-linecap="round"/><path d="M77 58.4L91.8 64" fill="none" stroke="#fff" stroke-width="1.3" stroke-linejoin="round" stroke-linecap="round"/><path d="M64.4 64L58.4 73.3L52.9 77" fill="none" stroke="#fff" stroke-width="4.5" stroke-linejoin="round" stroke-linecap="round"/><path d="M52.9 77L31.5 70.5" fill="none" stroke="#fff" stroke-width="1.2" stroke-linejoin="round" stroke-linecap="round"/><path d="M51 56.6L32.5 56.6" fill="none" stroke="#fff" stroke-width="1.2" stroke-linejoin="round" stroke-linecap="round"/><path d="M32.5 56.6L29.7 65.9" fill="none" stroke="#fff" stroke-width="1.4" stroke-linejoin="round" stroke-linecap="round"/><path d="M35.3 40.8L30.6 49.2L32.5 56.6" fill="none" stroke="#fff" stroke-width="1.4" stroke-linejoin="round" stroke-linecap="round"/><path d="M54.7 76.1L58.4 84.4L56.6 93.7" fill="none" stroke="#fff" stroke-width="3" stroke-linejoin="round" stroke-linecap="round"/><path d="M58.4 84.4L65.9 91.8" fill="none" stroke="#fff" stroke-width="1.6" stroke-linejoin="round" stroke-linecap="round"/><path d="M52.9 77L45.5 88.1L40.8 90.9" fill="none" stroke="#fff" stroke-width="1.5" stroke-linejoin="round" stroke-linecap="round"/><path d="M31.5 70.5L32.5 77.9L45.5 88.1" fill="none" stroke="#fff" stroke-width="1.3" stroke-linejoin="round" stroke-linecap="round"/><path d="M32.5 77.9L47.3 79.8" fill="none" stroke="#fff" stroke-width="1" stroke-linejoin="round" stroke-linecap="round"/><path d="M56.6 59.4L75.1 63.1" fill="none" stroke="#fff" stroke-width="5" stroke-linejoin="round" stroke-linecap="round"/><path d="M57 57l6 5l10 1M62 61l10 3M55 75l12-4" fill="none" stroke="#b4783c" stroke-width="1.6" /><path d="M90.2 73.9l1.7 -1.7l1.7 1.7l-1.7 1.7zM55.7 97.1l1.8 -1.8l1.8 1.8l-1.8 1.8zM76.5 95.3l1.2 -1.2l1.2 1.2l-1.2 1.2zM70.2 27.9l1.8 -1.8l1.8 1.8l-1.8 1.8zM63.9 98.6l1.4 -1.4l1.4 1.4l-1.4 1.4zM68.9 29.4l1.2 -1.2l1.2 1.2l-1.2 1.2zM81.6 89l1.8 -1.8l1.8 1.8l-1.8 1.8zM74.4 98.8l1.6 -1.6l1.6 1.6l-1.6 1.6zM93.1 71.2l1.4 -1.4l1.4 1.4l-1.4 1.4zM72.8 26.4l1.3 -1.3l1.3 1.3l-1.3 1.3zM71.6 91l1.6 -1.6l1.6 1.6l-1.6 1.6zM88.4 37l1.3 -1.3l1.3 1.3l-1.3 1.3zM72.5 98l1.6 -1.6l1.6 1.6l-1.6 1.6zM92.3 78.6l1.8 -1.8l1.8 1.8l-1.8 1.8zM100.1 68.5l1.3 -1.3l1.3 1.3l-1.3 1.3zM80.3 33l1.4 -1.4l1.4 1.4l-1.4 1.4zM87.7 38.7l2 -2l2 2l-2 2zM80.8 36.8l1.4 -1.4l1.4 1.4l-1.4 1.4zM97.3 55.3l1.6 -1.6l1.6 1.6l-1.6 1.6zM92.7 39.7l1.3 -1.3l1.3 1.3l-1.3 1.3zM98.2 51.3l1.8 -1.8l1.8 1.8l-1.8 1.8zM79.1 89.9l1.4 -1.4l1.4 1.4l-1.4 1.4zM79.6 90.3l1.4 -1.4l1.4 1.4l-1.4 1.4zM93.5 77.6l1.5 -1.5l1.5 1.5l-1.5 1.5zM57.7 94.2l2 -2l2 2l-2 2zM92.2 57.6l1.5 -1.5l1.5 1.5l-1.5 1.5zM88.9 47.1l1.5 -1.5l1.5 1.5l-1.5 1.5zM94.5 62.3l1.8 -1.8l1.8 1.8l-1.8 1.8zM47.3 88l1.3 -1.3l1.3 1.3l-1.3 1.3zM99 53.5l1.5 -1.5l1.5 1.5l-1.5 1.5zM74.4 92.8l1.4 -1.4l1.4 1.4l-1.4 1.4zM72.9 34.5l1.6 -1.6l1.6 1.6l-1.6 1.6zM81.7 93.4l1.3 -1.3l1.3 1.3l-1.3 1.3zM91.5 41.6l1.9 -1.9l1.9 1.9l-1.9 1.9zM84.3 85.7l1.8 -1.8l1.8 1.8l-1.8 1.8zM51.1 89.7l1.7 -1.7l1.7 1.7l-1.7 1.7zM86.9 35.7l1.8 -1.8l1.8 1.8l-1.8 1.8zM90.1 87.8l1.7 -1.7l1.7 1.7l-1.7 1.7zM47.2 92.5l1.3 -1.3l1.3 1.3l-1.3 1.3zM93.5 56.4l1.8 -1.8l1.8 1.8l-1.8 1.8zM82.2 36.3l1.2 -1.2l1.2 1.2l-1.2 1.2zM45.7 92.9l1.8 -1.8l1.8 1.8l-1.8 1.8zM78 95l1.2 -1.2l1.2 1.2l-1.2 1.2zM87.6 43.3l1.8 -1.8l1.8 1.8l-1.8 1.8zM83.1 38.8l1.4 -1.4l1.4 1.4l-1.4 1.4zM93.5 68.8l1.5 -1.5l1.5 1.5l-1.5 1.5zM50.3 96.1l1.3 -1.3l1.3 1.3l-1.3 1.3zM67.4 97.9l1.8 -1.8l1.8 1.8l-1.8 1.8zM96.5 47.9l1.9 -1.9l1.9 1.9l-1.9 1.9zM95.7 58.8l1.5 -1.5l1.5 1.5l-1.5 1.5zM54.8 93l1.2 -1.2l1.2 1.2l-1.2 1.2zM75.4 35.1l1.2 -1.2l1.2 1.2l-1.2 1.2zM79.4 33.1l1.3 -1.3l1.3 1.3l-1.3 1.3zM55.9 96.2l1.5 -1.5l1.5 1.5l-1.5 1.5zM92.7 75l1.8 -1.8l1.8 1.8l-1.8 1.8zM61.2 95.7l1.9 -1.9l1.9 1.9l-1.9 1.9zM66 98.5l1.9 -1.9l1.9 1.9l-1.9 1.9zM81.1 87l1.9 -1.9l1.9 1.9l-1.9 1.9zM63.5 93.5l1.6 -1.6l1.6 1.6l-1.6 1.6zM98 76.3l1.3 -1.3l1.3 1.3l-1.3 1.3zM77.5 91.8l2 -2l2 2l-2 2zM83 38.4l1.9 -1.9l1.9 1.9l-1.9 1.9zM76.5 33.9l1.9 -1.9l1.9 1.9l-1.9 1.9zM86.2 32.5l1.3 -1.3l1.3 1.3l-1.3 1.3zM91.1 81.4l2 -2l2 2l-2 2zM96.3 62l1.7 -1.7l1.7 1.7l-1.7 1.7zM94.4 70.3l1.8 -1.8l1.8 1.8l-1.8 1.8zM83.9 37.9l1.6 -1.6l1.6 1.6l-1.6 1.6zM90.6 45.5l1.4 -1.4l1.4 1.4l-1.4 1.4zM55.5 90.8l1.3 -1.3l1.3 1.3l-1.3 1.3z" fill="none" stroke="#46551a" stroke-width="1.2" /><path d="M74.3 84.1l2.2 2.5l1.8 -1.7M79.1 88.2l1.3 2.1l-0.4 0.8M78.9 86.4l-2.3 -1.3l-1.6 0.4M74.5 87l1.3 -0.2l-1.9 0.8M79.8 86.1l1.6 0.9l1.1 -0.8M78.8 85.8l-0.1 -1.7l1.3 0M77.1 86.9l-2.5 -0.1l-1.7 -0.3M75.8 86.4l-1.2 -0.4l1.7 1.2M78 86.5l-0.4 -1.3l-1.9 -0M79.7 39.5l-1.9 -1.6l-1.1 0.6M79.9 36.7l-1.1 -0.5l1.5 1.2M74.9 39.1l-1 2.1l1.4 2M73.6 35.5l0.8 -1.1l-1.7 -0.8M78.9 38.9l0.8 -0.2l1.3 0.4M92.8 47.8l-2 -0.1l1.9 1.7M91.8 46.3l-2.1 -0.5l0.2 -0.8M89.2 47.1l-2.1 -1.3l-1 1.6M89.1 49.6l0.5 -0.8l-1.6 1.5M95.7 62.8l-1.4 0.8l-1.3 -1.7M99.5 63.4l-1.7 -0.3l1.4 1M92.2 61.1l1.2 -1.9l1.8 1.4M96.7 62.2l-1.4 -0.8l0.5 -1M93.4 71.4l-2.1 -1.5l-0.3 -0.2M95.2 71.8l0.6 2l0.1 -1.7M96.3 72.1l-0.9 1.6l0.8 -0.8M91.4 72l2.1 -1.6l1.2 1.6M95.7 70.6l2.2 -0.8l0.9 0.9M96.5 72.6l-1.2 0.5l-1.5 0.1M91.6 81.6l1.8 -2.1l1.9 -1.1M92.6 80.2l0.1 1.1l1.8 -1.1M94.6 81.5l-0.2 1.5l1.1 0.8M94.3 83.6l-1.6 2.3l0.2 -0.8" fill="none" stroke="#3cb41e" stroke-width="1.4" /></symbol><symbol id="t71" viewBox="0 0 126 126"><path d="M65.5 60.7L56.6 58.4L46.4 59.9" fill="none" stroke="#8c8c8c" stroke-width="2.6" stroke-linejoin="round" stroke-linecap="round"/><path d="M51 57.5L54.7 50.1L57.5 35.3" fill="none" stroke="#8c8c8c" stroke-width="1.5" stroke-linejoin="round" stroke-linecap="round"/><path d="M46.4 59.9L38 63.1" fill="none" stroke="#8c8c8c" stroke-width="1.3" stroke-linejoin="round" stroke-linecap="round"/><path d="M65.5 60.7L71.4 55.7L77 49.2" fill="none" stroke="#8c8c8c" stroke-width="3" stroke-linejoin="round" stroke-linecap="round"/><path d="M77 49.2L86.3 45.5" fill="none" stroke="#8c8c8c" stroke-width="1.2" stroke-linejoin="round" stroke-linecap="round"/><path d="M75.1 56.6L92.8 70.5" fill="none" stroke="#8c8c8c" stroke-width="1.3" stroke-linejoin="round" stroke-linecap="round"/><path d="M82.6 51L91.8 55.7" fill="none" stroke="#8c8c8c" stroke-width="1" stroke-linejoin="round" stroke-linecap="round"/><path d="M65.5 60.7L69.6 69.6L68.6 79.8" fill="none" stroke="#8c8c8c" stroke-width="3" stroke-linejoin="round" stroke-linecap="round"/><path d="M68.6 79.8L58.4 86.3L51 87.6" fill="none" stroke="#8c8c8c" stroke-width="1.4" stroke-linejoin="round" stroke-linecap="round"/><path d="M68.6 79.8L69.6 91.8" fill="none" stroke="#8c8c8c" stroke-width="1.2" stroke-linejoin="round" stroke-linecap="round"/><path d="M60.3 84.4L56.6 96.5" fill="none" stroke="#8c8c8c" stroke-width="1" stroke-linejoin="round" stroke-linecap="round"/><path d="M66.1 31Q64.1 33.8 67.5 35.2Q70.9 36.7 66.8 38.2Q62.8 39.7 63 42.8Q63.3 45.8 59 44.3Q54.8 42.8 51.9 46.1Q48.9 49.5 47.8 46.5Q46.7 43.5 42.7 44.1Q38.7 44.7 40.2 42.1Q41.7 39.5 39.2 37.9Q36.6 36.4 40.2 34.9Q43.7 33.4 43.7 30.5Q43.6 27.6 47.5 28.6Q51.5 29.6 54.5 26.8Q57.5 23.9 58.3 27.1Q59.1 30.3 63.6 29.3Q68.1 28.3 66.1 31zM96 43.2Q95.9 49.4 100 53.8Q104.1 58.1 101.3 60.7Q98.4 63.3 100.5 70.1Q102.6 77 97.9 73.9Q93.3 70.8 91.9 75.3Q90.5 79.8 87.6 73Q84.7 66.1 80.7 67.7Q76.6 69.3 77.4 62.9Q78.2 56.5 72.5 52.2Q66.9 47.9 71.3 46.2Q75.7 44.5 73.2 37.6Q70.8 30.8 75 33.1Q79.2 35.5 80.6 30.9Q82 26.3 84.9 33.1Q87.9 39.9 92 38.4Q96 37 96 43.2zM45.6 61.7Q43.4 65.2 44.4 68.8Q45.3 72.5 42.8 72.9Q40.3 73.4 39.5 78Q38.6 82.6 36.8 79.8Q35 77 32.7 79.1Q30.4 81.2 30.5 76.8Q30.6 72.3 28.1 71.4Q25.5 70.5 27.7 67Q30 63.6 28.5 59.6Q27.1 55.6 30.1 56Q33.2 56.4 33.8 51.4Q34.5 46.4 36.3 49.1Q38.1 51.8 40.4 49.6Q42.8 47.4 42.7 51.9Q42.6 56.3 45.2 57.2Q47.8 58.1 45.6 61.7zM85.2 88.2Q80.8 89.9 85.1 92.1Q89.4 94.3 83 94.5Q76.6 94.6 75.6 97.2Q74.5 99.8 68.9 97.5Q63.3 95.2 57.6 96.9Q51.9 98.5 51.9 95.6Q51.9 92.8 43.7 92.4Q35.5 91.9 40.1 90Q44.7 88.1 41.5 86Q38.3 83.9 45 83.9Q51.7 83.9 52.2 81.1Q52.8 78.3 58.4 80.5Q64 82.7 69.6 81.2Q75.2 79.7 75.8 82.4Q76.5 85 83 85.7Q89.6 86.4 85.2 88.2z" fill="none" stroke="#1e8c1e" stroke-width="4.6" stroke-linejoin="round"/><path d="M66.1 31Q64.1 33.8 67.5 35.2Q70.9 36.7 66.8 38.2Q62.8 39.7 63 42.8Q63.3 45.8 59 44.3Q54.8 42.8 51.9 46.1Q48.9 49.5 47.8 46.5Q46.7 43.5 42.7 44.1Q38.7 44.7 40.2 42.1Q41.7 39.5 39.2 37.9Q36.6 36.4 40.2 34.9Q43.7 33.4 43.7 30.5Q43.6 27.6 47.5 28.6Q51.5 29.6 54.5 26.8Q57.5 23.9 58.3 27.1Q59.1 30.3 63.6 29.3Q68.1 28.3 66.1 31zM96 43.2Q95.9 49.4 100 53.8Q104.1 58.1 101.3 60.7Q98.4 63.3 100.5 70.1Q102.6 77 97.9 73.9Q93.3 70.8 91.9 75.3Q90.5 79.8 87.6 73Q84.7 66.1 80.7 67.7Q76.6 69.3 77.4 62.9Q78.2 56.5 72.5 52.2Q66.9 47.9 71.3 46.2Q75.7 44.5 73.2 37.6Q70.8 30.8 75 33.1Q79.2 35.5 80.6 30.9Q82 26.3 84.9 33.1Q87.9 39.9 92 38.4Q96 37 96 43.2zM45.6 61.7Q43.4 65.2 44.4 68.8Q45.3 72.5 42.8 72.9Q40.3 73.4 39.5 78Q38.6 82.6 36.8 79.8Q35 77 32.7 79.1Q30.4 81.2 30.5 76.8Q30.6 72.3 28.1 71.4Q25.5 70.5 27.7 67Q30 63.6 28.5 59.6Q27.1 55.6 30.1 56Q33.2 56.4 33.8 51.4Q34.5 46.4 36.3 49.1Q38.1 51.8 40.4 49.6Q42.8 47.4 42.7 51.9Q42.6 56.3 45.2 57.2Q47.8 58.1 45.6 61.7zM85.2 88.2Q80.8 89.9 85.1 92.1Q89.4 94.3 83 94.5Q76.6 94.6 75.6 97.2Q74.5 99.8 68.9 97.5Q63.3 95.2 57.6 96.9Q51.9 98.5 51.9 95.6Q51.9 92.8 43.7 92.4Q35.5 91.9 40.1 90Q44.7 88.1 41.5 86Q38.3 83.9 45 83.9Q51.7 83.9 52.2 81.1Q52.8 78.3 58.4 80.5Q64 82.7 69.6 81.2Q75.2 79.7 75.8 82.4Q76.5 85 83 85.7Q89.6 86.4 85.2 88.2z" fill="none" stroke="#0a3c0a" stroke-width="0.9" /><path d="M62.2 32.7Q60.9 34.6 63.2 35.6Q65.6 36.7 62.8 37.7Q59.9 38.8 60.1 40.9Q60.3 43 57.3 42Q54.4 40.9 52.3 43.3Q50.2 45.6 49.4 43.5Q48.7 41.4 45.9 41.8Q43.1 42.2 44.1 40.4Q45.2 38.6 43.4 37.5Q41.6 36.4 44.1 35.4Q46.6 34.3 46.5 32.3Q46.5 30.3 49.3 31Q52 31.7 54.1 29.7Q56.2 27.7 56.8 29.9Q57.3 32.2 60.5 31.5Q63.6 30.7 62.2 32.7zM93.1 46.2Q93 50.5 95.9 53.6Q98.8 56.7 96.8 58.5Q94.8 60.3 96.2 65.1Q97.7 69.9 94.4 67.7Q91.2 65.6 90.2 68.7Q89.2 71.8 87.2 67.1Q85.2 62.3 82.3 63.4Q79.5 64.5 80.1 60Q80.6 55.5 76.7 52.5Q72.7 49.5 75.8 48.3Q78.9 47.1 77.2 42.3Q75.4 37.5 78.4 39.2Q81.3 40.8 82.3 37.6Q83.3 34.4 85.3 39.1Q87.4 43.9 90.3 42.9Q93.1 41.9 93.1 46.2zM42.9 62.5Q41.4 65 42 67.5Q42.7 70 40.9 70.4Q39.2 70.7 38.6 73.9Q38 77.1 36.7 75.2Q35.5 73.2 33.8 74.7Q32.2 76.2 32.3 73.1Q32.4 69.9 30.6 69.3Q28.8 68.7 30.4 66.2Q31.9 63.8 30.9 61Q29.9 58.3 32.1 58.5Q34.2 58.8 34.7 55.3Q35.1 51.8 36.4 53.7Q37.6 55.6 39.3 54Q40.9 52.5 40.8 55.6Q40.8 58.7 42.6 59.4Q44.4 60 42.9 62.5zM78.7 88.4Q75.7 89.7 78.7 91.2Q81.7 92.8 77.2 92.9Q72.7 93 72 94.8Q71.3 96.6 67.3 95Q63.4 93.4 59.4 94.5Q55.4 95.7 55.4 93.7Q55.4 91.6 49.7 91.4Q43.9 91.1 47.2 89.7Q50.4 88.4 48.1 86.9Q45.9 85.4 50.6 85.4Q55.3 85.5 55.7 83.5Q56.1 81.6 60 83.1Q63.9 84.6 67.8 83.6Q71.7 82.5 72.2 84.4Q72.6 86.2 77.2 86.7Q81.8 87.2 78.7 88.4z" fill="none" stroke="#1e8c1e" stroke-width="2.2" stroke-linejoin="round"/><path d="M62.2 32.7Q60.9 34.6 63.2 35.6Q65.6 36.7 62.8 37.7Q59.9 38.8 60.1 40.9Q60.3 43 57.3 42Q54.4 40.9 52.3 43.3Q50.2 45.6 49.4 43.5Q48.7 41.4 45.9 41.8Q43.1 42.2 44.1 40.4Q45.2 38.6 43.4 37.5Q41.6 36.4 44.1 35.4Q46.6 34.3 46.5 32.3Q46.5 30.3 49.3 31Q52 31.7 54.1 29.7Q56.2 27.7 56.8 29.9Q57.3 32.2 60.5 31.5Q63.6 30.7 62.2 32.7zM93.1 46.2Q93 50.5 95.9 53.6Q98.8 56.7 96.8 58.5Q94.8 60.3 96.2 65.1Q97.7 69.9 94.4 67.7Q91.2 65.6 90.2 68.7Q89.2 71.8 87.2 67.1Q85.2 62.3 82.3 63.4Q79.5 64.5 80.1 60Q80.6 55.5 76.7 52.5Q72.7 49.5 75.8 48.3Q78.9 47.1 77.2 42.3Q75.4 37.5 78.4 39.2Q81.3 40.8 82.3 37.6Q83.3 34.4 85.3 39.1Q87.4 43.9 90.3 42.9Q93.1 41.9 93.1 46.2zM42.9 62.5Q41.4 65 42 67.5Q42.7 70 40.9 70.4Q39.2 70.7 38.6 73.9Q38 77.1 36.7 75.2Q35.5 73.2 33.8 74.7Q32.2 76.2 32.3 73.1Q32.4 69.9 30.6 69.3Q28.8 68.7 30.4 66.2Q31.9 63.8 30.9 61Q29.9 58.3 32.1 58.5Q34.2 58.8 34.7 55.3Q35.1 51.8 36.4 53.7Q37.6 55.6 39.3 54Q40.9 52.5 40.8 55.6Q40.8 58.7 42.6 59.4Q44.4 60 42.9 62.5zM78.7 88.4Q75.7 89.7 78.7 91.2Q81.7 92.8 77.2 92.9Q72.7 93 72 94.8Q71.3 96.6 67.3 95Q63.4 93.4 59.4 94.5Q55.4 95.7 55.4 93.7Q55.4 91.6 49.7 91.4Q43.9 91.1 47.2 89.7Q50.4 88.4 48.1 86.9Q45.9 85.4 50.6 85.4Q55.3 85.5 55.7 83.5Q56.1 81.6 60 83.1Q63.9 84.6 67.8 83.6Q71.7 82.5 72.2 84.4Q72.6 86.2 77.2 86.7Q81.8 87.2 78.7 88.4z" fill="none" stroke="#0a3c0a" stroke-width="0.6" /></symbol></defs></svg><div style="left:1.2px;top:4px;width:758.8px;height:728px;background:#f0f0f0"></div><div style="left:1.2px;top:4px;width:758.8px;height:2px;background:#f8f8f8"></div><div style="left:759.5px;top:4px;width:1.7px;height:729px;background:#000"></div><div style="left:0px;top:731.5px;width:761.2px;height:2px;background:#000"></div><div style="left:4px;top:9px;width:753px;height:32px;background:#bfcddb;border-top:1px solid #8c9199;border-left:1px solid #8c9199;box-sizing:border-box;border-right:1px solid #aab4c0"></div><svg style="left:10px;top:14px" width="24" height="24" viewBox="0 0 24 24" ><rect x="4.10" y="0.10" width="2.4" height="2.8" fill="#1a8a1a" transform="rotate(0 5.3 5)"/><rect x="4.10" y="0.10" width="2.4" height="2.8" fill="#1a8a1a" transform="rotate(45 5.3 5)"/><rect x="4.10" y="0.10" width="2.4" height="2.8" fill="#1a8a1a" transform="rotate(90 5.3 5)"/><rect x="4.10" y="0.10" width="2.4" height="2.8" fill="#1a8a1a" transform="rotate(135 5.3 5)"/><rect x="4.10" y="0.10" width="2.4" height="2.8" fill="#1a8a1a" transform="rotate(180 5.3 5)"/><rect x="4.10" y="0.10" width="2.4" height="2.8" fill="#1a8a1a" transform="rotate(225 5.3 5)"/><rect x="4.10" y="0.10" width="2.4" height="2.8" fill="#1a8a1a" transform="rotate(270 5.3 5)"/><rect x="4.10" y="0.10" width="2.4" height="2.8" fill="#1a8a1a" transform="rotate(315 5.3 5)"/><circle cx="5.3" cy="5" r="3.6" fill="#1a8a1a"/><rect x="18.10" y="-0.50" width="2.4" height="2.8" fill="#2a9a2a" transform="rotate(0 19.3 3.8)"/><rect x="18.10" y="-0.50" width="2.4" height="2.8" fill="#2a9a2a" transform="rotate(45 19.3 3.8)"/><rect x="18.10" y="-0.50" width="2.4" height="2.8" fill="#2a9a2a" transform="rotate(90 19.3 3.8)"/><rect x="18.10" y="-0.50" width="2.4" height="2.8" fill="#2a9a2a" transform="rotate(135 19.3 3.8)"/><rect x="18.10" y="-0.50" width="2.4" height="2.8" fill="#2a9a2a" transform="rotate(180 19.3 3.8)"/><rect x="18.10" y="-0.50" width="2.4" height="2.8" fill="#2a9a2a" transform="rotate(225 19.3 3.8)"/><rect x="18.10" y="-0.50" width="2.4" height="2.8" fill="#2a9a2a" transform="rotate(270 19.3 3.8)"/><rect x="18.10" y="-0.50" width="2.4" height="2.8" fill="#2a9a2a" transform="rotate(315 19.3 3.8)"/><circle cx="19.3" cy="3.8" r="3" fill="#2a9a2a"/><circle cx="19.3" cy="3.8" r="1.35" fill="#bfcddb"/><rect x="4.10" y="13.60" width="2.4" height="2.8" fill="#2a9a2a" transform="rotate(0 5.3 18.7)"/><rect x="4.10" y="13.60" width="2.4" height="2.8" fill="#2a9a2a" transform="rotate(45 5.3 18.7)"/><rect x="4.10" y="13.60" width="2.4" height="2.8" fill="#2a9a2a" transform="rotate(90 5.3 18.7)"/><rect x="4.10" y="13.60" width="2.4" height="2.8" fill="#2a9a2a" transform="rotate(135 5.3 18.7)"/><rect x="4.10" y="13.60" width="2.4" height="2.8" fill="#2a9a2a" transform="rotate(180 5.3 18.7)"/><rect x="4.10" y="13.60" width="2.4" height="2.8" fill="#2a9a2a" transform="rotate(225 5.3 18.7)"/><rect x="4.10" y="13.60" width="2.4" height="2.8" fill="#2a9a2a" transform="rotate(270 5.3 18.7)"/><rect x="4.10" y="13.60" width="2.4" height="2.8" fill="#2a9a2a" transform="rotate(315 5.3 18.7)"/><circle cx="5.3" cy="18.7" r="3.8" fill="#2a9a2a"/><circle cx="5.3" cy="18.7" r="1.71" fill="#bfcddb"/><rect x="11" y="9.300" width="11.500" height="11" rx="3" fill="#7a7a7a"/><rect x="13" y="10" width="7.500" height="8" rx="2" fill="#e8e8e8"/><rect x="15.800" y="12" width="2" height="3.500" fill="#f4d8c8"/><rect x="13.500" y="13" width="2" height="1.600" fill="#555"/><rect x="18" y="13" width="2" height="1.600" fill="#555"/><rect x="13.500" y="16.500" width="6.500" height="2.500" fill="#999"/><path d="M10 24l2.500-4h8.500l2.500 4z" fill="#555"/><path d="M11.500 24l1.500-2h3v2zM18 22h2.500l1.500 2h-4z" fill="#8ad0f0"/></svg><span style="left:38.3px;top:17px;font-family:'Liberation Sans',sans-serif;font-size:18px;letter-spacing:-0.3px;line-height:21px;color:#000">Detailmanager</span><svg style="left:713px;top:16.5px" width="11" height="16" viewBox="0 0 11 16" ><path d="M2.500 0.700h5.500v9h-5.500z" fill="none" stroke="#000" stroke-width="1.400"/><path d="M7.300 0.700v9" stroke="#000" stroke-width="2"/><path d="M0 10h11" stroke="#000" stroke-width="1.600"/><path d="M5.400 10v5.200" stroke="#000" stroke-width="1.500"/></svg><svg style="left:738.3px;top:19px" width="10.6" height="10.6" viewBox="0 0 10.6 10.6" ><path d="M0.700 0.700l9.2 9.2M9.9 0.700l-9.2 9.2" stroke="#000" stroke-width="1.8" fill="none"/></svg><div style="left:4px;top:45px;width:752px;height:65.5px;background:linear-gradient(90deg,#f1f1f1,#f5f5f5 40%,#fdfdfd)"></div><span style="left:25.5px;top:53.5px;font-family:'Liberation Sans',sans-serif;font-size:17.200px;letter-spacing:-0.15px;line-height:20px;color:#000;transform:scaleY(1.09);transform-origin:0 16px">Detail</span><span style="left:94.3px;top:53.5px;font-family:'Liberation Sans',sans-serif;font-size:17.200px;letter-spacing:-0.25px;line-height:20px;color:#000;transform:scaleY(1.09);transform-origin:0 16px">Bearbeiten</span><span style="left:201px;top:53.5px;font-family:'Liberation Sans',sans-serif;font-size:17.200px;letter-spacing:0.1px;line-height:20px;color:#000;transform:scaleY(1.09);transform-origin:0 16px">Ansicht</span><span style="left:283.3px;top:53.5px;font-family:'Liberation Sans',sans-serif;font-size:17.200px;letter-spacing:0px;line-height:20px;color:#000;transform:scaleY(1.09);transform-origin:0 16px">Hilfe</span><div style="left:5px;top:80px;width:197px;height:29px;background:linear-gradient(#f7f7f7,#f3f3f3);border-radius:4px 3px 3px 4px;box-shadow:1px 0 0 #dcdcdc"></div><div style="left:203px;top:80px;width:281.5px;height:29px;background:linear-gradient(#f7f7f7,#f3f3f3);border-radius:4px 3px 3px 4px;box-shadow:1px 0 0 #dcdcdc"></div><div style="left:485.5px;top:80px;width:94.5px;height:29px;background:linear-gradient(#f7f7f7,#f3f3f3);border-radius:4px 3px 3px 4px;box-shadow:1px 0 0 #dcdcdc"></div><div style="left:581px;top:80px;width:39px;height:29px;background:linear-gradient(#f7f7f7,#f3f3f3);border-radius:4px 3px 3px 4px;box-shadow:1px 0 0 #dcdcdc"></div><svg style="left:8px;top:84px" width="2" height="18" viewBox="0 0 2 18" ><rect x="0" y="0" width="2" height="2" fill="#b9b9b9"/><rect x="0" y="4" width="2" height="2" fill="#b9b9b9"/><rect x="0" y="8" width="2" height="2" fill="#b9b9b9"/><rect x="0" y="12" width="2" height="2" fill="#b9b9b9"/><rect x="0" y="16" width="2" height="2" fill="#b9b9b9"/></svg><svg style="left:206.5px;top:84px" width="2" height="18" viewBox="0 0 2 18" ><rect x="0" y="0" width="2" height="2" fill="#b9b9b9"/><rect x="0" y="4" width="2" height="2" fill="#b9b9b9"/><rect x="0" y="8" width="2" height="2" fill="#b9b9b9"/><rect x="0" y="12" width="2" height="2" fill="#b9b9b9"/><rect x="0" y="16" width="2" height="2" fill="#b9b9b9"/></svg><svg style="left:488.5px;top:84px" width="2" height="18" viewBox="0 0 2 18" ><rect x="0" y="0" width="2" height="2" fill="#b9b9b9"/><rect x="0" y="4" width="2" height="2" fill="#b9b9b9"/><rect x="0" y="8" width="2" height="2" fill="#b9b9b9"/><rect x="0" y="12" width="2" height="2" fill="#b9b9b9"/><rect x="0" y="16" width="2" height="2" fill="#b9b9b9"/></svg><svg style="left:584.5px;top:84px" width="2" height="18" viewBox="0 0 2 18" ><rect x="0" y="0" width="2" height="2" fill="#b9b9b9"/><rect x="0" y="4" width="2" height="2" fill="#b9b9b9"/><rect x="0" y="8" width="2" height="2" fill="#b9b9b9"/><rect x="0" y="12" width="2" height="2" fill="#b9b9b9"/><rect x="0" y="16" width="2" height="2" fill="#b9b9b9"/></svg><svg style="left:16px;top:83px" width="24" height="24" viewBox="0 0 24 24" overflow="visible"><circle cx="12" cy="12" r="10.8" fill="#2f9e38" stroke="#4a4a4a" stroke-width="2.2"/><path d="M4.5 8.5a9 9 0 0 1 15 0" fill="none" stroke="#6fd06f" stroke-width="1" opacity=".7"/><path d="M6.3 12.6l4.1 4.2l7.6-8.6" fill="none" stroke="#fff" stroke-width="3.1"/></svg><svg style="left:44px;top:83px" width="24" height="24" viewBox="0 0 24 24" overflow="visible"><rect x="2" y="1" width="2.2" height="2.2" fill="#333"/><rect x="8.5" y="0" width="2.2" height="2.2" fill="#333"/><rect x="15" y="2" width="2.2" height="2.2" fill="#333"/><rect x="21" y="0.5" width="2.2" height="2.2" fill="#333"/><rect x="21" y="8" width="2.2" height="2.2" fill="#333"/><rect x="19.5" y="14" width="2.2" height="2.2" fill="#333"/><rect x="20" y="20" width="2.2" height="2.2" fill="#333"/><rect x="13.5" y="21.5" width="2.2" height="2.2" fill="#333"/><rect x="6" y="20" width="2.2" height="2.2" fill="#333"/><rect x="0.5" y="21.5" width="2.2" height="2.2" fill="#333"/><rect x="0.5" y="14" width="2.2" height="2.2" fill="#333"/><rect x="2" y="8" width="2.2" height="2.2" fill="#333"/><circle cx="12" cy="12.5" r="6.6" fill="#2f9e38" stroke="#4a4a4a" stroke-width="1.3"/><path d="M8.3 12.6l2.7 2.8l4.8-5.6" fill="none" stroke="#fff" stroke-width="2.1"/></svg><svg style="left:78px;top:83px" width="24" height="24" viewBox="0 0 24 24" overflow="visible"><rect x="0.5" y="0.5" width="13" height="13" fill="#3a3a3a"/><rect x="2" y="2" width="4.3" height="4.3" fill="#6fb6ee"/><rect x="8" y="2" width="4.3" height="4.3" fill="#6fb6ee"/><rect x="2" y="8" width="4.3" height="4.3" fill="#6fb6ee"/><rect x="8" y="8" width="4.3" height="4.3" fill="#cfe6fa"/><path d="M14 1.5c4 .5 6 3 6.5 6.5" fill="none" stroke="#5cb85c" stroke-width="2"/><path d="M17.5 6.5l6 .3l-3.2 3.6z" fill="#3a9a3a"/><rect x="10" y="10" width="13" height="13.5" fill="#35c0f5" stroke="#d0103a" stroke-width="1.6"/><path d="M11.5 21.5l10-10v4l-7 7z" fill="#fff" opacity=".85"/></svg><svg style="left:111.5px;top:83px" width="24" height="24" viewBox="0 0 24 24" overflow="visible"><path d="M1.5 4.5l18.5 17.5" stroke="#4a4a4a" stroke-width="4.2" fill="none"/><path d="M2.5 4.7l16.5 15.7" stroke="#e4e4e4" stroke-width="1.5" fill="none"/><path d="M7 1l2.2 3.6l4-1.6l-.5 3.2l5.5-.5l4.5 2.5l-4 .8l-3.5-1l-2 2.2l-2.6-1.6l-3.8 1l1-3.3l-3.3-2.3l3-.4z" fill="#ffa51e"/><path d="M7.5 3.5l1.8 2.3l2.5-.5l-.8 2l1.6 1.3l-2.6.1l-1.5 1.5l-.4-2.3l-2-1.2l1.8-.8z" fill="#ffe326"/></svg><svg style="left:140px;top:83px" width="24" height="24" viewBox="0 0 24 24" overflow="visible"><path d="M1 18.5v-13h6l1.5-1.5h9v4h5.5l-5 10.5z" fill="#4a4a4a"/><path d="M2.2 16.5v-10h5.5l1.5-1.4h7v3z" fill="#ffe135"/><path d="M4 8.3l4-1.8l7 .6l-2 1.8z" fill="#ffa51e"/><path d="M3 17.3l4.5-7.6h14l-4.5 7.6z" fill="#fff6a8"/><path d="M6 16l3.5-5.2h7z" fill="#fffbe0"/></svg><svg style="left:174px;top:83px" width="24" height="24" viewBox="0 0 24 24" overflow="visible"><rect x="7.5" y="3.5" width="10" height="5" fill="#fff" stroke="#4a4a4a" stroke-width="1.5"/><rect x="2.3" y="8.3" width="20" height="10" rx="1.6" fill="#fff" stroke="#4a4a4a" stroke-width="1.7"/><rect x="7.3" y="15" width="10.4" height="6" fill="#fff" stroke="#4a4a4a" stroke-width="1.5"/><rect x="9" y="17.5" width="7" height="1.6" fill="#9a9a9a"/><rect x="5" y="10.5" width="1.4" height="1.4" fill="#4a4a4a"/></svg><svg style="left:215px;top:83px" width="24" height="24" viewBox="0 0 24 24" overflow="visible"><path d="M1 1h12.5l3 3h6.5v19h-22z" fill="#fff" stroke="#3a3a3a" stroke-width="1.3"/><rect x="4.3" y="6.3" width="15" height="14" fill="#a8ccf0" stroke="#3a3a3a" stroke-width="1.6"/><rect x="7" y="9" width="3.4" height="3.4" fill="#8c0a3c"/><path d="M11 19l4-6.5l4 6.5z" fill="#3a3a3a"/><path d="M5.5 19.5l4-5l3 5z" fill="#d8ecfa"/></svg><svg style="left:242.5px;top:83px" width="24" height="24" viewBox="0 0 24 24" overflow="visible"><rect x="1" y="0.8" width="20.5" height="23" fill="#fff" stroke="#2a2a2a" stroke-width="1.5"/><rect x="4" y="4" width="14.5" height="13.5" fill="#a8ccf0" stroke="#3a3a3a" stroke-width="1.5"/><circle cx="8.5" cy="8" r="2.2" fill="#e8d820" stroke="#777" stroke-width=".6"/><path d="M5 16.6v-2.6c3-2.4 9-2.4 12.700 0v2.600z" fill="#8cc820"/><path d="M5 13v-5l2-2v5.500z" fill="#fff" opacity=".7"/></svg><svg style="left:276px;top:83px" width="24" height="24" viewBox="0 0 24 24" overflow="visible"><path d="M0.5 3.5h9l2 2.500h12v15h-23z" fill="#5a5a5a"/><path d="M2 5h6.500l2 2.500h11.5v12h-20z" fill="#ffd84a"/><path d="M2.500 11h19.500v8.500h-19.500z" fill="#ffec40"/><path d="M3 5.500h6" stroke="#ffeaa0" stroke-width="1.2"/><path d="M12.500 7l1.300 3.200l3.200-1.500l-1.500 3.200l3.200 1.300l-3.200 1.300l1.500 3.200l-3.200-1.500l-1.300 3.200l-1.300-3.200l-3.200 1.500l1.500-3.200l-3.200-1.300l3.200-1.300l-1.500-3.200l3.200 1.500z" fill="#1560d8"/><circle cx="12.5" cy="13.2" r="1.300" fill="#ffec40"/></svg><svg style="left:303.5px;top:83px" width="24" height="24" viewBox="0 0 24 24" overflow="visible"><text x="-0.5" y="17" font-family="Liberation Sans, sans-serif" font-size="18.5" font-weight="bold" fill="#585858">a</text><text x="12.500" y="17" font-family="Liberation Sans, sans-serif" font-size="18.5" font-weight="bold" fill="#585858">e</text><path d="M8.500 1.500c1.500 0 2.500.5 3 1.500c.5-1 1.500-1.500 3-1.500M11.500 3v18M8.500 23.500c1.500 0 2.500-.5 3-1.500c.5 1 1.500 1.500 3 1.500" fill="none" stroke="#222" stroke-width="1.200"/><path d="M9 19h5l-2.500 3z" fill="#111"/></svg><svg style="left:331px;top:83px" width="24" height="24" viewBox="0 0 24 24" overflow="visible"><path d="M1 2.500h5l1.500 2h7.500v4.500M1 2.500v14h5" fill="none" stroke="#666" stroke-width="1" stroke-dasharray="1.600 1.400"/><path d="M7 8h6l1.500 2h8.500v13h-16z" fill="#6a6a5a"/><path d="M8 9h4.500l1.500 2h8v11h-14z" fill="#ffd76a"/><path d="M8.500 21.500l11-9.500h2v3l-7.500 6.500z" fill="#ffb84a"/><path d="M9 9.800h3.500" stroke="#fff2c0" stroke-width="1"/></svg><svg style="left:360px;top:83px" width="24" height="24" viewBox="0 0 24 24" overflow="visible"><path d="M0.500 2.500h8.500l2 3h11.500v14.500h-22z" fill="#ffd76a"/><path d="M0.500 2.500h8.500l2 3h-10.500z" fill="#ffe9a0"/><path d="M1.500 19l14-13h6.500v8l-5.500 5.500z" fill="#ffb84a"/><path d="M0.500 20h22" stroke="#8a7a4a" stroke-width="1"/><path d="M22.500 6v14" stroke="#8a7a4a" stroke-width="1"/><path d="M12 10.500l11.500 12.500M23 11l-10 13" stroke="#ff2a10" stroke-width="2.600" fill="none"/></svg><svg style="left:394px;top:83px" width="24" height="24" viewBox="0 0 24 24" overflow="visible"><circle cx="9" cy="9.500" r="7.600" fill="#b8d8f4" stroke="#4a4a4a" stroke-width="2.300"/><path d="M14.500 15.500l7 6.500" stroke="#4a4a4a" stroke-width="3.600" fill="none"/><text x="3" y="13" font-family="Liberation Sans, sans-serif" font-weight="bold" font-size="9.500" fill="#333" letter-spacing="-0.5">ABC</text></svg><svg style="left:423px;top:83px" width="24" height="24" viewBox="0 0 24 24" overflow="visible"><path d="M8.500 1.500h10l4 4v14h-14z" fill="#fff" stroke="#d8183c" stroke-width="1.600"/><path d="M11 6.500h8M11 17h10" stroke="#d8183c" stroke-width="2"/><rect x="12.500" y="8" width="7" height="7" fill="#e8506a"/><path d="M14 13.500l2-4l2 4" stroke="#fff" stroke-width="1.200" fill="none"/><rect x="0.800" y="10.500" width="10.400" height="2.600" rx="1" fill="#3a3a3a"/><rect x="4" y="9" width="4" height="2" fill="#3a3a3a"/><path d="M1.800 13.500h8.400l-.6 10h-7.200z" fill="#4a4a4a"/><path d="M4.500 15v7M7.500 15v7" stroke="#cfcfcf" stroke-width="1.200"/></svg><svg style="left:456px;top:83px" width="24" height="24" viewBox="0 0 24 24" overflow="visible"><circle cx="9.500" cy="9.500" r="7.800" fill="#a8ccf0" stroke="#4a4a4a" stroke-width="2.400"/><path d="M4.500 8l6 6" stroke="#e0f0ff" stroke-width="1.500"/><path d="M15.300 15.300l7 7" stroke="#3a3a3a" stroke-width="3.600" fill="none"/></svg><svg style="left:497.5px;top:83px" width="24" height="24" viewBox="0 0 24 24" overflow="visible"><path d="M0 4h22.500" stroke="#d81848" stroke-width="1.400"/><rect x="0.700" y="9" width="21.500" height="9.300" fill="#36c0f4" stroke="#3a3a3a" stroke-width="1.500"/><rect x="11.800" y="9.800" width="9.700" height="7.800" fill="#a8ccf0"/><path d="M11.200 9v9.300" stroke="#3a3a3a" stroke-width="1.500"/><path d="M2 17l7-7h2l-7 7zM13 17l7-7v2.500l-4.500 4.500z" fill="#fff" opacity=".85"/></svg><svg style="left:524px;top:83px" width="24" height="24" viewBox="0 0 24 24" overflow="visible"><rect x="0.300" y="0.300" width="23.400" height="23.400" rx="3" fill="#3a3a3a"/><rect x="1.800" y="1.800" width="20.400" height="20.400" rx="2" fill="#d80a3a"/><rect x="5" y="5" width="14" height="14" fill="#3a3a3a"/><rect x="6.300" y="6.300" width="11.400" height="11.400" fill="#a8ccf0"/><path d="M17.500 14.500v3h-3z" fill="#fff"/><path d="M6.500 9v-2.500h2.500z" fill="#e0f0ff"/></svg><svg style="left:555px;top:83px" width="24" height="24" viewBox="0 0 24 24" overflow="visible"><path d="M1 2.500h10l5.500 5.500v14.500h-15.500z" fill="#fff" stroke="#c8d8e8" stroke-width="1"/><path d="M11 2.500l5.500 5.500v14.500h-15.500" fill="none" stroke="#2a2a7a" stroke-width="1.300"/><path d="M11 2.500v5.500h5.500z" fill="#a8b8d8"/><path d="M5 10.500c1-3 5-3.500 7-1.500M12.500 15c-1 3-5 3.500-7 1.500" fill="none" stroke="#5aa81e" stroke-width="2"/><path d="M10.500 6.500l3.500 3.200l-4.500 1z" fill="#3a7a1e"/><path d="M7 19.500l-3.500-3.200l4.500-1z" fill="#3a7a1e"/></svg><svg style="left:595px;top:83px" width="24" height="24" viewBox="0 0 24 24" overflow="visible"><text x="1" y="22" font-family="Liberation Sans, sans-serif" font-weight="bold" font-size="28" fill="#c89a10" stroke="#c89a10" stroke-width=".8">?</text><text x="0.500" y="21.500" font-family="Liberation Sans, sans-serif" font-weight="bold" font-size="28" fill="#ffd21e">?</text></svg><div style="left:73px;top:85px;width:1px;height:21px;background:#c4c4c4"></div><div style="left:107.5px;top:85px;width:1px;height:21px;background:#c4c4c4"></div><div style="left:169.5px;top:85px;width:1px;height:21px;background:#c4c4c4"></div><div style="left:271px;top:85px;width:1px;height:21px;background:#c4c4c4"></div><div style="left:389px;top:85px;width:1px;height:21px;background:#c4c4c4"></div><div style="left:451.5px;top:85px;width:1px;height:21px;background:#c4c4c4"></div><div style="left:5px;top:111px;width:296px;height:40px;background:linear-gradient(#f8f8f8,#f1f1f1);border-radius:4px 4px 0 0"></div><svg style="left:8.5px;top:113.5px" width="2" height="32" viewBox="0 0 2 32" ><rect x="0" y="0" width="2" height="2" fill="#b9b9b9"/><rect x="0" y="4" width="2" height="2" fill="#b9b9b9"/><rect x="0" y="8" width="2" height="2" fill="#b9b9b9"/><rect x="0" y="12" width="2" height="2" fill="#b9b9b9"/><rect x="0" y="16" width="2" height="2" fill="#b9b9b9"/><rect x="0" y="20" width="2" height="2" fill="#b9b9b9"/><rect x="0" y="24" width="2" height="2" fill="#b9b9b9"/></svg><span style="left:18px;top:119.5px;font-family:'Liberation Sans',sans-serif;font-size:17.500px;letter-spacing:-0.55px;line-height:21px;color:#6a788c">Navigation</span><svg style="left:233.5px;top:126px" width="11" height="9" viewBox="0 0 11 9" ><rect x="2" y="2" width="8.500" height="6" fill="none" stroke="#aaa"/><rect x="0.500" y="0.500" width="8.500" height="6" fill="#f4f4f4" stroke="#000"/></svg><svg style="left:258px;top:124px" width="8" height="12" viewBox="0 0 8 12" ><path d="M2 0.600h3.600v4.500h-3.600z" fill="none" stroke="#000" stroke-width="1.200"/><path d="M5.200 0.600v4.500" stroke="#000" stroke-width="1.600"/><path d="M0 5.300h7.600" stroke="#000" stroke-width="1.300"/><path d="M3.700 5.300v6" stroke="#000" stroke-width="1.200"/></svg><svg style="left:281px;top:125px" width="9.4" height="9.4" viewBox="0 0 9.4 9.4" ><path d="M0.700 0.700l8.0 8.0M8.700000000000001 0.700l-8.0 8.0" stroke="#000" stroke-width="2" fill="none"/></svg><div style="left:13px;top:157.5px;width:278px;height:560.5px;background:#fff;border:1px solid #828790;overflow:hidden"><svg style="left:0;top:0" width="252" height="534.0"><path d="M11.5 0V547" stroke="#808080" stroke-width="1" stroke-dasharray="1 1" shape-rendering="crispEdges"/><path d="M38.5 23V517" stroke="#808080" stroke-width="1" stroke-dasharray="1 1" shape-rendering="crispEdges"/><path d="M65.5 47V229" stroke="#808080" stroke-width="1" stroke-dasharray="1 1" shape-rendering="crispEdges"/><path d="M65.5 335V493" stroke="#808080" stroke-width="1" stroke-dasharray="1 1" shape-rendering="crispEdges"/><path d="M18.5 12.5H26.5" stroke="#808080" stroke-width="1" stroke-dasharray="1 1" shape-rendering="crispEdges"/><path d="M45.5 36.5H53.5" stroke="#808080" stroke-width="1" stroke-dasharray="1 1" shape-rendering="crispEdges"/><path d="M65.5 60.5H80.5" stroke="#808080" stroke-width="1" stroke-dasharray="1 1" shape-rendering="crispEdges"/><path d="M65.5 84.5H80.5" stroke="#808080" stroke-width="1" stroke-dasharray="1 1" shape-rendering="crispEdges"/><path d="M65.5 108.5H80.5" stroke="#808080" stroke-width="1" stroke-dasharray="1 1" shape-rendering="crispEdges"/><path d="M65.5 132.5H80.5" stroke="#808080" stroke-width="1" stroke-dasharray="1 1" shape-rendering="crispEdges"/><path d="M65.5 156.5H80.5" stroke="#808080" stroke-width="1" stroke-dasharray="1 1" shape-rendering="crispEdges"/><path d="M65.5 180.5H80.5" stroke="#808080" stroke-width="1" stroke-dasharray="1 1" shape-rendering="crispEdges"/><path d="M65.5 204.5H80.5" stroke="#808080" stroke-width="1" stroke-dasharray="1 1" shape-rendering="crispEdges"/><path d="M65.5 228.5H80.5" stroke="#808080" stroke-width="1" stroke-dasharray="1 1" shape-rendering="crispEdges"/><path d="M45.5 252.5H53.5" stroke="#808080" stroke-width="1" stroke-dasharray="1 1" shape-rendering="crispEdges"/><path d="M38.5 276.5H53.5" stroke="#808080" stroke-width="1" stroke-dasharray="1 1" shape-rendering="crispEdges"/><path d="M38.5 300.5H53.5" stroke="#808080" stroke-width="1" stroke-dasharray="1 1" shape-rendering="crispEdges"/><path d="M45.5 324.5H53.5" stroke="#808080" stroke-width="1" stroke-dasharray="1 1" shape-rendering="crispEdges"/><path d="M65.5 348.5H80.5" stroke="#808080" stroke-width="1" stroke-dasharray="1 1" shape-rendering="crispEdges"/><path d="M65.5 372.5H80.5" stroke="#808080" stroke-width="1" stroke-dasharray="1 1" shape-rendering="crispEdges"/><path d="M72.5 396.5H80.5" stroke="#808080" stroke-width="1" stroke-dasharray="1 1" shape-rendering="crispEdges"/><path d="M65.5 420.5H80.5" stroke="#808080" stroke-width="1" stroke-dasharray="1 1" shape-rendering="crispEdges"/><path d="M65.5 444.5H80.5" stroke="#808080" stroke-width="1" stroke-dasharray="1 1" shape-rendering="crispEdges"/><path d="M65.5 468.5H80.5" stroke="#808080" stroke-width="1" stroke-dasharray="1 1" shape-rendering="crispEdges"/><path d="M65.5 492.5H80.5" stroke="#808080" stroke-width="1" stroke-dasharray="1 1" shape-rendering="crispEdges"/><path d="M45.5 516.5H53.5" stroke="#808080" stroke-width="1" stroke-dasharray="1 1" shape-rendering="crispEdges"/></svg><svg style="left:30px;top:530.5px" width="14" height="21" viewBox="0 0 14 21"><path d="M0 0h13v11.500l1 .7v5.800h-9.500v-12z" fill="url(#fg)"/><path d="M0 0l5 4.300v13.700l-1.300 3l-3.700-2.700z" fill="#fce6a2"/></svg><svg style="left:5px;top:6px" width="13" height="13"><rect x="0.500" y="0.500" width="12" height="12" rx="1.500" fill="url(#pm)" stroke="#919191"/><path d="M2.500 6.500h8" stroke="#4b63a7" stroke-width="1.100"/></svg><svg style="left:30px;top:2.5px" width="14" height="21" viewBox="0 0 14 21"><path d="M0 0h13v11.500l1 .7v5.800h-9.500v-12z" fill="url(#fg)"/><path d="M0 0l5 4.300v13.700l-1.300 3l-3.700-2.700z" fill="#fce6a2"/></svg><span class="tr" style="left:52.8px;top:2px;">Pflanzen</span><svg style="left:32px;top:30px" width="13" height="13"><rect x="0.500" y="0.500" width="12" height="12" rx="1.500" fill="url(#pm)" stroke="#919191"/><path d="M2.500 6.500h8" stroke="#4b63a7" stroke-width="1.100"/></svg><svg style="left:57px;top:26.5px" width="14" height="21" viewBox="0 0 14 21"><path d="M0 0h13v11.500l1 .7v5.800h-9.500v-12z" fill="url(#fg)"/><path d="M0 0l5 4.300v13.700l-1.300 3l-3.700-2.700z" fill="#fce6a2"/></svg><span class="tr" style="left:79.8px;top:26px;">Bäume</span><svg style="left:84px;top:50.5px" width="14" height="21" viewBox="0 0 14 21"><path d="M0 0h13v11.500l1 .7v5.800h-9.500v-12z" fill="url(#fg)"/><path d="M0 0l5 4.300v13.700l-1.300 3l-3.700-2.700z" fill="#fce6a2"/></svg><span class="tr" style="left:106.8px;top:50px;background:#ededed;">2D-Color</span><svg style="left:84px;top:74.5px" width="14" height="21" viewBox="0 0 14 21"><path d="M0 0h13v11.500l1 .7v5.800h-9.500v-12z" fill="url(#fg)"/><path d="M0 0l5 4.300v13.700l-1.300 3l-3.700-2.700z" fill="#fce6a2"/></svg><span class="tr" style="left:106.8px;top:74px;">2D-Monochrom</span><svg style="left:84px;top:98.5px" width="14" height="21" viewBox="0 0 14 21"><path d="M0 0h13v11.500l1 .7v5.800h-9.500v-12z" fill="url(#fg)"/><path d="M0 0l5 4.300v13.700l-1.300 3l-3.700-2.700z" fill="#fce6a2"/></svg><span class="tr" style="left:106.8px;top:98px;">2D-Raster</span><svg style="left:84px;top:122.5px" width="14" height="21" viewBox="0 0 14 21"><path d="M0 0h13v11.500l1 .7v5.800h-9.500v-12z" fill="url(#fg)"/><path d="M0 0l5 4.300v13.700l-1.300 3l-3.700-2.700z" fill="#fce6a2"/></svg><span class="tr" style="left:106.8px;top:122px;">3D</span><svg style="left:84px;top:146.5px" width="14" height="21" viewBox="0 0 14 21"><path d="M0 0h13v11.500l1 .7v5.800h-9.500v-12z" fill="url(#fg)"/><path d="M0 0l5 4.300v13.700l-1.300 3l-3.700-2.700z" fill="#fce6a2"/></svg><span class="tr" style="left:106.8px;top:146px;">Ansicht-2D</span><svg style="left:84px;top:170.5px" width="14" height="21" viewBox="0 0 14 21"><path d="M0 0h13v11.500l1 .7v5.800h-9.500v-12z" fill="url(#fg)"/><path d="M0 0l5 4.300v13.700l-1.300 3l-3.700-2.700z" fill="#fce6a2"/></svg><span class="tr" style="left:106.8px;top:170px;">Ansicht-3D</span><svg style="left:84px;top:194.5px" width="14" height="21" viewBox="0 0 14 21"><path d="M0 0h13v11.500l1 .7v5.800h-9.500v-12z" fill="url(#fg)"/><path d="M0 0l5 4.300v13.700l-1.300 3l-3.700-2.700z" fill="#fce6a2"/></svg><span class="tr" style="left:106.8px;top:194px;">Ansicht-3D-Raster</span><svg style="left:84px;top:218.5px" width="14" height="21" viewBox="0 0 14 21"><path d="M0 0h13v11.500l1 .7v5.800h-9.500v-12z" fill="url(#fg)"/><path d="M0 0l5 4.300v13.700l-1.300 3l-3.700-2.700z" fill="#fce6a2"/></svg><span class="tr" style="left:106.8px;top:218px;">Multiview Block</span><svg style="left:32px;top:246px" width="13" height="13"><rect x="0.500" y="0.500" width="12" height="12" rx="1.500" fill="url(#pm)" stroke="#919191"/><path d="M2.500 6.500h8" stroke="#4b63a7" stroke-width="1.100"/><path d="M6.500 2.500v8" stroke="#4b63a7" stroke-width="1.100"/></svg><svg style="left:57px;top:242.5px" width="14" height="21" viewBox="0 0 14 21"><path d="M0 0h13v11.500l1 .7v5.800h-9.500v-12z" fill="url(#fg)"/><path d="M0 0l5 4.300v13.700l-1.300 3l-3.700-2.700z" fill="#fce6a2"/></svg><span class="tr" style="left:79.8px;top:242px;">Gräser</span><svg style="left:57px;top:266.5px" width="14" height="21" viewBox="0 0 14 21"><path d="M0 0h13v11.500l1 .7v5.800h-9.500v-12z" fill="url(#fg)"/><path d="M0 0l5 4.300v13.700l-1.300 3l-3.700-2.700z" fill="#fce6a2"/></svg><span class="tr" style="left:79.8px;top:266px;">Schatten</span><svg style="left:57px;top:290.5px" width="14" height="21" viewBox="0 0 14 21"><path d="M0 0h13v11.500l1 .7v5.800h-9.500v-12z" fill="url(#fg)"/><path d="M0 0l5 4.300v13.700l-1.300 3l-3.700-2.700z" fill="#fce6a2"/></svg><span class="tr" style="left:79.8px;top:290px;">Schema</span><svg style="left:32px;top:318px" width="13" height="13"><rect x="0.500" y="0.500" width="12" height="12" rx="1.500" fill="url(#pm)" stroke="#919191"/><path d="M2.500 6.500h8" stroke="#4b63a7" stroke-width="1.100"/></svg><svg style="left:57px;top:314.5px" width="14" height="21" viewBox="0 0 14 21"><path d="M0 0h13v11.500l1 .7v5.800h-9.500v-12z" fill="url(#fg)"/><path d="M0 0l5 4.300v13.700l-1.300 3l-3.700-2.700z" fill="#fce6a2"/></svg><span class="tr" style="left:79.8px;top:314px;">Stauden</span><svg style="left:84px;top:338.5px" width="14" height="21" viewBox="0 0 14 21"><path d="M0 0h13v11.500l1 .7v5.800h-9.500v-12z" fill="url(#fg)"/><path d="M0 0l5 4.300v13.700l-1.300 3l-3.700-2.700z" fill="#fce6a2"/></svg><span class="tr" style="left:106.8px;top:338px;">2D-Grafik</span><svg style="left:84px;top:362.5px" width="14" height="21" viewBox="0 0 14 21"><path d="M0 0h13v11.500l1 .7v5.800h-9.500v-12z" fill="url(#fg)"/><path d="M0 0l5 4.300v13.700l-1.300 3l-3.700-2.700z" fill="#fce6a2"/></svg><span class="tr" style="left:106.8px;top:362px;">2D-Raster</span><svg style="left:59px;top:390px" width="13" height="13"><rect x="0.500" y="0.500" width="12" height="12" rx="1.500" fill="url(#pm)" stroke="#919191"/><path d="M2.500 6.500h8" stroke="#4b63a7" stroke-width="1.100"/><path d="M6.500 2.500v8" stroke="#4b63a7" stroke-width="1.100"/></svg><svg style="left:84px;top:386.5px" width="14" height="21" viewBox="0 0 14 21"><path d="M0 0h13v11.500l1 .7v5.800h-9.500v-12z" fill="url(#fg)"/><path d="M0 0l5 4.300v13.700l-1.300 3l-3.700-2.700z" fill="#fce6a2"/></svg><span class="tr" style="left:106.8px;top:386px;">2D-Symbol</span><svg style="left:84px;top:410.5px" width="14" height="21" viewBox="0 0 14 21"><path d="M0 0h13v11.500l1 .7v5.800h-9.500v-12z" fill="url(#fg)"/><path d="M0 0l5 4.300v13.700l-1.300 3l-3.700-2.700z" fill="#fce6a2"/></svg><span class="tr" style="left:106.8px;top:410px;">3D</span><svg style="left:84px;top:434.5px" width="14" height="21" viewBox="0 0 14 21"><path d="M0 0h13v11.500l1 .7v5.800h-9.500v-12z" fill="url(#fg)"/><path d="M0 0l5 4.300v13.700l-1.300 3l-3.700-2.700z" fill="#fce6a2"/></svg><span class="tr" style="left:106.8px;top:434px;">Ansicht-2D</span><svg style="left:84px;top:458.5px" width="14" height="21" viewBox="0 0 14 21"><path d="M0 0h13v11.500l1 .7v5.800h-9.500v-12z" fill="url(#fg)"/><path d="M0 0l5 4.300v13.700l-1.300 3l-3.700-2.700z" fill="#fce6a2"/></svg><span class="tr" style="left:106.8px;top:458px;">Ansicht-2D-Raster</span><svg style="left:84px;top:482.5px" width="14" height="21" viewBox="0 0 14 21"><path d="M0 0h13v11.500l1 .7v5.800h-9.500v-12z" fill="url(#fg)"/><path d="M0 0l5 4.300v13.700l-1.300 3l-3.700-2.700z" fill="#fce6a2"/></svg><span class="tr" style="left:106.8px;top:482px;">Ansicht-3D</span><svg style="left:32px;top:510px" width="13" height="13"><rect x="0.500" y="0.500" width="12" height="12" rx="1.500" fill="url(#pm)" stroke="#919191"/><path d="M2.500 6.500h8" stroke="#4b63a7" stroke-width="1.100"/><path d="M6.500 2.500v8" stroke="#4b63a7" stroke-width="1.100"/></svg><svg style="left:57px;top:506.5px" width="14" height="21" viewBox="0 0 14 21"><path d="M0 0h13v11.500l1 .7v5.800h-9.500v-12z" fill="url(#fg)"/><path d="M0 0l5 4.300v13.700l-1.300 3l-3.700-2.700z" fill="#fce6a2"/></svg><span class="tr" style="left:79.8px;top:506px;">Sträucher</span><div style="left:252px;top:0;width:26px;height:534.0px;background:#f0f0f0"></div><div style="left:252px;top:288px;width:24.5px;height:64.500px;background:#cdcdcd"></div><svg style="left:257.5px;top:10px" width="13" height="10"><path d="M1.500 7.700l5-5.700l5 5.700" fill="none" stroke="#5a5a5a" stroke-width="2.800"/></svg><svg style="left:257.5px;top:515.0px" width="13" height="10"><path d="M1.500 1.900l5 5.700l5-5.700" fill="none" stroke="#5a5a5a" stroke-width="2.800"/></svg><div style="left:0;top:534.0px;width:278px;height:26.5px;background:#f0f0f0"></div><div style="left:80px;top:534.0px;width:78px;height:24.5px;background:#cdcdcd"></div><svg style="left:9px;top:540.0px" width="10" height="13"><path d="M7.700 1.500l-5.700 5l5.700 5" fill="none" stroke="#5a5a5a" stroke-width="2.800"/></svg><svg style="left:232px;top:540.0px" width="10" height="13"><path d="M1.900 1.500l5.700 5l-5.700 5" fill="none" stroke="#5a5a5a" stroke-width="2.800"/></svg></div><svg style="left:243px;top:110px" width="38" height="42" viewBox="0 0 38 42" ><ellipse cx="18.500" cy="20" rx="11" ry="12.700" fill="none" stroke="#f9434a" stroke-width="3" filter="drop-shadow(1.500px 2px 1.500px rgba(0,0,0,.35))"/></svg><div style="left:301px;top:111px;width:1px;height:616px;background:#a8a8a8"></div><div style="left:306px;top:111px;width:450px;height:616.5px;background:#fff;border:1px solid #8e959e;box-sizing:border-box"></div><div style="left:306px;top:111px;width:450px;height:33px;background:linear-gradient(#fbfcfd,#e9eef4 45%,#c5d2e2);border:1px solid #8e959e;border-bottom:1px solid #8e959e;box-sizing:border-box"></div><div style="left:316px;top:113.5px;width:130px;height:29.5px;background:#fff;border:1px solid #8e959e;border-bottom:none;box-sizing:border-box"></div><span style="left:327px;top:117.5px;font-family:'DejaVu Sans Condensed','Liberation Sans',sans-serif;font-weight:bold;font-size:16px;line-height:19px;color:#000;letter-spacing:0.12px">Alle Dateien</span><div style="left:449px;top:113.5px;width:169px;height:29.5px;background:linear-gradient(#fdfdfe,#e4eaf2 50%,#cad6e4);border:1px solid #9aa3ad;border-bottom:none;box-sizing:border-box"></div><span style="left:460.5px;top:117.5px;font-family:'DejaVu Sans Condensed','Liberation Sans',sans-serif;font-weight:bold;font-size:16px;line-height:19px;color:#000;letter-spacing:0.12px">Bäume-2D-Color</span><svg style="left:643px;top:121px" width="7" height="11" viewBox="0 0 7 11" ><path d="M6.500 0.500v10l-6-5z" fill="#000"/></svg><svg style="left:674px;top:121px" width="7" height="11" viewBox="0 0 7 11" ><path d="M0.500 0.500v10l6-5z" fill="#000"/></svg><svg style="left:699.5px;top:124.5px" width="11" height="6" viewBox="0 0 11 6" ><path d="M0 0h11l-5.500 5.500z" fill="#000"/></svg><svg style="left:730px;top:121px" width="9.6" height="9.6" viewBox="0 0 9.6 9.6" ><path d="M0.700 0.700l8.2 8.2M8.9 0.700l-8.2 8.2" stroke="#000" stroke-width="2" fill="none"/></svg><div style="left:729px;top:144px;width:25px;height:582px;background:#f0f0f0"></div><div style="left:729px;top:350px;width:23.7px;height:29px;background:#cdcdcd"></div><svg style="left:735px;top:155px" width="13" height="10" viewBox="0 0 13 10" ><path d="M1.500 7.700l5-5.700l5 5.700" fill="none" stroke="#5a5a5a" stroke-width="2.800"/></svg><svg style="left:735px;top:708px" width="13" height="10" viewBox="0 0 13 10" ><path d="M1.500 1.900l5 5.700l5-5.700" fill="none" stroke="#5a5a5a" stroke-width="2.800"/></svg><div style="left:323px;top:154px;width:126px;height:126px;background:#000;box-shadow:0 0 0 1px #d4d4d4"></div><svg style="left:323px;top:154px" width="126" height="126" viewBox="0 0 126 126"><use href="#t44"/></svg><span style="left:309.5px;top:287.5px;width:150px;text-align:center;font-family:'DejaVu Sans Condensed','Liberation Sans',sans-serif;font-size:16px;line-height:19px;color:#000">PFBDRC44.dwg</span><div style="left:477.5px;top:150.5px;width:133.5px;height:133.5px;background:#0078d7"></div><div style="left:480px;top:153.5px;width:128px;height:128px;background:#000"></div><svg style="left:481px;top:154px" width="126" height="126" viewBox="0 0 126 126"><use href="#t41"/></svg><span style="left:483.5px;top:287.5px;width:117.500px;height:20.500px;background:#0078d7;color:#fff;text-align:center;font-family:'DejaVu Sans Condensed','Liberation Sans',sans-serif;font-size:16px;line-height:19px">PFBDRC41.dwg</span><div style="left:323px;top:346px;width:126px;height:126px;background:#000;box-shadow:0 0 0 1px #d4d4d4"></div><svg style="left:323px;top:346px" width="126" height="126" viewBox="0 0 126 126"><use href="#t54"/></svg><span style="left:309.5px;top:479.5px;width:150px;text-align:center;font-family:'DejaVu Sans Condensed','Liberation Sans',sans-serif;font-size:16px;line-height:19px;color:#000">PFBDRC54.dwg</span><div style="left:481px;top:346px;width:126px;height:126px;background:#000;box-shadow:0 0 0 1px #d4d4d4"></div><svg style="left:481px;top:346px" width="126" height="126" viewBox="0 0 126 126"><use href="#t40"/></svg><span style="left:467.5px;top:479.5px;width:150px;text-align:center;font-family:'DejaVu Sans Condensed','Liberation Sans',sans-serif;font-size:16px;line-height:19px;color:#000">PFBDRC40.dwg</span><div style="left:323px;top:538px;width:126px;height:126px;background:#000;box-shadow:0 0 0 1px #d4d4d4"></div><svg style="left:323px;top:538px" width="126" height="126" viewBox="0 0 126 126"><use href="#t43"/></svg><span style="left:309.5px;top:671.5px;width:150px;text-align:center;font-family:'DejaVu Sans Condensed','Liberation Sans',sans-serif;font-size:16px;line-height:19px;color:#000">PFBDRC43.dwg</span><div style="left:481px;top:538px;width:126px;height:126px;background:#000;box-shadow:0 0 0 1px #d4d4d4"></div><svg style="left:481px;top:538px" width="126" height="126" viewBox="0 0 126 126"><use href="#t60"/></svg><span style="left:467.5px;top:671.5px;width:150px;text-align:center;font-family:'DejaVu Sans Condensed','Liberation Sans',sans-serif;font-size:16px;line-height:19px;color:#000">PFBDRC60.dwg</span><div style="left:831.3px;top:0px;width:760px;height:727.5px;background:#f0f0f0"></div><div style="left:831.3px;top:0px;width:760px;height:1.5px;background:#f6f6f6"></div><div style="left:831.3px;top:0px;width:1.6px;height:727px;background:#f8f8f8"></div><div style="left:1590.4px;top:0px;width:1.7px;height:729px;background:#000"></div><div style="left:830.5px;top:727.2px;width:761.5px;height:1.7px;background:#000"></div><div style="left:835px;top:5px;width:753px;height:32px;background:#bfcddb;border-top:1px solid #8c9199;border-left:1px solid #8c9199;box-sizing:border-box;border-right:1px solid #aab4c0"></div><svg style="left:841px;top:10px" width="24" height="24" viewBox="0 0 24 24" ><rect x="4.10" y="0.10" width="2.4" height="2.8" fill="#1a8a1a" transform="rotate(0 5.3 5)"/><rect x="4.10" y="0.10" width="2.4" height="2.8" fill="#1a8a1a" transform="rotate(45 5.3 5)"/><rect x="4.10" y="0.10" width="2.4" height="2.8" fill="#1a8a1a" transform="rotate(90 5.3 5)"/><rect x="4.10" y="0.10" width="2.4" height="2.8" fill="#1a8a1a" transform="rotate(135 5.3 5)"/><rect x="4.10" y="0.10" width="2.4" height="2.8" fill="#1a8a1a" transform="rotate(180 5.3 5)"/><rect x="4.10" y="0.10" width="2.4" height="2.8" fill="#1a8a1a" transform="rotate(225 5.3 5)"/><rect x="4.10" y="0.10" width="2.4" height="2.8" fill="#1a8a1a" transform="rotate(270 5.3 5)"/><rect x="4.10" y="0.10" width="2.4" height="2.8" fill="#1a8a1a" transform="rotate(315 5.3 5)"/><circle cx="5.3" cy="5" r="3.6" fill="#1a8a1a"/><rect x="18.10" y="-0.50" width="2.4" height="2.8" fill="#2a9a2a" transform="rotate(0 19.3 3.8)"/><rect x="18.10" y="-0.50" width="2.4" height="2.8" fill="#2a9a2a" transform="rotate(45 19.3 3.8)"/><rect x="18.10" y="-0.50" width="2.4" height="2.8" fill="#2a9a2a" transform="rotate(90 19.3 3.8)"/><rect x="18.10" y="-0.50" width="2.4" height="2.8" fill="#2a9a2a" transform="rotate(135 19.3 3.8)"/><rect x="18.10" y="-0.50" width="2.4" height="2.8" fill="#2a9a2a" transform="rotate(180 19.3 3.8)"/><rect x="18.10" y="-0.50" width="2.4" height="2.8" fill="#2a9a2a" transform="rotate(225 19.3 3.8)"/><rect x="18.10" y="-0.50" width="2.4" height="2.8" fill="#2a9a2a" transform="rotate(270 19.3 3.8)"/><rect x="18.10" y="-0.50" width="2.4" height="2.8" fill="#2a9a2a" transform="rotate(315 19.3 3.8)"/><circle cx="19.3" cy="3.8" r="3" fill="#2a9a2a"/><circle cx="19.3" cy="3.8" r="1.35" fill="#bfcddb"/><rect x="4.10" y="13.60" width="2.4" height="2.8" fill="#2a9a2a" transform="rotate(0 5.3 18.7)"/><rect x="4.10" y="13.60" width="2.4" height="2.8" fill="#2a9a2a" transform="rotate(45 5.3 18.7)"/><rect x="4.10" y="13.60" width="2.4" height="2.8" fill="#2a9a2a" transform="rotate(90 5.3 18.7)"/><rect x="4.10" y="13.60" width="2.4" height="2.8" fill="#2a9a2a" transform="rotate(135 5.3 18.7)"/><rect x="4.10" y="13.60" width="2.4" height="2.8" fill="#2a9a2a" transform="rotate(180 5.3 18.7)"/><rect x="4.10" y="13.60" width="2.4" height="2.8" fill="#2a9a2a" transform="rotate(225 5.3 18.7)"/><rect x="4.10" y="13.60" width="2.4" height="2.8" fill="#2a9a2a" transform="rotate(270 5.3 18.7)"/><rect x="4.10" y="13.60" width="2.4" height="2.8" fill="#2a9a2a" transform="rotate(315 5.3 18.7)"/><circle cx="5.3" cy="18.7" r="3.8" fill="#2a9a2a"/><circle cx="5.3" cy="18.7" r="1.71" fill="#bfcddb"/><rect x="11" y="9.300" width="11.500" height="11" rx="3" fill="#7a7a7a"/><rect x="13" y="10" width="7.500" height="8" rx="2" fill="#e8e8e8"/><rect x="15.800" y="12" width="2" height="3.500" fill="#f4d8c8"/><rect x="13.500" y="13" width="2" height="1.600" fill="#555"/><rect x="18" y="13" width="2" height="1.600" fill="#555"/><rect x="13.500" y="16.500" width="6.500" height="2.500" fill="#999"/><path d="M10 24l2.500-4h8.500l2.500 4z" fill="#555"/><path d="M11.500 24l1.500-2h3v2zM18 22h2.500l1.500 2h-4z" fill="#8ad0f0"/></svg><span style="left:869.3px;top:13px;font-family:'Liberation Sans',sans-serif;font-size:18px;letter-spacing:-0.3px;line-height:21px;color:#000">Detailmanager</span><svg style="left:1544px;top:12.5px" width="11" height="16" viewBox="0 0 11 16" ><path d="M2.500 0.700h5.500v9h-5.500z" fill="none" stroke="#000" stroke-width="1.400"/><path d="M7.300 0.700v9" stroke="#000" stroke-width="2"/><path d="M0 10h11" stroke="#000" stroke-width="1.600"/><path d="M5.400 10v5.200" stroke="#000" stroke-width="1.500"/></svg><svg style="left:1569.3px;top:15px" width="10.6" height="10.6" viewBox="0 0 10.6 10.6" ><path d="M0.700 0.700l9.2 9.2M9.9 0.700l-9.2 9.2" stroke="#000" stroke-width="1.8" fill="none"/></svg><div style="left:835px;top:41px;width:752px;height:65.5px;background:linear-gradient(90deg,#f1f1f1,#f5f5f5 40%,#fdfdfd)"></div><span style="left:856.5px;top:49.5px;font-family:'Liberation Sans',sans-serif;font-size:17.200px;letter-spacing:-0.15px;line-height:20px;color:#000;transform:scaleY(1.09);transform-origin:0 16px">Detail</span><span style="left:925.3px;top:49.5px;font-family:'Liberation Sans',sans-serif;font-size:17.200px;letter-spacing:-0.25px;line-height:20px;color:#000;transform:scaleY(1.09);transform-origin:0 16px">Bearbeiten</span><span style="left:1032px;top:49.5px;font-family:'Liberation Sans',sans-serif;font-size:17.200px;letter-spacing:0.1px;line-height:20px;color:#000;transform:scaleY(1.09);transform-origin:0 16px">Ansicht</span><span style="left:1114.3px;top:49.5px;font-family:'Liberation Sans',sans-serif;font-size:17.200px;letter-spacing:0px;line-height:20px;color:#000;transform:scaleY(1.09);transform-origin:0 16px">Hilfe</span><div style="left:836px;top:76px;width:197px;height:29px;background:linear-gradient(#f7f7f7,#f3f3f3);border-radius:4px 3px 3px 4px;box-shadow:1px 0 0 #dcdcdc"></div><div style="left:1034px;top:76px;width:281.5px;height:29px;background:linear-gradient(#f7f7f7,#f3f3f3);border-radius:4px 3px 3px 4px;box-shadow:1px 0 0 #dcdcdc"></div><div style="left:1316.5px;top:76px;width:94.5px;height:29px;background:linear-gradient(#f7f7f7,#f3f3f3);border-radius:4px 3px 3px 4px;box-shadow:1px 0 0 #dcdcdc"></div><div style="left:1412px;top:76px;width:39px;height:29px;background:linear-gradient(#f7f7f7,#f3f3f3);border-radius:4px 3px 3px 4px;box-shadow:1px 0 0 #dcdcdc"></div><svg style="left:839px;top:80px" width="2" height="18" viewBox="0 0 2 18" ><rect x="0" y="0" width="2" height="2" fill="#b9b9b9"/><rect x="0" y="4" width="2" height="2" fill="#b9b9b9"/><rect x="0" y="8" width="2" height="2" fill="#b9b9b9"/><rect x="0" y="12" width="2" height="2" fill="#b9b9b9"/><rect x="0" y="16" width="2" height="2" fill="#b9b9b9"/></svg><svg style="left:1037.5px;top:80px" width="2" height="18" viewBox="0 0 2 18" ><rect x="0" y="0" width="2" height="2" fill="#b9b9b9"/><rect x="0" y="4" width="2" height="2" fill="#b9b9b9"/><rect x="0" y="8" width="2" height="2" fill="#b9b9b9"/><rect x="0" y="12" width="2" height="2" fill="#b9b9b9"/><rect x="0" y="16" width="2" height="2" fill="#b9b9b9"/></svg><svg style="left:1319.5px;top:80px" width="2" height="18" viewBox="0 0 2 18" ><rect x="0" y="0" width="2" height="2" fill="#b9b9b9"/><rect x="0" y="4" width="2" height="2" fill="#b9b9b9"/><rect x="0" y="8" width="2" height="2" fill="#b9b9b9"/><rect x="0" y="12" width="2" height="2" fill="#b9b9b9"/><rect x="0" y="16" width="2" height="2" fill="#b9b9b9"/></svg><svg style="left:1415.5px;top:80px" width="2" height="18" viewBox="0 0 2 18" ><rect x="0" y="0" width="2" height="2" fill="#b9b9b9"/><rect x="0" y="4" width="2" height="2" fill="#b9b9b9"/><rect x="0" y="8" width="2" height="2" fill="#b9b9b9"/><rect x="0" y="12" width="2" height="2" fill="#b9b9b9"/><rect x="0" y="16" width="2" height="2" fill="#b9b9b9"/></svg><svg style="left:847px;top:79px" width="24" height="24" viewBox="0 0 24 24" overflow="visible"><circle cx="12" cy="12" r="10.8" fill="#2f9e38" stroke="#4a4a4a" stroke-width="2.2"/><path d="M4.5 8.5a9 9 0 0 1 15 0" fill="none" stroke="#6fd06f" stroke-width="1" opacity=".7"/><path d="M6.3 12.6l4.1 4.2l7.6-8.6" fill="none" stroke="#fff" stroke-width="3.1"/></svg><svg style="left:875px;top:79px" width="24" height="24" viewBox="0 0 24 24" overflow="visible"><rect x="2" y="1" width="2.2" height="2.2" fill="#333"/><rect x="8.5" y="0" width="2.2" height="2.2" fill="#333"/><rect x="15" y="2" width="2.2" height="2.2" fill="#333"/><rect x="21" y="0.5" width="2.2" height="2.2" fill="#333"/><rect x="21" y="8" width="2.2" height="2.2" fill="#333"/><rect x="19.5" y="14" width="2.2" height="2.2" fill="#333"/><rect x="20" y="20" width="2.2" height="2.2" fill="#333"/><rect x="13.5" y="21.5" width="2.2" height="2.2" fill="#333"/><rect x="6" y="20" width="2.2" height="2.2" fill="#333"/><rect x="0.5" y="21.5" width="2.2" height="2.2" fill="#333"/><rect x="0.5" y="14" width="2.2" height="2.2" fill="#333"/><rect x="2" y="8" width="2.2" height="2.2" fill="#333"/><circle cx="12" cy="12.5" r="6.6" fill="#2f9e38" stroke="#4a4a4a" stroke-width="1.3"/><path d="M8.3 12.6l2.7 2.8l4.8-5.6" fill="none" stroke="#fff" stroke-width="2.1"/></svg><svg style="left:909px;top:79px" width="24" height="24" viewBox="0 0 24 24" overflow="visible"><rect x="0.5" y="0.5" width="13" height="13" fill="#3a3a3a"/><rect x="2" y="2" width="4.3" height="4.3" fill="#6fb6ee"/><rect x="8" y="2" width="4.3" height="4.3" fill="#6fb6ee"/><rect x="2" y="8" width="4.3" height="4.3" fill="#6fb6ee"/><rect x="8" y="8" width="4.3" height="4.3" fill="#cfe6fa"/><path d="M14 1.5c4 .5 6 3 6.5 6.5" fill="none" stroke="#5cb85c" stroke-width="2"/><path d="M17.5 6.5l6 .3l-3.2 3.6z" fill="#3a9a3a"/><rect x="10" y="10" width="13" height="13.5" fill="#35c0f5" stroke="#d0103a" stroke-width="1.6"/><path d="M11.5 21.5l10-10v4l-7 7z" fill="#fff" opacity=".85"/></svg><svg style="left:942.5px;top:79px" width="24" height="24" viewBox="0 0 24 24" overflow="visible"><path d="M1.5 4.5l18.5 17.5" stroke="#4a4a4a" stroke-width="4.2" fill="none"/><path d="M2.5 4.7l16.5 15.7" stroke="#e4e4e4" stroke-width="1.5" fill="none"/><path d="M7 1l2.2 3.6l4-1.6l-.5 3.2l5.5-.5l4.5 2.5l-4 .8l-3.5-1l-2 2.2l-2.6-1.6l-3.8 1l1-3.3l-3.3-2.3l3-.4z" fill="#ffa51e"/><path d="M7.5 3.5l1.8 2.3l2.5-.5l-.8 2l1.6 1.3l-2.6.1l-1.5 1.5l-.4-2.3l-2-1.2l1.8-.8z" fill="#ffe326"/></svg><svg style="left:971px;top:79px" width="24" height="24" viewBox="0 0 24 24" overflow="visible"><path d="M1 18.5v-13h6l1.5-1.5h9v4h5.5l-5 10.5z" fill="#4a4a4a"/><path d="M2.2 16.5v-10h5.5l1.5-1.4h7v3z" fill="#ffe135"/><path d="M4 8.3l4-1.8l7 .6l-2 1.8z" fill="#ffa51e"/><path d="M3 17.3l4.5-7.6h14l-4.5 7.6z" fill="#fff6a8"/><path d="M6 16l3.5-5.2h7z" fill="#fffbe0"/></svg><svg style="left:1005px;top:79px" width="24" height="24" viewBox="0 0 24 24" overflow="visible"><rect x="7.5" y="3.5" width="10" height="5" fill="#fff" stroke="#4a4a4a" stroke-width="1.5"/><rect x="2.3" y="8.3" width="20" height="10" rx="1.6" fill="#fff" stroke="#4a4a4a" stroke-width="1.7"/><rect x="7.3" y="15" width="10.4" height="6" fill="#fff" stroke="#4a4a4a" stroke-width="1.5"/><rect x="9" y="17.5" width="7" height="1.6" fill="#9a9a9a"/><rect x="5" y="10.5" width="1.4" height="1.4" fill="#4a4a4a"/></svg><svg style="left:1046px;top:79px" width="24" height="24" viewBox="0 0 24 24" overflow="visible"><path d="M1 1h12.5l3 3h6.5v19h-22z" fill="#fff" stroke="#3a3a3a" stroke-width="1.3"/><rect x="4.3" y="6.3" width="15" height="14" fill="#a8ccf0" stroke="#3a3a3a" stroke-width="1.6"/><rect x="7" y="9" width="3.4" height="3.4" fill="#8c0a3c"/><path d="M11 19l4-6.5l4 6.5z" fill="#3a3a3a"/><path d="M5.5 19.5l4-5l3 5z" fill="#d8ecfa"/></svg><svg style="left:1073.5px;top:79px" width="24" height="24" viewBox="0 0 24 24" overflow="visible"><rect x="1" y="0.8" width="20.5" height="23" fill="#fff" stroke="#2a2a2a" stroke-width="1.5"/><rect x="4" y="4" width="14.5" height="13.5" fill="#a8ccf0" stroke="#3a3a3a" stroke-width="1.5"/><circle cx="8.5" cy="8" r="2.2" fill="#e8d820" stroke="#777" stroke-width=".6"/><path d="M5 16.6v-2.6c3-2.4 9-2.4 12.700 0v2.600z" fill="#8cc820"/><path d="M5 13v-5l2-2v5.500z" fill="#fff" opacity=".7"/></svg><svg style="left:1107px;top:79px" width="24" height="24" viewBox="0 0 24 24" overflow="visible"><path d="M0.5 3.5h9l2 2.500h12v15h-23z" fill="#5a5a5a"/><path d="M2 5h6.500l2 2.500h11.5v12h-20z" fill="#ffd84a"/><path d="M2.500 11h19.500v8.500h-19.500z" fill="#ffec40"/><path d="M3 5.500h6" stroke="#ffeaa0" stroke-width="1.2"/><path d="M12.500 7l1.300 3.200l3.200-1.500l-1.500 3.200l3.200 1.300l-3.200 1.300l1.500 3.200l-3.200-1.500l-1.300 3.200l-1.300-3.200l-3.200 1.500l1.500-3.200l-3.200-1.300l3.200-1.300l-1.500-3.200l3.200 1.500z" fill="#1560d8"/><circle cx="12.5" cy="13.2" r="1.300" fill="#ffec40"/></svg><svg style="left:1134.5px;top:79px" width="24" height="24" viewBox="0 0 24 24" overflow="visible"><text x="-0.5" y="17" font-family="Liberation Sans, sans-serif" font-size="18.5" font-weight="bold" fill="#585858">a</text><text x="12.500" y="17" font-family="Liberation Sans, sans-serif" font-size="18.5" font-weight="bold" fill="#585858">e</text><path d="M8.500 1.500c1.500 0 2.500.5 3 1.500c.5-1 1.500-1.500 3-1.500M11.500 3v18M8.500 23.500c1.500 0 2.500-.5 3-1.500c.5 1 1.500 1.500 3 1.500" fill="none" stroke="#222" stroke-width="1.200"/><path d="M9 19h5l-2.500 3z" fill="#111"/></svg><svg style="left:1162px;top:79px" width="24" height="24" viewBox="0 0 24 24" overflow="visible"><path d="M1 2.500h5l1.500 2h7.500v4.500M1 2.500v14h5" fill="none" stroke="#666" stroke-width="1" stroke-dasharray="1.600 1.400"/><path d="M7 8h6l1.500 2h8.500v13h-16z" fill="#6a6a5a"/><path d="M8 9h4.500l1.500 2h8v11h-14z" fill="#ffd76a"/><path d="M8.500 21.500l11-9.500h2v3l-7.500 6.500z" fill="#ffb84a"/><path d="M9 9.800h3.500" stroke="#fff2c0" stroke-width="1"/></svg><svg style="left:1191px;top:79px" width="24" height="24" viewBox="0 0 24 24" overflow="visible"><path d="M0.500 2.500h8.500l2 3h11.500v14.500h-22z" fill="#ffd76a"/><path d="M0.500 2.500h8.500l2 3h-10.500z" fill="#ffe9a0"/><path d="M1.500 19l14-13h6.500v8l-5.500 5.500z" fill="#ffb84a"/><path d="M0.500 20h22" stroke="#8a7a4a" stroke-width="1"/><path d="M22.500 6v14" stroke="#8a7a4a" stroke-width="1"/><path d="M12 10.500l11.500 12.500M23 11l-10 13" stroke="#ff2a10" stroke-width="2.600" fill="none"/></svg><svg style="left:1225px;top:79px" width="24" height="24" viewBox="0 0 24 24" overflow="visible"><circle cx="9" cy="9.500" r="7.600" fill="#b8d8f4" stroke="#4a4a4a" stroke-width="2.300"/><path d="M14.500 15.500l7 6.500" stroke="#4a4a4a" stroke-width="3.600" fill="none"/><text x="3" y="13" font-family="Liberation Sans, sans-serif" font-weight="bold" font-size="9.500" fill="#333" letter-spacing="-0.5">ABC</text></svg><svg style="left:1254px;top:79px" width="24" height="24" viewBox="0 0 24 24" overflow="visible"><path d="M8.500 1.500h10l4 4v14h-14z" fill="#fff" stroke="#d8183c" stroke-width="1.600"/><path d="M11 6.500h8M11 17h10" stroke="#d8183c" stroke-width="2"/><rect x="12.500" y="8" width="7" height="7" fill="#e8506a"/><path d="M14 13.500l2-4l2 4" stroke="#fff" stroke-width="1.200" fill="none"/><rect x="0.800" y="10.500" width="10.400" height="2.600" rx="1" fill="#3a3a3a"/><rect x="4" y="9" width="4" height="2" fill="#3a3a3a"/><path d="M1.800 13.500h8.400l-.6 10h-7.200z" fill="#4a4a4a"/><path d="M4.500 15v7M7.500 15v7" stroke="#cfcfcf" stroke-width="1.200"/></svg><svg style="left:1287px;top:79px" width="24" height="24" viewBox="0 0 24 24" overflow="visible"><circle cx="9.500" cy="9.500" r="7.800" fill="#a8ccf0" stroke="#4a4a4a" stroke-width="2.400"/><path d="M4.500 8l6 6" stroke="#e0f0ff" stroke-width="1.500"/><path d="M15.300 15.300l7 7" stroke="#3a3a3a" stroke-width="3.600" fill="none"/></svg><svg style="left:1328.5px;top:79px" width="24" height="24" viewBox="0 0 24 24" overflow="visible"><path d="M0 4h22.500" stroke="#d81848" stroke-width="1.400"/><rect x="0.700" y="9" width="21.500" height="9.300" fill="#36c0f4" stroke="#3a3a3a" stroke-width="1.500"/><rect x="11.800" y="9.800" width="9.700" height="7.800" fill="#a8ccf0"/><path d="M11.200 9v9.300" stroke="#3a3a3a" stroke-width="1.500"/><path d="M2 17l7-7h2l-7 7zM13 17l7-7v2.500l-4.500 4.500z" fill="#fff" opacity=".85"/></svg><svg style="left:1355px;top:79px" width="24" height="24" viewBox="0 0 24 24" overflow="visible"><rect x="0.300" y="0.300" width="23.400" height="23.400" rx="3" fill="#3a3a3a"/><rect x="1.800" y="1.800" width="20.400" height="20.400" rx="2" fill="#d80a3a"/><rect x="5" y="5" width="14" height="14" fill="#3a3a3a"/><rect x="6.300" y="6.300" width="11.400" height="11.400" fill="#a8ccf0"/><path d="M17.500 14.500v3h-3z" fill="#fff"/><path d="M6.500 9v-2.500h2.500z" fill="#e0f0ff"/></svg><svg style="left:1386px;top:79px" width="24" height="24" viewBox="0 0 24 24" overflow="visible"><path d="M1 2.500h10l5.500 5.500v14.500h-15.500z" fill="#fff" stroke="#c8d8e8" stroke-width="1"/><path d="M11 2.500l5.500 5.500v14.500h-15.500" fill="none" stroke="#2a2a7a" stroke-width="1.300"/><path d="M11 2.500v5.500h5.500z" fill="#a8b8d8"/><path d="M5 10.500c1-3 5-3.500 7-1.500M12.500 15c-1 3-5 3.500-7 1.500" fill="none" stroke="#5aa81e" stroke-width="2"/><path d="M10.500 6.500l3.500 3.200l-4.500 1z" fill="#3a7a1e"/><path d="M7 19.500l-3.500-3.200l4.500-1z" fill="#3a7a1e"/></svg><svg style="left:1426px;top:79px" width="24" height="24" viewBox="0 0 24 24" overflow="visible"><text x="1" y="22" font-family="Liberation Sans, sans-serif" font-weight="bold" font-size="28" fill="#c89a10" stroke="#c89a10" stroke-width=".8">?</text><text x="0.500" y="21.500" font-family="Liberation Sans, sans-serif" font-weight="bold" font-size="28" fill="#ffd21e">?</text></svg><div style="left:904px;top:81px;width:1px;height:21px;background:#c4c4c4"></div><div style="left:938.5px;top:81px;width:1px;height:21px;background:#c4c4c4"></div><div style="left:1000.5px;top:81px;width:1px;height:21px;background:#c4c4c4"></div><div style="left:1102px;top:81px;width:1px;height:21px;background:#c4c4c4"></div><div style="left:1220px;top:81px;width:1px;height:21px;background:#c4c4c4"></div><div style="left:1282.5px;top:81px;width:1px;height:21px;background:#c4c4c4"></div><span style="left:847.5px;top:119.5px;writing-mode:vertical-rl;font-family:'DejaVu Sans Condensed','Liberation Sans',sans-serif;font-weight:bold;font-size:16px;line-height:19px;color:#000;letter-spacing:-0.3px">Navigation</span><div style="left:874px;top:107px;width:713px;height:616.5px;background:#fff;border:1px solid #8e959e;box-sizing:border-box"></div><div style="left:874px;top:107px;width:713px;height:33px;background:linear-gradient(#fbfcfd,#e9eef4 45%,#c5d2e2);border:1px solid #8e959e;border-bottom:1px solid #8e959e;box-sizing:border-box"></div><div style="left:884px;top:109.5px;width:130px;height:29.5px;background:#fff;border:1px solid #8e959e;border-bottom:none;box-sizing:border-box"></div><span style="left:895px;top:113.5px;font-family:'DejaVu Sans Condensed','Liberation Sans',sans-serif;font-weight:bold;font-size:16px;line-height:19px;color:#000;letter-spacing:0.12px">Alle Dateien</span><div style="left:1017px;top:109.5px;width:169px;height:29.5px;background:linear-gradient(#fdfdfe,#e4eaf2 50%,#cad6e4);border:1px solid #9aa3ad;border-bottom:none;box-sizing:border-box"></div><span style="left:1028.5px;top:113.5px;font-family:'DejaVu Sans Condensed','Liberation Sans',sans-serif;font-weight:bold;font-size:16px;line-height:19px;color:#000;letter-spacing:0.12px">Bäume-2D-Color</span><div style="left:1189px;top:109.5px;width:179px;height:29.5px;background:linear-gradient(#fdfdfe,#e4eaf2 50%,#cad6e4);border:1px solid #9aa3ad;border-bottom:none;box-sizing:border-box"></div><span style="left:1200.5px;top:113.5px;font-family:'DejaVu Sans Condensed','Liberation Sans',sans-serif;font-weight:bold;font-size:16px;line-height:19px;color:#000;letter-spacing:0.12px">Bäume-2D-Raster</span><svg style="left:1474px;top:117px" width="7" height="11" viewBox="0 0 7 11" ><path d="M6.500 0.500v10l-6-5z" fill="#000"/></svg><svg style="left:1505px;top:117px" width="7" height="11" viewBox="0 0 7 11" ><path d="M0.500 0.500v10l6-5z" fill="#000"/></svg><svg style="left:1530.5px;top:120.5px" width="11" height="6" viewBox="0 0 11 6" ><path d="M0 0h11l-5.500 5.500z" fill="#000"/></svg><svg style="left:1561px;top:117px" width="9.6" height="9.6" viewBox="0 0 9.6 9.6" ><path d="M0.700 0.700l8.2 8.2M8.9 0.700l-8.2 8.2" stroke="#000" stroke-width="2" fill="none"/></svg><div style="left:1560px;top:140.5px;width:25px;height:581.5px;background:#f0f0f0"></div><div style="left:1560px;top:353.6px;width:23.7px;height:57.4px;background:#cdcdcd"></div><svg style="left:1566px;top:151.5px" width="13" height="10" viewBox="0 0 13 10" ><path d="M1.500 7.700l5-5.700l5 5.700" fill="none" stroke="#5a5a5a" stroke-width="2.800"/></svg><svg style="left:1566px;top:704.0px" width="13" height="10" viewBox="0 0 13 10" ><path d="M1.500 1.900l5 5.700l5-5.700" fill="none" stroke="#5a5a5a" stroke-width="2.800"/></svg><div style="left:891px;top:175px;width:126px;height:126px;background:#000;box-shadow:0 0 0 1px #d4d4d4"></div><svg style="left:891px;top:175px" width="126" height="126" viewBox="0 0 126 126"><use href="#t54"/></svg><span style="left:877.5px;top:308.5px;width:150px;text-align:center;font-family:'DejaVu Sans Condensed','Liberation Sans',sans-serif;font-size:16px;line-height:19px;color:#000">PFBDRC54.dwg</span><div style="left:1049px;top:175px;width:126px;height:126px;background:#000;box-shadow:0 0 0 1px #d4d4d4"></div><svg style="left:1049px;top:175px" width="126" height="126" viewBox="0 0 126 126"><use href="#t40"/></svg><span style="left:1035.5px;top:308.5px;width:150px;text-align:center;font-family:'DejaVu Sans Condensed','Liberation Sans',sans-serif;font-size:16px;line-height:19px;color:#000">PFBDRC40.dwg</span><div style="left:1207px;top:175px;width:126px;height:126px;background:#000;box-shadow:0 0 0 1px #d4d4d4"></div><svg style="left:1207px;top:175px" width="126" height="126" viewBox="0 0 126 126"><use href="#t43"/></svg><span style="left:1193.5px;top:308.5px;width:150px;text-align:center;font-family:'DejaVu Sans Condensed','Liberation Sans',sans-serif;font-size:16px;line-height:19px;color:#000">PFBDRC43.dwg</span><div style="left:1365px;top:175px;width:126px;height:126px;background:#000;box-shadow:0 0 0 1px #d4d4d4"></div><svg style="left:1365px;top:175px" width="126" height="126" viewBox="0 0 126 126"><use href="#t60"/></svg><span style="left:1351.5px;top:308.5px;width:150px;text-align:center;font-family:'DejaVu Sans Condensed','Liberation Sans',sans-serif;font-size:16px;line-height:19px;color:#000">PFBDRC60.dwg</span><div style="left:891px;top:367px;width:126px;height:126px;background:#000;box-shadow:0 0 0 1px #d4d4d4"></div><svg style="left:891px;top:367px" width="126" height="126" viewBox="0 0 126 126"><use href="#t55"/></svg><span style="left:877.5px;top:500.5px;width:150px;text-align:center;font-family:'DejaVu Sans Condensed','Liberation Sans',sans-serif;font-size:16px;line-height:19px;color:#000">PFBDRC55.dwg</span><div style="left:1049px;top:367px;width:126px;height:126px;background:#000;box-shadow:0 0 0 1px #d4d4d4"></div><svg style="left:1049px;top:367px" width="126" height="126" viewBox="0 0 126 126"><use href="#t62"/></svg><span style="left:1035.5px;top:500.5px;width:150px;text-align:center;font-family:'DejaVu Sans Condensed','Liberation Sans',sans-serif;font-size:16px;line-height:19px;color:#000">PFBDRC62.dwg</span><div style="left:1207px;top:367px;width:126px;height:126px;background:#000;box-shadow:0 0 0 1px #d4d4d4"></div><svg style="left:1207px;top:367px" width="126" height="126" viewBox="0 0 126 126"><use href="#t56"/></svg><span style="left:1193.5px;top:500.5px;width:150px;text-align:center;font-family:'DejaVu Sans Condensed','Liberation Sans',sans-serif;font-size:16px;line-height:19px;color:#000">PFBDRC56.dwg</span><div style="left:1365px;top:367px;width:126px;height:126px;background:#000;box-shadow:0 0 0 1px #d4d4d4"></div><svg style="left:1365px;top:367px" width="126" height="126" viewBox="0 0 126 126"><use href="#t68"/></svg><span style="left:1351.5px;top:500.5px;width:150px;text-align:center;font-family:'DejaVu Sans Condensed','Liberation Sans',sans-serif;font-size:16px;line-height:19px;color:#000">PFBDRC68.dwg</span><div style="left:891px;top:559px;width:126px;height:126px;background:#000;box-shadow:0 0 0 1px #d4d4d4"></div><svg style="left:891px;top:559px" width="126" height="126" viewBox="0 0 126 126"><use href="#t59"/></svg><span style="left:877.5px;top:692.5px;width:150px;text-align:center;font-family:'DejaVu Sans Condensed','Liberation Sans',sans-serif;font-size:16px;line-height:19px;color:#000">PFBDRC59.dwg</span><div style="left:1049px;top:559px;width:126px;height:126px;background:#000;box-shadow:0 0 0 1px #d4d4d4"></div><svg style="left:1049px;top:559px" width="126" height="126" viewBox="0 0 126 126"><use href="#t61"/></svg><span style="left:1035.5px;top:692.5px;width:150px;text-align:center;font-family:'DejaVu Sans Condensed','Liberation Sans',sans-serif;font-size:16px;line-height:19px;color:#000">PFBDRC61.dwg</span><div style="left:1207px;top:559px;width:126px;height:126px;background:#000;box-shadow:0 0 0 1px #d4d4d4"></div><svg style="left:1207px;top:559px" width="126" height="126" viewBox="0 0 126 126"><use href="#t57"/></svg><span style="left:1193.5px;top:692.5px;width:150px;text-align:center;font-family:'DejaVu Sans Condensed','Liberation Sans',sans-serif;font-size:16px;line-height:19px;color:#000">PFBDRC57.dwg</span><div style="left:1365px;top:559px;width:126px;height:126px;background:#000;box-shadow:0 0 0 1px #d4d4d4"></div><svg style="left:1365px;top:559px" width="126" height="126" viewBox="0 0 126 126"><use href="#t71"/></svg><span style="left:1351.5px;top:692.5px;width:150px;text-align:center;font-family:'DejaVu Sans Condensed','Liberation Sans',sans-serif;font-size:16px;line-height:19px;color:#000">PFBDRC71.dwg</span><div style="left:1650.3px;top:2px;width:759.5px;height:727px;background:#f0f0f0"></div><div style="left:2409.4px;top:2px;width:1.7px;height:728px;background:#000"></div><div style="left:1650px;top:728.4px;width:761px;height:1.7px;background:#000"></div><div style="left:1654px;top:6px;width:753px;height:32px;background:#99b4d1;border-top:1px solid #8c9199;border-left:1px solid #8c9199;box-sizing:border-box;border-right:1px solid #aab4c0"></div><svg style="left:1660px;top:11px" width="24" height="24" viewBox="0 0 24 24" ><rect x="4.10" y="0.10" width="2.4" height="2.8" fill="#1a8a1a" transform="rotate(0 5.3 5)"/><rect x="4.10" y="0.10" width="2.4" height="2.8" fill="#1a8a1a" transform="rotate(45 5.3 5)"/><rect x="4.10" y="0.10" width="2.4" height="2.8" fill="#1a8a1a" transform="rotate(90 5.3 5)"/><rect x="4.10" y="0.10" width="2.4" height="2.8" fill="#1a8a1a" transform="rotate(135 5.3 5)"/><rect x="4.10" y="0.10" width="2.4" height="2.8" fill="#1a8a1a" transform="rotate(180 5.3 5)"/><rect x="4.10" y="0.10" width="2.4" height="2.8" fill="#1a8a1a" transform="rotate(225 5.3 5)"/><rect x="4.10" y="0.10" width="2.4" height="2.8" fill="#1a8a1a" transform="rotate(270 5.3 5)"/><rect x="4.10" y="0.10" width="2.4" height="2.8" fill="#1a8a1a" transform="rotate(315 5.3 5)"/><circle cx="5.3" cy="5" r="3.6" fill="#1a8a1a"/><rect x="18.10" y="-0.50" width="2.4" height="2.8" fill="#2a9a2a" transform="rotate(0 19.3 3.8)"/><rect x="18.10" y="-0.50" width="2.4" height="2.8" fill="#2a9a2a" transform="rotate(45 19.3 3.8)"/><rect x="18.10" y="-0.50" width="2.4" height="2.8" fill="#2a9a2a" transform="rotate(90 19.3 3.8)"/><rect x="18.10" y="-0.50" width="2.4" height="2.8" fill="#2a9a2a" transform="rotate(135 19.3 3.8)"/><rect x="18.10" y="-0.50" width="2.4" height="2.8" fill="#2a9a2a" transform="rotate(180 19.3 3.8)"/><rect x="18.10" y="-0.50" width="2.4" height="2.8" fill="#2a9a2a" transform="rotate(225 19.3 3.8)"/><rect x="18.10" y="-0.50" width="2.4" height="2.8" fill="#2a9a2a" transform="rotate(270 19.3 3.8)"/><rect x="18.10" y="-0.50" width="2.4" height="2.8" fill="#2a9a2a" transform="rotate(315 19.3 3.8)"/><circle cx="19.3" cy="3.8" r="3" fill="#2a9a2a"/><circle cx="19.3" cy="3.8" r="1.35" fill="#bfcddb"/><rect x="4.10" y="13.60" width="2.4" height="2.8" fill="#2a9a2a" transform="rotate(0 5.3 18.7)"/><rect x="4.10" y="13.60" width="2.4" height="2.8" fill="#2a9a2a" transform="rotate(45 5.3 18.7)"/><rect x="4.10" y="13.60" width="2.4" height="2.8" fill="#2a9a2a" transform="rotate(90 5.3 18.7)"/><rect x="4.10" y="13.60" width="2.4" height="2.8" fill="#2a9a2a" transform="rotate(135 5.3 18.7)"/><rect x="4.10" y="13.60" width="2.4" height="2.8" fill="#2a9a2a" transform="rotate(180 5.3 18.7)"/><rect x="4.10" y="13.60" width="2.4" height="2.8" fill="#2a9a2a" transform="rotate(225 5.3 18.7)"/><rect x="4.10" y="13.60" width="2.4" height="2.8" fill="#2a9a2a" transform="rotate(270 5.3 18.7)"/><rect x="4.10" y="13.60" width="2.4" height="2.8" fill="#2a9a2a" transform="rotate(315 5.3 18.7)"/><circle cx="5.3" cy="18.7" r="3.8" fill="#2a9a2a"/><circle cx="5.3" cy="18.7" r="1.71" fill="#bfcddb"/><rect x="11" y="9.300" width="11.500" height="11" rx="3" fill="#7a7a7a"/><rect x="13" y="10" width="7.500" height="8" rx="2" fill="#e8e8e8"/><rect x="15.800" y="12" width="2" height="3.500" fill="#f4d8c8"/><rect x="13.500" y="13" width="2" height="1.600" fill="#555"/><rect x="18" y="13" width="2" height="1.600" fill="#555"/><rect x="13.500" y="16.500" width="6.500" height="2.500" fill="#999"/><path d="M10 24l2.500-4h8.500l2.500 4z" fill="#555"/><path d="M11.500 24l1.500-2h3v2zM18 22h2.500l1.500 2h-4z" fill="#8ad0f0"/></svg><span style="left:1688.3px;top:14px;font-family:'Liberation Sans',sans-serif;font-size:18px;letter-spacing:-0.3px;line-height:21px;color:#000">Detailmanager</span><svg style="left:2363px;top:13.5px" width="11" height="16" viewBox="0 0 11 16" ><path d="M2.500 0.700h5.500v9h-5.500z" fill="none" stroke="#000" stroke-width="1.400"/><path d="M7.300 0.700v9" stroke="#000" stroke-width="2"/><path d="M0 10h11" stroke="#000" stroke-width="1.600"/><path d="M5.400 10v5.200" stroke="#000" stroke-width="1.500"/></svg><svg style="left:2388.3px;top:16px" width="10.6" height="10.6" viewBox="0 0 10.6 10.6" ><path d="M0.700 0.700l9.2 9.2M9.9 0.700l-9.2 9.2" stroke="#000" stroke-width="1.8" fill="none"/></svg><div style="left:1654px;top:42px;width:752px;height:65.5px;background:linear-gradient(90deg,#f1f1f1,#f5f5f5 40%,#fdfdfd)"></div><span style="left:1675.5px;top:50.5px;font-family:'Liberation Sans',sans-serif;font-size:17.200px;letter-spacing:-0.15px;line-height:20px;color:#000;transform:scaleY(1.09);transform-origin:0 16px">Detail</span><span style="left:1744.3px;top:50.5px;font-family:'Liberation Sans',sans-serif;font-size:17.200px;letter-spacing:-0.25px;line-height:20px;color:#000;transform:scaleY(1.09);transform-origin:0 16px">Bearbeiten</span><span style="left:1851px;top:50.5px;font-family:'Liberation Sans',sans-serif;font-size:17.200px;letter-spacing:0.1px;line-height:20px;color:#000;transform:scaleY(1.09);transform-origin:0 16px">Ansicht</span><span style="left:1933.3px;top:50.5px;font-family:'Liberation Sans',sans-serif;font-size:17.200px;letter-spacing:0px;line-height:20px;color:#000;transform:scaleY(1.09);transform-origin:0 16px">Hilfe</span><div style="left:1655px;top:77px;width:197px;height:29px;background:linear-gradient(#f7f7f7,#f3f3f3);border-radius:4px 3px 3px 4px;box-shadow:1px 0 0 #dcdcdc"></div><div style="left:1853px;top:77px;width:281.5px;height:29px;background:linear-gradient(#f7f7f7,#f3f3f3);border-radius:4px 3px 3px 4px;box-shadow:1px 0 0 #dcdcdc"></div><div style="left:2135.5px;top:77px;width:94.5px;height:29px;background:linear-gradient(#f7f7f7,#f3f3f3);border-radius:4px 3px 3px 4px;box-shadow:1px 0 0 #dcdcdc"></div><div style="left:2231px;top:77px;width:39px;height:29px;background:linear-gradient(#f7f7f7,#f3f3f3);border-radius:4px 3px 3px 4px;box-shadow:1px 0 0 #dcdcdc"></div><svg style="left:1658px;top:81px" width="2" height="18" viewBox="0 0 2 18" ><rect x="0" y="0" width="2" height="2" fill="#b9b9b9"/><rect x="0" y="4" width="2" height="2" fill="#b9b9b9"/><rect x="0" y="8" width="2" height="2" fill="#b9b9b9"/><rect x="0" y="12" width="2" height="2" fill="#b9b9b9"/><rect x="0" y="16" width="2" height="2" fill="#b9b9b9"/></svg><svg style="left:1856.5px;top:81px" width="2" height="18" viewBox="0 0 2 18" ><rect x="0" y="0" width="2" height="2" fill="#b9b9b9"/><rect x="0" y="4" width="2" height="2" fill="#b9b9b9"/><rect x="0" y="8" width="2" height="2" fill="#b9b9b9"/><rect x="0" y="12" width="2" height="2" fill="#b9b9b9"/><rect x="0" y="16" width="2" height="2" fill="#b9b9b9"/></svg><svg style="left:2138.5px;top:81px" width="2" height="18" viewBox="0 0 2 18" ><rect x="0" y="0" width="2" height="2" fill="#b9b9b9"/><rect x="0" y="4" width="2" height="2" fill="#b9b9b9"/><rect x="0" y="8" width="2" height="2" fill="#b9b9b9"/><rect x="0" y="12" width="2" height="2" fill="#b9b9b9"/><rect x="0" y="16" width="2" height="2" fill="#b9b9b9"/></svg><svg style="left:2234.5px;top:81px" width="2" height="18" viewBox="0 0 2 18" ><rect x="0" y="0" width="2" height="2" fill="#b9b9b9"/><rect x="0" y="4" width="2" height="2" fill="#b9b9b9"/><rect x="0" y="8" width="2" height="2" fill="#b9b9b9"/><rect x="0" y="12" width="2" height="2" fill="#b9b9b9"/><rect x="0" y="16" width="2" height="2" fill="#b9b9b9"/></svg><svg style="left:1666px;top:80px" width="24" height="24" viewBox="0 0 24 24" overflow="visible"><circle cx="12" cy="12" r="10.8" fill="#2f9e38" stroke="#4a4a4a" stroke-width="2.2"/><path d="M4.5 8.5a9 9 0 0 1 15 0" fill="none" stroke="#6fd06f" stroke-width="1" opacity=".7"/><path d="M6.3 12.6l4.1 4.2l7.6-8.6" fill="none" stroke="#fff" stroke-width="3.1"/></svg><svg style="left:1694px;top:80px" width="24" height="24" viewBox="0 0 24 24" overflow="visible"><rect x="2" y="1" width="2.2" height="2.2" fill="#333"/><rect x="8.5" y="0" width="2.2" height="2.2" fill="#333"/><rect x="15" y="2" width="2.2" height="2.2" fill="#333"/><rect x="21" y="0.5" width="2.2" height="2.2" fill="#333"/><rect x="21" y="8" width="2.2" height="2.2" fill="#333"/><rect x="19.5" y="14" width="2.2" height="2.2" fill="#333"/><rect x="20" y="20" width="2.2" height="2.2" fill="#333"/><rect x="13.5" y="21.5" width="2.2" height="2.2" fill="#333"/><rect x="6" y="20" width="2.2" height="2.2" fill="#333"/><rect x="0.5" y="21.5" width="2.2" height="2.2" fill="#333"/><rect x="0.5" y="14" width="2.2" height="2.2" fill="#333"/><rect x="2" y="8" width="2.2" height="2.2" fill="#333"/><circle cx="12" cy="12.5" r="6.6" fill="#2f9e38" stroke="#4a4a4a" stroke-width="1.3"/><path d="M8.3 12.6l2.7 2.8l4.8-5.6" fill="none" stroke="#fff" stroke-width="2.1"/></svg><svg style="left:1728px;top:80px" width="24" height="24" viewBox="0 0 24 24" overflow="visible"><rect x="0.5" y="0.5" width="13" height="13" fill="#3a3a3a"/><rect x="2" y="2" width="4.3" height="4.3" fill="#6fb6ee"/><rect x="8" y="2" width="4.3" height="4.3" fill="#6fb6ee"/><rect x="2" y="8" width="4.3" height="4.3" fill="#6fb6ee"/><rect x="8" y="8" width="4.3" height="4.3" fill="#cfe6fa"/><path d="M14 1.5c4 .5 6 3 6.5 6.5" fill="none" stroke="#5cb85c" stroke-width="2"/><path d="M17.5 6.5l6 .3l-3.2 3.6z" fill="#3a9a3a"/><rect x="10" y="10" width="13" height="13.5" fill="#35c0f5" stroke="#d0103a" stroke-width="1.6"/><path d="M11.5 21.5l10-10v4l-7 7z" fill="#fff" opacity=".85"/></svg><svg style="left:1761.5px;top:80px" width="24" height="24" viewBox="0 0 24 24" overflow="visible"><path d="M1.5 4.5l18.5 17.5" stroke="#4a4a4a" stroke-width="4.2" fill="none"/><path d="M2.5 4.7l16.5 15.7" stroke="#e4e4e4" stroke-width="1.5" fill="none"/><path d="M7 1l2.2 3.6l4-1.6l-.5 3.2l5.5-.5l4.5 2.5l-4 .8l-3.5-1l-2 2.2l-2.6-1.6l-3.8 1l1-3.3l-3.3-2.3l3-.4z" fill="#ffa51e"/><path d="M7.5 3.5l1.8 2.3l2.5-.5l-.8 2l1.6 1.3l-2.6.1l-1.5 1.5l-.4-2.3l-2-1.2l1.8-.8z" fill="#ffe326"/></svg><svg style="left:1790px;top:80px" width="24" height="24" viewBox="0 0 24 24" overflow="visible"><path d="M1 18.5v-13h6l1.5-1.5h9v4h5.5l-5 10.5z" fill="#4a4a4a"/><path d="M2.2 16.5v-10h5.5l1.5-1.4h7v3z" fill="#ffe135"/><path d="M4 8.3l4-1.8l7 .6l-2 1.8z" fill="#ffa51e"/><path d="M3 17.3l4.5-7.6h14l-4.5 7.6z" fill="#fff6a8"/><path d="M6 16l3.5-5.2h7z" fill="#fffbe0"/></svg><svg style="left:1824px;top:80px" width="24" height="24" viewBox="0 0 24 24" overflow="visible"><rect x="7.5" y="3.5" width="10" height="5" fill="#fff" stroke="#4a4a4a" stroke-width="1.5"/><rect x="2.3" y="8.3" width="20" height="10" rx="1.6" fill="#fff" stroke="#4a4a4a" stroke-width="1.7"/><rect x="7.3" y="15" width="10.4" height="6" fill="#fff" stroke="#4a4a4a" stroke-width="1.5"/><rect x="9" y="17.5" width="7" height="1.6" fill="#9a9a9a"/><rect x="5" y="10.5" width="1.4" height="1.4" fill="#4a4a4a"/></svg><svg style="left:1865px;top:80px" width="24" height="24" viewBox="0 0 24 24" overflow="visible"><path d="M1 1h12.5l3 3h6.5v19h-22z" fill="#fff" stroke="#3a3a3a" stroke-width="1.3"/><rect x="4.3" y="6.3" width="15" height="14" fill="#a8ccf0" stroke="#3a3a3a" stroke-width="1.6"/><rect x="7" y="9" width="3.4" height="3.4" fill="#8c0a3c"/><path d="M11 19l4-6.5l4 6.5z" fill="#3a3a3a"/><path d="M5.5 19.5l4-5l3 5z" fill="#d8ecfa"/></svg><svg style="left:1892.5px;top:80px" width="24" height="24" viewBox="0 0 24 24" overflow="visible"><rect x="1" y="0.8" width="20.5" height="23" fill="#fff" stroke="#2a2a2a" stroke-width="1.5"/><rect x="4" y="4" width="14.5" height="13.5" fill="#a8ccf0" stroke="#3a3a3a" stroke-width="1.5"/><circle cx="8.5" cy="8" r="2.2" fill="#e8d820" stroke="#777" stroke-width=".6"/><path d="M5 16.6v-2.6c3-2.4 9-2.4 12.700 0v2.600z" fill="#8cc820"/><path d="M5 13v-5l2-2v5.500z" fill="#fff" opacity=".7"/></svg><svg style="left:1926px;top:80px" width="24" height="24" viewBox="0 0 24 24" overflow="visible"><path d="M0.5 3.5h9l2 2.500h12v15h-23z" fill="#5a5a5a"/><path d="M2 5h6.500l2 2.500h11.5v12h-20z" fill="#ffd84a"/><path d="M2.500 11h19.500v8.500h-19.500z" fill="#ffec40"/><path d="M3 5.500h6" stroke="#ffeaa0" stroke-width="1.2"/><path d="M12.500 7l1.300 3.200l3.200-1.500l-1.500 3.200l3.200 1.300l-3.200 1.300l1.500 3.200l-3.200-1.500l-1.300 3.200l-1.300-3.200l-3.200 1.500l1.500-3.200l-3.200-1.300l3.200-1.300l-1.500-3.200l3.200 1.500z" fill="#1560d8"/><circle cx="12.5" cy="13.2" r="1.300" fill="#ffec40"/></svg><svg style="left:1953.5px;top:80px" width="24" height="24" viewBox="0 0 24 24" overflow="visible"><text x="-0.5" y="17" font-family="Liberation Sans, sans-serif" font-size="18.5" font-weight="bold" fill="#585858">a</text><text x="12.500" y="17" font-family="Liberation Sans, sans-serif" font-size="18.5" font-weight="bold" fill="#585858">e</text><path d="M8.500 1.500c1.500 0 2.500.5 3 1.500c.5-1 1.500-1.500 3-1.500M11.500 3v18M8.500 23.500c1.500 0 2.500-.5 3-1.500c.5 1 1.500 1.500 3 1.500" fill="none" stroke="#222" stroke-width="1.200"/><path d="M9 19h5l-2.500 3z" fill="#111"/></svg><svg style="left:1981px;top:80px" width="24" height="24" viewBox="0 0 24 24" overflow="visible"><path d="M1 2.500h5l1.500 2h7.500v4.500M1 2.500v14h5" fill="none" stroke="#666" stroke-width="1" stroke-dasharray="1.600 1.400"/><path d="M7 8h6l1.500 2h8.500v13h-16z" fill="#6a6a5a"/><path d="M8 9h4.500l1.500 2h8v11h-14z" fill="#ffd76a"/><path d="M8.500 21.500l11-9.500h2v3l-7.500 6.500z" fill="#ffb84a"/><path d="M9 9.800h3.500" stroke="#fff2c0" stroke-width="1"/></svg><svg style="left:2010px;top:80px" width="24" height="24" viewBox="0 0 24 24" overflow="visible"><path d="M0.500 2.500h8.500l2 3h11.500v14.500h-22z" fill="#ffd76a"/><path d="M0.500 2.500h8.500l2 3h-10.500z" fill="#ffe9a0"/><path d="M1.500 19l14-13h6.500v8l-5.500 5.500z" fill="#ffb84a"/><path d="M0.500 20h22" stroke="#8a7a4a" stroke-width="1"/><path d="M22.500 6v14" stroke="#8a7a4a" stroke-width="1"/><path d="M12 10.500l11.500 12.500M23 11l-10 13" stroke="#ff2a10" stroke-width="2.600" fill="none"/></svg><svg style="left:2044px;top:80px" width="24" height="24" viewBox="0 0 24 24" overflow="visible"><circle cx="9" cy="9.500" r="7.600" fill="#b8d8f4" stroke="#4a4a4a" stroke-width="2.300"/><path d="M14.500 15.500l7 6.500" stroke="#4a4a4a" stroke-width="3.600" fill="none"/><text x="3" y="13" font-family="Liberation Sans, sans-serif" font-weight="bold" font-size="9.500" fill="#333" letter-spacing="-0.5">ABC</text></svg><svg style="left:2073px;top:80px" width="24" height="24" viewBox="0 0 24 24" overflow="visible"><path d="M8.500 1.500h10l4 4v14h-14z" fill="#fff" stroke="#d8183c" stroke-width="1.600"/><path d="M11 6.500h8M11 17h10" stroke="#d8183c" stroke-width="2"/><rect x="12.500" y="8" width="7" height="7" fill="#e8506a"/><path d="M14 13.500l2-4l2 4" stroke="#fff" stroke-width="1.200" fill="none"/><rect x="0.800" y="10.500" width="10.400" height="2.600" rx="1" fill="#3a3a3a"/><rect x="4" y="9" width="4" height="2" fill="#3a3a3a"/><path d="M1.800 13.500h8.400l-.6 10h-7.200z" fill="#4a4a4a"/><path d="M4.500 15v7M7.500 15v7" stroke="#cfcfcf" stroke-width="1.200"/></svg><svg style="left:2106px;top:80px" width="24" height="24" viewBox="0 0 24 24" overflow="visible"><circle cx="9.500" cy="9.500" r="7.800" fill="#a8ccf0" stroke="#4a4a4a" stroke-width="2.400"/><path d="M4.500 8l6 6" stroke="#e0f0ff" stroke-width="1.500"/><path d="M15.300 15.300l7 7" stroke="#3a3a3a" stroke-width="3.600" fill="none"/></svg><svg style="left:2147.5px;top:80px" width="24" height="24" viewBox="0 0 24 24" overflow="visible"><path d="M0 4h22.500" stroke="#d81848" stroke-width="1.400"/><rect x="0.700" y="9" width="21.500" height="9.300" fill="#36c0f4" stroke="#3a3a3a" stroke-width="1.500"/><rect x="11.800" y="9.800" width="9.700" height="7.800" fill="#a8ccf0"/><path d="M11.200 9v9.300" stroke="#3a3a3a" stroke-width="1.500"/><path d="M2 17l7-7h2l-7 7zM13 17l7-7v2.500l-4.500 4.500z" fill="#fff" opacity=".85"/></svg><svg style="left:2174px;top:80px" width="24" height="24" viewBox="0 0 24 24" overflow="visible"><rect x="0.300" y="0.300" width="23.400" height="23.400" rx="3" fill="#3a3a3a"/><rect x="1.800" y="1.800" width="20.400" height="20.400" rx="2" fill="#d80a3a"/><rect x="5" y="5" width="14" height="14" fill="#3a3a3a"/><rect x="6.300" y="6.300" width="11.400" height="11.400" fill="#a8ccf0"/><path d="M17.500 14.500v3h-3z" fill="#fff"/><path d="M6.500 9v-2.500h2.500z" fill="#e0f0ff"/></svg><svg style="left:2205px;top:80px" width="24" height="24" viewBox="0 0 24 24" overflow="visible"><path d="M1 2.500h10l5.500 5.500v14.500h-15.500z" fill="#fff" stroke="#c8d8e8" stroke-width="1"/><path d="M11 2.500l5.500 5.500v14.500h-15.500" fill="none" stroke="#2a2a7a" stroke-width="1.300"/><path d="M11 2.500v5.500h5.500z" fill="#a8b8d8"/><path d="M5 10.500c1-3 5-3.500 7-1.500M12.500 15c-1 3-5 3.500-7 1.500" fill="none" stroke="#5aa81e" stroke-width="2"/><path d="M10.500 6.500l3.500 3.200l-4.500 1z" fill="#3a7a1e"/><path d="M7 19.500l-3.500-3.200l4.500-1z" fill="#3a7a1e"/></svg><svg style="left:2245px;top:80px" width="24" height="24" viewBox="0 0 24 24" overflow="visible"><text x="1" y="22" font-family="Liberation Sans, sans-serif" font-weight="bold" font-size="28" fill="#c89a10" stroke="#c89a10" stroke-width=".8">?</text><text x="0.500" y="21.500" font-family="Liberation Sans, sans-serif" font-weight="bold" font-size="28" fill="#ffd21e">?</text></svg><div style="left:1723px;top:82px;width:1px;height:21px;background:#c4c4c4"></div><div style="left:1757.5px;top:82px;width:1px;height:21px;background:#c4c4c4"></div><div style="left:1819.5px;top:82px;width:1px;height:21px;background:#c4c4c4"></div><div style="left:1921px;top:82px;width:1px;height:21px;background:#c4c4c4"></div><div style="left:2039px;top:82px;width:1px;height:21px;background:#c4c4c4"></div><div style="left:2101.5px;top:82px;width:1px;height:21px;background:#c4c4c4"></div><div style="left:1985px;top:108px;width:421px;height:616.5px;background:#fff;border:1px solid #8e959e;box-sizing:border-box"></div><div style="left:1985px;top:108px;width:421px;height:33px;background:linear-gradient(#fbfcfd,#e9eef4 45%,#c5d2e2);border:1px solid #8e959e;border-bottom:1px solid #8e959e;box-sizing:border-box"></div><div style="left:1836px;top:110.5px;width:169px;height:29.5px;background:linear-gradient(#fdfdfe,#e4eaf2 50%,#cad6e4);border:1px solid #9aa3ad;border-bottom:none;box-sizing:border-box"></div><span style="left:0px;top:114.5px;font-family:'DejaVu Sans Condensed','Liberation Sans',sans-serif;font-weight:bold;font-size:16px;line-height:19px;color:#000;letter-spacing:0.12px"></span><div style="left:2007.5px;top:110.5px;width:179px;height:29.5px;background:linear-gradient(#fdfdfe,#e4eaf2 50%,#cad6e4);border:1px solid #9aa3ad;border-bottom:none;box-sizing:border-box"></div><span style="left:2019px;top:114.5px;font-family:'DejaVu Sans Condensed','Liberation Sans',sans-serif;font-weight:bold;font-size:16px;line-height:19px;color:#000;letter-spacing:0.12px">Bäume-2D-Raster</span><svg style="left:2293px;top:118px" width="7" height="11" viewBox="0 0 7 11" ><path d="M6.500 0.500v10l-6-5z" fill="#000"/></svg><svg style="left:2324px;top:118px" width="7" height="11" viewBox="0 0 7 11" ><path d="M0.500 0.500v10l6-5z" fill="#000"/></svg><svg style="left:2349.5px;top:121.5px" width="11" height="6" viewBox="0 0 11 6" ><path d="M0 0h11l-5.500 5.500z" fill="#000"/></svg><svg style="left:2380px;top:118px" width="9.6" height="9.6" viewBox="0 0 9.6 9.6" ><path d="M0.700 0.700l8.2 8.2M8.9 0.700l-8.2 8.2" stroke="#000" stroke-width="2" fill="none"/></svg><div style="left:2378.8px;top:141.5px;width:25px;height:581.5px;background:#f0f0f0"></div><div style="left:2378.8px;top:354.4px;width:23.7px;height:57.3px;background:#cdcdcd"></div><svg style="left:2384.8px;top:152.5px" width="13" height="10" viewBox="0 0 13 10" ><path d="M1.500 7.700l5-5.700l5 5.700" fill="none" stroke="#5a5a5a" stroke-width="2.800"/></svg><svg style="left:2384.8px;top:705.0px" width="13" height="10" viewBox="0 0 13 10" ><path d="M1.500 1.900l5 5.700l5-5.700" fill="none" stroke="#5a5a5a" stroke-width="2.800"/></svg><div style="left:2026px;top:176px;width:126px;height:126px;background:#000;box-shadow:0 0 0 1px #d4d4d4"></div><svg style="left:2026px;top:176px" width="126" height="126" viewBox="0 0 126 126"><use href="#t43"/></svg><span style="left:2012.5px;top:309.5px;width:150px;text-align:center;font-family:'DejaVu Sans Condensed','Liberation Sans',sans-serif;font-size:16px;line-height:19px;color:#000">PFBDRC43.dwg</span><div style="left:2184px;top:176px;width:126px;height:126px;background:#000;box-shadow:0 0 0 1px #d4d4d4"></div><svg style="left:2184px;top:176px" width="126" height="126" viewBox="0 0 126 126"><use href="#t60"/></svg><span style="left:2170.5px;top:309.5px;width:150px;text-align:center;font-family:'DejaVu Sans Condensed','Liberation Sans',sans-serif;font-size:16px;line-height:19px;color:#000">PFBDRC60.dwg</span><div style="left:2026px;top:368px;width:126px;height:126px;background:#000;box-shadow:0 0 0 1px #d4d4d4"></div><svg style="left:2026px;top:368px" width="126" height="126" viewBox="0 0 126 126"><use href="#t56"/></svg><span style="left:2012.5px;top:501.5px;width:150px;text-align:center;font-family:'DejaVu Sans Condensed','Liberation Sans',sans-serif;font-size:16px;line-height:19px;color:#000">PFBDRC56.dwg</span><div style="left:2184px;top:368px;width:126px;height:126px;background:#000;box-shadow:0 0 0 1px #d4d4d4"></div><svg style="left:2184px;top:368px" width="126" height="126" viewBox="0 0 126 126"><use href="#t68"/></svg><span style="left:2170.5px;top:501.5px;width:150px;text-align:center;font-family:'DejaVu Sans Condensed','Liberation Sans',sans-serif;font-size:16px;line-height:19px;color:#000">PFBDRC68.dwg</span><div style="left:2026px;top:560px;width:126px;height:126px;background:#000;box-shadow:0 0 0 1px #d4d4d4"></div><svg style="left:2026px;top:560px" width="126" height="126" viewBox="0 0 126 126"><use href="#t57"/></svg><span style="left:2012.5px;top:693.5px;width:150px;text-align:center;font-family:'DejaVu Sans Condensed','Liberation Sans',sans-serif;font-size:16px;line-height:19px;color:#000">PFBDRC57.dwg</span><div style="left:2184px;top:560px;width:126px;height:126px;background:#000;box-shadow:0 0 0 1px #d4d4d4"></div><svg style="left:2184px;top:560px" width="126" height="126" viewBox="0 0 126 126"><use href="#t71"/></svg><span style="left:2170.5px;top:693.5px;width:150px;text-align:center;font-family:'DejaVu Sans Condensed','Liberation Sans',sans-serif;font-size:16px;line-height:19px;color:#000">PFBDRC71.dwg</span><div style="left:1664px;top:112px;width:28.5px;height:102px;background:#bcdcf4;border:1px solid #3c8ee0;box-sizing:border-box"></div><span style="left:1666.7px;top:120px;letter-spacing:-0.3px;writing-mode:vertical-rl;font-family:'DejaVu Sans Condensed','Liberation Sans',sans-serif;font-weight:bold;font-size:16px;line-height:19px;color:#000">Navigation</span><div style="left:1693px;top:108px;width:299px;height:617px;background:#f0f0f0"></div><div style="left:1693px;top:108px;width:296px;height:40px;background:linear-gradient(#f8f8f8,#f1f1f1);border-radius:4px 4px 0 0"></div><svg style="left:1696.5px;top:110.5px" width="2" height="32" viewBox="0 0 2 32" ><rect x="0" y="0" width="2" height="2" fill="#b9b9b9"/><rect x="0" y="4" width="2" height="2" fill="#b9b9b9"/><rect x="0" y="8" width="2" height="2" fill="#b9b9b9"/><rect x="0" y="12" width="2" height="2" fill="#b9b9b9"/><rect x="0" y="16" width="2" height="2" fill="#b9b9b9"/><rect x="0" y="20" width="2" height="2" fill="#b9b9b9"/><rect x="0" y="24" width="2" height="2" fill="#b9b9b9"/></svg><span style="left:1706px;top:116.5px;font-family:'Liberation Sans',sans-serif;font-size:17.500px;letter-spacing:-0.55px;line-height:21px;color:#6a788c">Navigation</span><svg style="left:1943.5px;top:122.5px" width="13" height="9" viewBox="0 0 13 9" ><path d="M0 4.500h4.500" stroke="#000" stroke-width="1.200"/><path d="M4.500 0v9" stroke="#000" stroke-width="1.300"/><path d="M4.500 2.200h5.500v4h-5.500z" fill="none" stroke="#000" stroke-width="1.200"/><path d="M4.500 6h5.500" stroke="#000" stroke-width="1.600"/></svg><svg style="left:1969px;top:122px" width="9.4" height="9.4" viewBox="0 0 9.4 9.4" ><path d="M0.700 0.700l8.0 8.0M8.700000000000001 0.700l-8.0 8.0" stroke="#000" stroke-width="2" fill="none"/></svg><div style="left:1701px;top:154.5px;width:278px;height:560.5px;background:#fff;border:1px solid #828790;overflow:hidden"><svg style="left:0;top:0" width="252" height="534.0"><path d="M11.5 0V547" stroke="#808080" stroke-width="1" stroke-dasharray="1 1" shape-rendering="crispEdges"/><path d="M38.5 23V517" stroke="#808080" stroke-width="1" stroke-dasharray="1 1" shape-rendering="crispEdges"/><path d="M65.5 47V229" stroke="#808080" stroke-width="1" stroke-dasharray="1 1" shape-rendering="crispEdges"/><path d="M65.5 335V493" stroke="#808080" stroke-width="1" stroke-dasharray="1 1" shape-rendering="crispEdges"/><path d="M18.5 12.5H26.5" stroke="#808080" stroke-width="1" stroke-dasharray="1 1" shape-rendering="crispEdges"/><path d="M45.5 36.5H53.5" stroke="#808080" stroke-width="1" stroke-dasharray="1 1" shape-rendering="crispEdges"/><path d="M65.5 60.5H80.5" stroke="#808080" stroke-width="1" stroke-dasharray="1 1" shape-rendering="crispEdges"/><path d="M65.5 84.5H80.5" stroke="#808080" stroke-width="1" stroke-dasharray="1 1" shape-rendering="crispEdges"/><path d="M65.5 108.5H80.5" stroke="#808080" stroke-width="1" stroke-dasharray="1 1" shape-rendering="crispEdges"/><path d="M65.5 132.5H80.5" stroke="#808080" stroke-width="1" stroke-dasharray="1 1" shape-rendering="crispEdges"/><path d="M65.5 156.5H80.5" stroke="#808080" stroke-width="1" stroke-dasharray="1 1" shape-rendering="crispEdges"/><path d="M65.5 180.5H80.5" stroke="#808080" stroke-width="1" stroke-dasharray="1 1" shape-rendering="crispEdges"/><path d="M65.5 204.5H80.5" stroke="#808080" stroke-width="1" stroke-dasharray="1 1" shape-rendering="crispEdges"/><path d="M65.5 228.5H80.5" stroke="#808080" stroke-width="1" stroke-dasharray="1 1" shape-rendering="crispEdges"/><path d="M45.5 252.5H53.5" stroke="#808080" stroke-width="1" stroke-dasharray="1 1" shape-rendering="crispEdges"/><path d="M38.5 276.5H53.5" stroke="#808080" stroke-width="1" stroke-dasharray="1 1" shape-rendering="crispEdges"/><path d="M38.5 300.5H53.5" stroke="#808080" stroke-width="1" stroke-dasharray="1 1" shape-rendering="crispEdges"/><path d="M45.5 324.5H53.5" stroke="#808080" stroke-width="1" stroke-dasharray="1 1" shape-rendering="crispEdges"/><path d="M65.5 348.5H80.5" stroke="#808080" stroke-width="1" stroke-dasharray="1 1" shape-rendering="crispEdges"/><path d="M65.5 372.5H80.5" stroke="#808080" stroke-width="1" stroke-dasharray="1 1" shape-rendering="crispEdges"/><path d="M72.5 396.5H80.5" stroke="#808080" stroke-width="1" stroke-dasharray="1 1" shape-rendering="crispEdges"/><path d="M65.5 420.5H80.5" stroke="#808080" stroke-width="1" stroke-dasharray="1 1" shape-rendering="crispEdges"/><path d="M65.5 444.5H80.5" stroke="#808080" stroke-width="1" stroke-dasharray="1 1" shape-rendering="crispEdges"/><path d="M65.5 468.5H80.5" stroke="#808080" stroke-width="1" stroke-dasharray="1 1" shape-rendering="crispEdges"/><path d="M65.5 492.5H80.5" stroke="#808080" stroke-width="1" stroke-dasharray="1 1" shape-rendering="crispEdges"/><path d="M45.5 516.5H53.5" stroke="#808080" stroke-width="1" stroke-dasharray="1 1" shape-rendering="crispEdges"/></svg><svg style="left:30px;top:530.5px" width="14" height="21" viewBox="0 0 14 21"><path d="M0 0h13v11.500l1 .7v5.800h-9.500v-12z" fill="url(#fg)"/><path d="M0 0l5 4.300v13.700l-1.300 3l-3.700-2.700z" fill="#fce6a2"/></svg><svg style="left:5px;top:6px" width="13" height="13"><rect x="0.500" y="0.500" width="12" height="12" rx="1.500" fill="url(#pm)" stroke="#919191"/><path d="M2.500 6.500h8" stroke="#4b63a7" stroke-width="1.100"/></svg><svg style="left:30px;top:2.5px" width="14" height="21" viewBox="0 0 14 21"><path d="M0 0h13v11.500l1 .7v5.800h-9.500v-12z" fill="url(#fg)"/><path d="M0 0l5 4.300v13.700l-1.300 3l-3.700-2.700z" fill="#fce6a2"/></svg><span class="tr" style="left:52.8px;top:2px;">Pflanzen</span><svg style="left:32px;top:30px" width="13" height="13"><rect x="0.500" y="0.500" width="12" height="12" rx="1.500" fill="url(#pm)" stroke="#919191"/><path d="M2.500 6.500h8" stroke="#4b63a7" stroke-width="1.100"/></svg><svg style="left:57px;top:26.5px" width="14" height="21" viewBox="0 0 14 21"><path d="M0 0h13v11.500l1 .7v5.800h-9.500v-12z" fill="url(#fg)"/><path d="M0 0l5 4.300v13.700l-1.300 3l-3.700-2.700z" fill="#fce6a2"/></svg><span class="tr" style="left:79.8px;top:26px;">Bäume</span><svg style="left:84px;top:50.5px" width="14" height="21" viewBox="0 0 14 21"><path d="M0 0h13v11.500l1 .7v5.800h-9.500v-12z" fill="url(#fg)"/><path d="M0 0l5 4.300v13.700l-1.300 3l-3.700-2.700z" fill="#fce6a2"/></svg><span class="tr" style="left:106.8px;top:50px;background:#ededed;">2D-Color</span><svg style="left:84px;top:74.5px" width="14" height="21" viewBox="0 0 14 21"><path d="M0 0h13v11.500l1 .7v5.800h-9.500v-12z" fill="url(#fg)"/><path d="M0 0l5 4.300v13.700l-1.300 3l-3.700-2.700z" fill="#fce6a2"/></svg><span class="tr" style="left:106.8px;top:74px;">2D-Monochrom</span><svg style="left:84px;top:98.5px" width="14" height="21" viewBox="0 0 14 21"><path d="M0 0h13v11.500l1 .7v5.800h-9.500v-12z" fill="url(#fg)"/><path d="M0 0l5 4.300v13.700l-1.300 3l-3.700-2.700z" fill="#fce6a2"/></svg><span class="tr" style="left:106.8px;top:98px;">2D-Raster</span><svg style="left:84px;top:122.5px" width="14" height="21" viewBox="0 0 14 21"><path d="M0 0h13v11.500l1 .7v5.800h-9.500v-12z" fill="url(#fg)"/><path d="M0 0l5 4.300v13.700l-1.300 3l-3.700-2.700z" fill="#fce6a2"/></svg><span class="tr" style="left:106.8px;top:122px;">3D</span><svg style="left:84px;top:146.5px" width="14" height="21" viewBox="0 0 14 21"><path d="M0 0h13v11.500l1 .7v5.800h-9.500v-12z" fill="url(#fg)"/><path d="M0 0l5 4.300v13.700l-1.300 3l-3.700-2.700z" fill="#fce6a2"/></svg><span class="tr" style="left:106.8px;top:146px;">Ansicht-2D</span><svg style="left:84px;top:170.5px" width="14" height="21" viewBox="0 0 14 21"><path d="M0 0h13v11.500l1 .7v5.800h-9.500v-12z" fill="url(#fg)"/><path d="M0 0l5 4.300v13.700l-1.300 3l-3.700-2.700z" fill="#fce6a2"/></svg><span class="tr" style="left:106.8px;top:170px;">Ansicht-3D</span><svg style="left:84px;top:194.5px" width="14" height="21" viewBox="0 0 14 21"><path d="M0 0h13v11.500l1 .7v5.800h-9.500v-12z" fill="url(#fg)"/><path d="M0 0l5 4.300v13.700l-1.300 3l-3.700-2.700z" fill="#fce6a2"/></svg><span class="tr" style="left:106.8px;top:194px;">Ansicht-3D-Raster</span><svg style="left:84px;top:218.5px" width="14" height="21" viewBox="0 0 14 21"><path d="M0 0h13v11.500l1 .7v5.800h-9.500v-12z" fill="url(#fg)"/><path d="M0 0l5 4.300v13.700l-1.300 3l-3.700-2.700z" fill="#fce6a2"/></svg><span class="tr" style="left:106.8px;top:218px;">Multiview Block</span><svg style="left:32px;top:246px" width="13" height="13"><rect x="0.500" y="0.500" width="12" height="12" rx="1.500" fill="url(#pm)" stroke="#919191"/><path d="M2.500 6.500h8" stroke="#4b63a7" stroke-width="1.100"/><path d="M6.500 2.500v8" stroke="#4b63a7" stroke-width="1.100"/></svg><svg style="left:57px;top:242.5px" width="14" height="21" viewBox="0 0 14 21"><path d="M0 0h13v11.500l1 .7v5.800h-9.500v-12z" fill="url(#fg)"/><path d="M0 0l5 4.300v13.700l-1.300 3l-3.700-2.700z" fill="#fce6a2"/></svg><span class="tr" style="left:79.8px;top:242px;">Gräser</span><svg style="left:57px;top:266.5px" width="14" height="21" viewBox="0 0 14 21"><path d="M0 0h13v11.500l1 .7v5.800h-9.500v-12z" fill="url(#fg)"/><path d="M0 0l5 4.300v13.700l-1.300 3l-3.700-2.700z" fill="#fce6a2"/></svg><span class="tr" style="left:79.8px;top:266px;">Schatten</span><svg style="left:57px;top:290.5px" width="14" height="21" viewBox="0 0 14 21"><path d="M0 0h13v11.500l1 .7v5.800h-9.500v-12z" fill="url(#fg)"/><path d="M0 0l5 4.300v13.700l-1.300 3l-3.700-2.700z" fill="#fce6a2"/></svg><span class="tr" style="left:79.8px;top:290px;">Schema</span><svg style="left:32px;top:318px" width="13" height="13"><rect x="0.500" y="0.500" width="12" height="12" rx="1.500" fill="url(#pm)" stroke="#919191"/><path d="M2.500 6.500h8" stroke="#4b63a7" stroke-width="1.100"/></svg><svg style="left:57px;top:314.5px" width="14" height="21" viewBox="0 0 14 21"><path d="M0 0h13v11.500l1 .7v5.800h-9.500v-12z" fill="url(#fg)"/><path d="M0 0l5 4.300v13.700l-1.300 3l-3.700-2.700z" fill="#fce6a2"/></svg><span class="tr" style="left:79.8px;top:314px;">Stauden</span><svg style="left:84px;top:338.5px" width="14" height="21" viewBox="0 0 14 21"><path d="M0 0h13v11.500l1 .7v5.800h-9.500v-12z" fill="url(#fg)"/><path d="M0 0l5 4.300v13.700l-1.300 3l-3.700-2.700z" fill="#fce6a2"/></svg><span class="tr" style="left:106.8px;top:338px;">2D-Grafik</span><svg style="left:84px;top:362.5px" width="14" height="21" viewBox="0 0 14 21"><path d="M0 0h13v11.500l1 .7v5.800h-9.500v-12z" fill="url(#fg)"/><path d="M0 0l5 4.300v13.700l-1.300 3l-3.700-2.700z" fill="#fce6a2"/></svg><span class="tr" style="left:106.8px;top:362px;">2D-Raster</span><svg style="left:59px;top:390px" width="13" height="13"><rect x="0.500" y="0.500" width="12" height="12" rx="1.500" fill="url(#pm)" stroke="#919191"/><path d="M2.500 6.500h8" stroke="#4b63a7" stroke-width="1.100"/><path d="M6.500 2.500v8" stroke="#4b63a7" stroke-width="1.100"/></svg><svg style="left:84px;top:386.5px" width="14" height="21" viewBox="0 0 14 21"><path d="M0 0h13v11.500l1 .7v5.800h-9.500v-12z" fill="url(#fg)"/><path d="M0 0l5 4.300v13.700l-1.300 3l-3.700-2.700z" fill="#fce6a2"/></svg><span class="tr" style="left:106.8px;top:386px;">2D-Symbol</span><svg style="left:84px;top:410.5px" width="14" height="21" viewBox="0 0 14 21"><path d="M0 0h13v11.500l1 .7v5.800h-9.500v-12z" fill="url(#fg)"/><path d="M0 0l5 4.300v13.700l-1.300 3l-3.700-2.700z" fill="#fce6a2"/></svg><span class="tr" style="left:106.8px;top:410px;">3D</span><svg style="left:84px;top:434.5px" width="14" height="21" viewBox="0 0 14 21"><path d="M0 0h13v11.500l1 .7v5.800h-9.500v-12z" fill="url(#fg)"/><path d="M0 0l5 4.300v13.700l-1.300 3l-3.700-2.700z" fill="#fce6a2"/></svg><span class="tr" style="left:106.8px;top:434px;">Ansicht-2D</span><svg style="left:84px;top:458.5px" width="14" height="21" viewBox="0 0 14 21"><path d="M0 0h13v11.500l1 .7v5.800h-9.500v-12z" fill="url(#fg)"/><path d="M0 0l5 4.300v13.700l-1.300 3l-3.700-2.700z" fill="#fce6a2"/></svg><span class="tr" style="left:106.8px;top:458px;">Ansicht-2D-Raster</span><svg style="left:84px;top:482.5px" width="14" height="21" viewBox="0 0 14 21"><path d="M0 0h13v11.500l1 .7v5.800h-9.500v-12z" fill="url(#fg)"/><path d="M0 0l5 4.300v13.700l-1.300 3l-3.700-2.700z" fill="#fce6a2"/></svg><span class="tr" style="left:106.8px;top:482px;">Ansicht-3D</span><svg style="left:32px;top:510px" width="13" height="13"><rect x="0.500" y="0.500" width="12" height="12" rx="1.500" fill="url(#pm)" stroke="#919191"/><path d="M2.500 6.500h8" stroke="#4b63a7" stroke-width="1.100"/><path d="M6.500 2.500v8" stroke="#4b63a7" stroke-width="1.100"/></svg><svg style="left:57px;top:506.5px" width="14" height="21" viewBox="0 0 14 21"><path d="M0 0h13v11.500l1 .7v5.800h-9.500v-12z" fill="url(#fg)"/><path d="M0 0l5 4.300v13.700l-1.300 3l-3.700-2.700z" fill="#fce6a2"/></svg><span class="tr" style="left:79.8px;top:506px;">Sträucher</span><div style="left:252px;top:0;width:26px;height:534.0px;background:#f0f0f0"></div><div style="left:252px;top:288px;width:24.5px;height:64.500px;background:#cdcdcd"></div><svg style="left:257.5px;top:10px" width="13" height="10"><path d="M1.500 7.700l5-5.700l5 5.700" fill="none" stroke="#5a5a5a" stroke-width="2.800"/></svg><svg style="left:257.5px;top:515.0px" width="13" height="10"><path d="M1.500 1.900l5 5.700l5-5.700" fill="none" stroke="#5a5a5a" stroke-width="2.800"/></svg><div style="left:0;top:534.0px;width:278px;height:26.5px;background:#f0f0f0"></div><div style="left:80px;top:534.0px;width:78px;height:24.5px;background:#cdcdcd"></div><svg style="left:9px;top:540.0px" width="10" height="13"><path d="M7.700 1.500l-5.700 5l5.700 5" fill="none" stroke="#5a5a5a" stroke-width="2.800"/></svg><svg style="left:232px;top:540.0px" width="10" height="13"><path d="M1.900 1.500l5.700 5l-5.700 5" fill="none" stroke="#5a5a5a" stroke-width="2.800"/></svg></div><div style="left:1989px;top:108px;width:1px;height:617px;background:#a8a8a8"></div><div style="left:1993px;top:108px;width:1px;height:617px;background:#a8a8a8"></div><svg style="left:720.5px;top:316.3px" width="175.0" height="36" viewBox="0 0 175.0 36" ><g filter="drop-shadow(1px 2.500px 1.800px rgba(0,0,0,.42))"><path d="M6 16H145.0" stroke="#f9464b" stroke-width="8" stroke-linecap="round"/><path d="M145.0 4l24 12l-24 12z" fill="#f9464b"/></g></svg><svg style="left:1559.5px;top:311.5px" width="175.0" height="36" viewBox="0 0 175.0 36" ><g filter="drop-shadow(1px 2.500px 1.800px rgba(0,0,0,.42))"><path d="M6 16H145.0" stroke="#f9464b" stroke-width="8" stroke-linecap="round"/><path d="M145.0 4l24 12l-24 12z" fill="#f9464b"/></g></svg></div></body></html>
